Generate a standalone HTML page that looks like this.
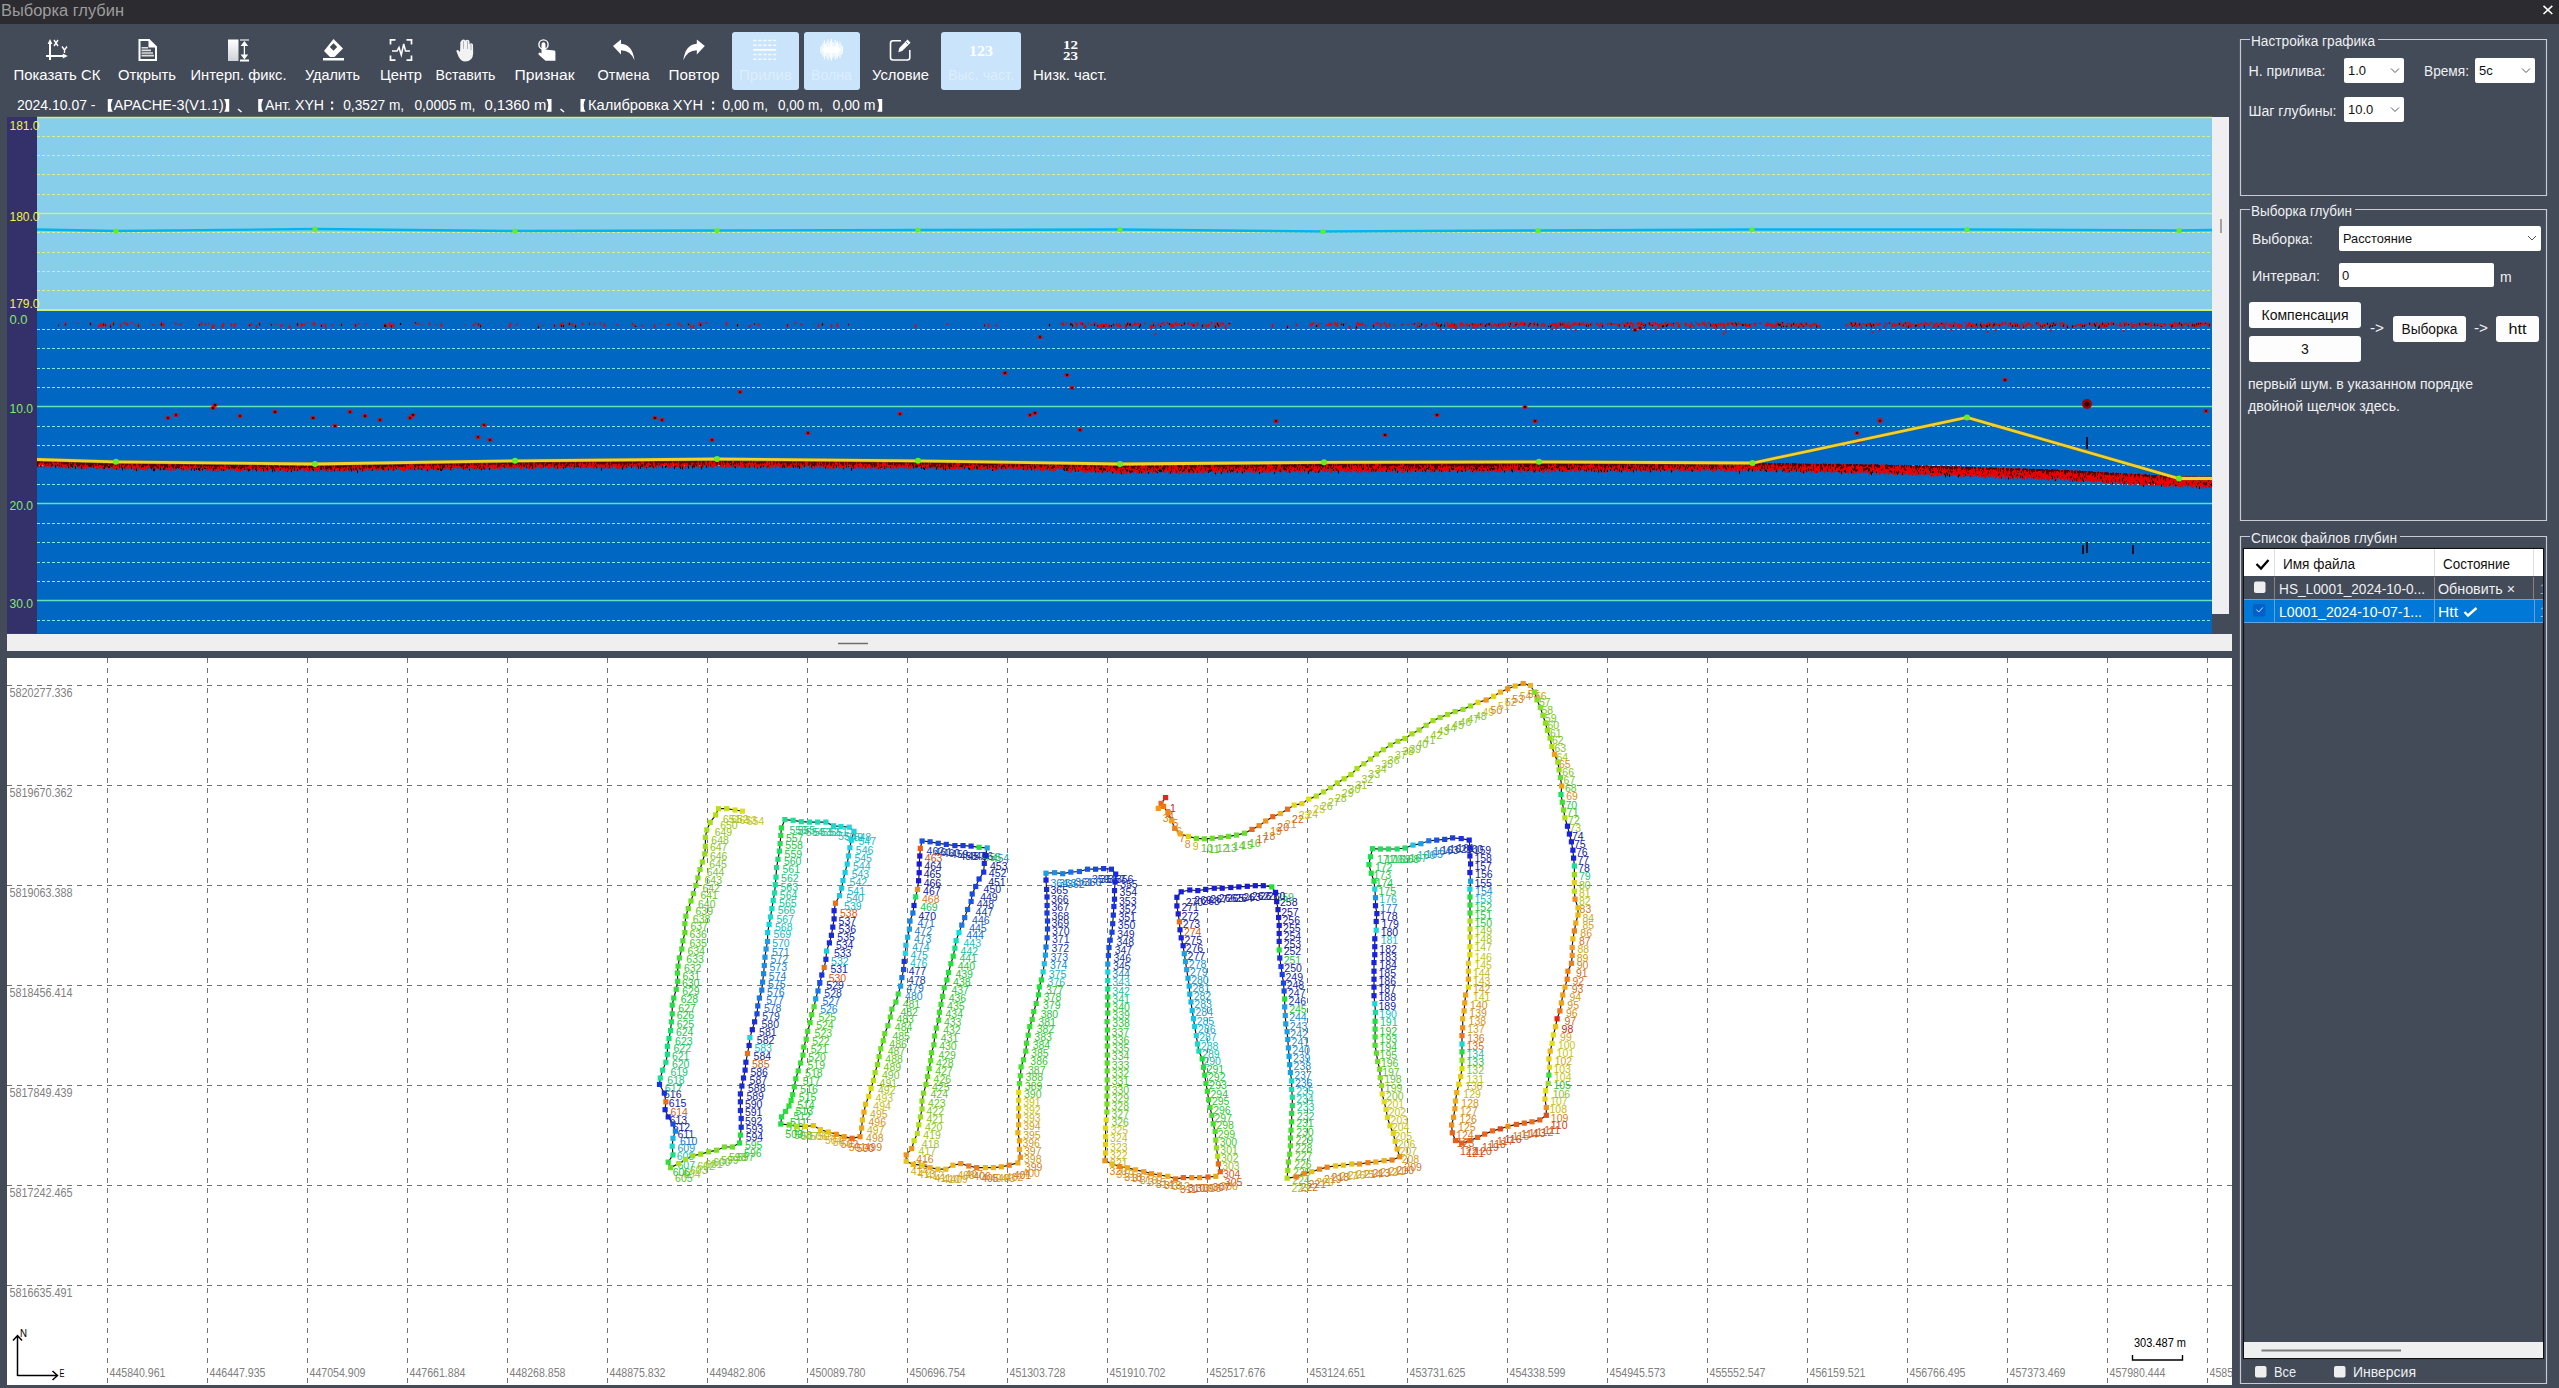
<!DOCTYPE html>
<html><head><meta charset="utf-8"><title>Выборка глубин</title>
<style>
html,body{margin:0;padding:0;background:#434a58;overflow:hidden;width:2559px;height:1388px}
svg{display:block}
text{font-family:'Liberation Sans', sans-serif}
</style></head><body>
<svg width="2559" height="1388" viewBox="0 0 2559 1388">
<rect x="0" y="0" width="2559" height="1388" fill="#434a58"/>
<rect x="0" y="0" width="2559" height="24" fill="#2c2b2f"/>
<text x="1" y="15.5" font-size="16" fill="#9d9d9d" textLength="123" lengthAdjust="spacingAndGlyphs">Выборка глубин</text>
<path d="M2543.5 5.8 L2552.3 14 M2552.3 5.8 L2543.5 14" stroke="#ffffff" stroke-width="1.6"/>
<rect x="732" y="32" width="67" height="58" rx="3" fill="#c9e4fb"/>
<rect x="804" y="32" width="56" height="58" rx="3" fill="#c9e4fb"/>
<rect x="941" y="32" width="80" height="58" rx="3" fill="#c9e4fb"/>
<text x="13.5" y="79.5" font-size="15" fill="#ffffff" textLength="87" lengthAdjust="spacingAndGlyphs">Показать СК</text>
<text x="118" y="79.5" font-size="15" fill="#ffffff" textLength="58" lengthAdjust="spacingAndGlyphs">Открыть</text>
<text x="190.5" y="79.5" font-size="15" fill="#ffffff" textLength="96" lengthAdjust="spacingAndGlyphs">Интерп. фикс.</text>
<text x="305" y="79.5" font-size="15" fill="#ffffff" textLength="55" lengthAdjust="spacingAndGlyphs">Удалить</text>
<text x="380" y="79.5" font-size="15" fill="#ffffff" textLength="42" lengthAdjust="spacingAndGlyphs">Центр</text>
<text x="435.5" y="79.5" font-size="15" fill="#ffffff" textLength="60" lengthAdjust="spacingAndGlyphs">Вставить</text>
<text x="514.5" y="79.5" font-size="15" fill="#ffffff" textLength="60" lengthAdjust="spacingAndGlyphs">Признак</text>
<text x="597.5" y="79.5" font-size="15" fill="#ffffff" textLength="52" lengthAdjust="spacingAndGlyphs">Отмена</text>
<text x="668.5" y="79.5" font-size="15" fill="#ffffff" textLength="51" lengthAdjust="spacingAndGlyphs">Повтор</text>
<text x="739" y="79.5" font-size="15" fill="#ddeefc" textLength="53" lengthAdjust="spacingAndGlyphs">Прилив</text>
<text x="811" y="79.5" font-size="15" fill="#ddeefc" textLength="41" lengthAdjust="spacingAndGlyphs">Волна</text>
<text x="872" y="79.5" font-size="15" fill="#ffffff" textLength="57" lengthAdjust="spacingAndGlyphs">Условие</text>
<text x="948" y="79.5" font-size="15" fill="#ddeefc" textLength="66" lengthAdjust="spacingAndGlyphs">Выс. част.</text>
<text x="1033" y="79.5" font-size="15" fill="#ffffff" textLength="74" lengthAdjust="spacingAndGlyphs">Низк. част.</text>
<g stroke="#fff" stroke-width="2" fill="none"><path d="M50 43 V60 M46 56 H64"/></g><path d="M50 39 L47.6 44 H52.4 Z M67.8 56 L62.8 53.6 V58.4 Z" fill="#fff"/><path d="M54 40 L58 46 M58 40 L54 46 M62 46.5 L64.5 50 L67 46.5 M64.5 50 V53" stroke="#fff" stroke-width="1.4" fill="none"/>
<path d="M139.5 40 H149 L156 47 V60 H139.5 Z" fill="none" stroke="#fff" stroke-width="2"/><path d="M148.5 39 L157 47.5 H148.5 Z" fill="#fff"/><path d="M141.5 47.8 H148 M141.5 50.4 H151 M141.5 53 H153 M141.5 55.6 H154" stroke="#ddd" stroke-width="1.6"/>
<defs><linearGradient id="gi" x1="0" y1="0" x2="0" y2="1"><stop offset="0" stop-color="#ffffff"/><stop offset="1" stop-color="#cfd2d6"/></linearGradient></defs><rect x="228" y="39.5" width="10.5" height="21.5" fill="url(#gi)"/><path d="M240 40 H249" stroke="#a9adb5" stroke-width="2"/><path d="M240 60.5 H249" stroke="#fff" stroke-width="2"/><path d="M244.4 44 V57" stroke="#fff" stroke-width="1.3"/><path d="M244.4 41 L240.6 46 H248.2 Z M244.4 59.5 L240.6 54.5 H248.2 Z" fill="#fff"/>
<path d="M323 58 H344 V60.5 H323 Z" fill="#fff"/><path d="M333.5 39 L343 48.5 L334.5 57 H330 L324 51 Z" fill="#fff"/><path d="M333.5 43.3 L337.2 47 L333.5 50.7 L329.8 47 Z" fill="#434a58"/>
<path d="M390.5 44.5 V39.8 H395.5 M406.5 39.8 H411.5 V44.5 M390.5 55.5 V60.2 H395.5 M406.5 60.2 H411.5 V55.5" stroke="#fff" stroke-width="1.7" fill="none"/><path d="M392 51 H397 L399 47.5 L401.3 55 L403.7 44 L405.5 51 H410" stroke="#fff" stroke-width="1.5" fill="none" stroke-linejoin="miter"/>
<path d="M461.5 40.5 Q463.5 38.5 465.5 40.5 Q467.5 39 469.5 41 V44 Q471.5 42.5 473 44.5 L473.2 53 Q473 61.5 465 61.5 Q461 61.5 458.5 56.5 L456.3 51 Q457 49.5 458.7 50.5 L460 52 Q460.5 44 460.2 43 Q460.7 41 461.5 40.5 Z" fill="#f2f2f2"/><path d="M463.5 41 V49 M467.5 41 V49 M471 44 V50" stroke="#a0a4ab" stroke-width="0.8"/>
<circle cx="543.5" cy="44.5" r="4.6" fill="none" stroke="#fff" stroke-width="1.4"/><path d="M541.5 44.5 Q541.5 42.3 543.5 42.3 Q545.5 42.3 545.5 44.5 V49.5 L554.3 50.5 Q555.4 50.8 555.4 52 V60.7 H545.5 L538.5 54.5 Q538 52.5 540 52.5 L541.5 53.5 Z" fill="#fff"/>
<path d="M613 46 L621 39.5 V43.7 Q632.5 44.5 634.5 60.3 Q630.5 50.5 621 50.3 V54.5 Z" fill="#fff"/>
<path d="M704.8 46 L696.8 39.5 V43.7 Q685.3 44.5 683.3 60.3 Q687.3 50.5 696.8 50.3 V54.5 Z" fill="#fff"/>
<g stroke="#f4faff" stroke-width="1.5" stroke-dasharray="3.4 1.6"><path d="M753.2 40.4 H776.2 M753.2 45.3 H776.2 M753.2 54.5 H776.2 M753.2 59.2 H776.2"/></g><path d="M753.2 49.8 H776.2" stroke="#ffffff" stroke-width="1.8"/>
<path d="M820.8 46.8 V52.8 M822.0 44.8 V54.8 M823.2 42.8 V56.8 M824.4 40.3 V59.3 M825.6 43.8 V55.8 M826.8 41.8 V57.8 M828.0 39.3 V60.3 M829.2 42.8 V56.8 M830.4 40.8 V58.8 M831.6 38.8 V60.8 M832.8 41.8 V57.8 M834.0 43.3 V56.3 M835.2 39.8 V59.8 M836.4 42.3 V57.3 M837.6 40.8 V58.8 M838.8 43.8 V55.8 M840.0 41.8 V57.8 M841.2 44.8 V54.8 M842.4 46.3 V53.3" stroke="#ffffff" stroke-width="1"/><ellipse cx="831.6" cy="49.8" rx="9.5" ry="3.6" fill="#ffffff" opacity="0.85"/>
<path d="M901 40.8 H893 Q890.5 40.8 890.5 43.3 V57.6 Q890.5 60 893 60 H907.3 Q909.8 60 909.8 57.6 V50" fill="none" stroke="#fff" stroke-width="1.6"/><path d="M907.5 39.6 L910.6 42.7 L902.2 51.1 L898.3 52.2 L899.3 48 Z" fill="#fff"/><path d="M906 42 L908.3 44.3" stroke="#434a58" stroke-width="0.7"/>
<text x="981" y="55.6" style="font-family:'Liberation Serif'" font-weight="bold" font-size="14.5" fill="#ffffff" text-anchor="middle" textLength="24" lengthAdjust="spacingAndGlyphs">123</text>
<text x="1070.4" y="49" style="font-family:'Liberation Serif'" font-weight="bold" font-size="12.5" fill="#ffffff" text-anchor="middle" textLength="15" lengthAdjust="spacingAndGlyphs">12</text><text x="1070.4" y="60.3" style="font-family:'Liberation Serif'" font-weight="bold" font-size="12.5" fill="#ffffff" text-anchor="middle" textLength="15" lengthAdjust="spacingAndGlyphs">23</text>
<text x="17" y="110" font-size="15" fill="#ffffff" textLength="78.5" lengthAdjust="spacingAndGlyphs">2024.10.07 -</text>
<path d="M112.8 99 H107.8 V111.8 H112.8 Q109.0 105.4 112.8 99 Z" fill="#ffffff"/>
<text x="113.7" y="110" font-size="15" fill="#fff" textLength="110" lengthAdjust="spacingAndGlyphs">APACHE-3(V1.1)</text>
<path d="M224.2 99 H229.2 V111.8 H224.2 Q228.0 105.4 224.2 99 Z" fill="#ffffff"/>
<path d="M238 109 L241.5 112" stroke="#ffffff" stroke-width="1.6" fill="none"/>
<path d="M263.2 99 H258.2 V111.8 H263.2 Q259.4 105.4 263.2 99 Z" fill="#ffffff"/>
<text x="265" y="110" font-size="15" fill="#fff" textLength="59" lengthAdjust="spacingAndGlyphs">Ант. XYH</text>
<rect x="331" y="101.5" width="2.2" height="2.2" fill="#fff"/><rect x="331" y="107.5" width="2.2" height="2.2" fill="#fff"/>
<text x="343.2" y="110" font-size="15" fill="#fff" textLength="61" lengthAdjust="spacingAndGlyphs">0,3527 m,</text>
<text x="414.4" y="110" font-size="15" fill="#fff" textLength="61" lengthAdjust="spacingAndGlyphs">0,0005 m,</text>
<text x="484.4" y="110" font-size="15" fill="#fff" textLength="62" lengthAdjust="spacingAndGlyphs">0,1360 m</text>
<path d="M546.5 99 H551.5 V111.8 H546.5 Q550.3 105.4 546.5 99 Z" fill="#ffffff"/>
<path d="M560.5 109 L564.0 112" stroke="#ffffff" stroke-width="1.6" fill="none"/>
<path d="M585.5 99 H580.5 V111.8 H585.5 Q581.7 105.4 585.5 99 Z" fill="#ffffff"/>
<text x="588" y="110" font-size="15" fill="#fff" textLength="115" lengthAdjust="spacingAndGlyphs">Калибровка XYH</text>
<rect x="712" y="101.5" width="2.2" height="2.2" fill="#fff"/><rect x="712" y="107.5" width="2.2" height="2.2" fill="#fff"/>
<text x="722.5" y="110" font-size="15" fill="#fff" textLength="45.5" lengthAdjust="spacingAndGlyphs">0,00 m,</text>
<text x="778" y="110" font-size="15" fill="#fff" textLength="45" lengthAdjust="spacingAndGlyphs">0,00 m,</text>
<text x="832.5" y="110" font-size="15" fill="#fff" textLength="43" lengthAdjust="spacingAndGlyphs">0,00 m</text>
<path d="M877.2 99 H882.2 V111.8 H877.2 Q881.0 105.4 877.2 99 Z" fill="#ffffff"/>
<rect x="7" y="117" width="30" height="516.5" fill="#33306a"/>
<rect x="37" y="117" width="2175" height="193" fill="#87ceeb"/>
<rect x="37" y="310" width="2175" height="323.5" fill="#0068c2"/>
<rect x="2212" y="117" width="17" height="497" fill="#efeff1"/>
<path d="M2221 219 V233" stroke="#888" stroke-width="1.5"/>
<path d="M37 117.5 H2212" stroke="#c8f27c" stroke-width="1.5"/>
<path d="M37 136.5 H2212" stroke="#d8f084" stroke-width="1" stroke-dasharray="3 2"/>
<path d="M37 155.5 H2212" stroke="#d8f084" stroke-width="1" stroke-dasharray="3 2"/>
<path d="M37 174.5 H2212" stroke="#d8f084" stroke-width="1" stroke-dasharray="3 2"/>
<path d="M37 194.5 H2212" stroke="#d8f084" stroke-width="1" stroke-dasharray="3 2"/>
<path d="M37 213.5 H2212" stroke="#c8f27c" stroke-width="1.5"/>
<path d="M37 232.5 H2212" stroke="#d8f084" stroke-width="1" stroke-dasharray="3 2"/>
<path d="M37 252.5 H2212" stroke="#d8f084" stroke-width="1" stroke-dasharray="3 2"/>
<path d="M37 271.5 H2212" stroke="#d8f084" stroke-width="1" stroke-dasharray="3 2"/>
<path d="M37 290.5 H2212" stroke="#d8f084" stroke-width="1" stroke-dasharray="3 2"/>
<path d="M37 310 H2212" stroke="#c8f27c" stroke-width="2"/>
<path d="M37 329.5 H2212" stroke="#8ae8ea" stroke-width="1" stroke-dasharray="3 2"/>
<path d="M37 348.5 H2212" stroke="#8ae8ea" stroke-width="1" stroke-dasharray="3 2"/>
<path d="M37 368.5 H2212" stroke="#8ae8ea" stroke-width="1" stroke-dasharray="3 2"/>
<path d="M37 387.5 H2212" stroke="#8ae8ea" stroke-width="1" stroke-dasharray="3 2"/>
<path d="M37 406.5 H2212" stroke="#62e2bc" stroke-width="1.3"/>
<path d="M37 426.5 H2212" stroke="#8ae8ea" stroke-width="1" stroke-dasharray="3 2"/>
<path d="M37 445.5 H2212" stroke="#8ae8ea" stroke-width="1" stroke-dasharray="3 2"/>
<path d="M37 465.5 H2212" stroke="#8ae8ea" stroke-width="1" stroke-dasharray="3 2"/>
<path d="M37 484.5 H2212" stroke="#8ae8ea" stroke-width="1" stroke-dasharray="3 2"/>
<path d="M37 503.5 H2212" stroke="#62e2bc" stroke-width="1.3"/>
<path d="M37 523.5 H2212" stroke="#8ae8ea" stroke-width="1" stroke-dasharray="3 2"/>
<path d="M37 542.5 H2212" stroke="#8ae8ea" stroke-width="1" stroke-dasharray="3 2"/>
<path d="M37 562.5 H2212" stroke="#8ae8ea" stroke-width="1" stroke-dasharray="3 2"/>
<path d="M37 581.5 H2212" stroke="#8ae8ea" stroke-width="1" stroke-dasharray="3 2"/>
<path d="M37 600.5 H2212" stroke="#62e2bc" stroke-width="1.3"/>
<path d="M37 620.5 H2212" stroke="#8ae8ea" stroke-width="1" stroke-dasharray="3 2"/>
<text x="9.5" y="130" font-size="12" fill="#f2f24a" textLength="30" lengthAdjust="spacingAndGlyphs">181.0</text>
<text x="9.5" y="220.5" font-size="12" fill="#f2f24a" textLength="30" lengthAdjust="spacingAndGlyphs">180.0</text>
<text x="9.5" y="308" font-size="12" fill="#f2f24a" textLength="30" lengthAdjust="spacingAndGlyphs">179.0</text>
<text x="9.5" y="323.5" font-size="12" fill="#84e86a" textLength="18" lengthAdjust="spacingAndGlyphs">0.0</text>
<text x="9.5" y="413" font-size="12" fill="#84e86a" textLength="23.5" lengthAdjust="spacingAndGlyphs">10.0</text>
<text x="9.5" y="510" font-size="12" fill="#84e86a" textLength="23.5" lengthAdjust="spacingAndGlyphs">20.0</text>
<text x="9.5" y="607.5" font-size="12" fill="#84e86a" textLength="23.5" lengthAdjust="spacingAndGlyphs">30.0</text>
<path d="M58.5 323.6v1M65.5 322.3v4M77.5 322.6v1M90.5 322.2v3M98.5 324.6v3M100.5 323.2v3M101.5 325.0v2M102.5 323.8v2M103.5 322.6v4M105.5 323.8v3M110.5 323.9v3M113.5 322.1v2M120.5 323.4v4M124.5 322.0v2M126.5 322.8v3M127.5 323.1v3M131.5 322.1v1M134.5 323.8v1M138.5 323.6v4M153.5 323.9v2M160.5 324.3v1M161.5 322.1v4M163.5 322.9v4M175.5 322.6v2M177.5 323.5v1M180.5 323.4v2M199.5 324.3v2M201.5 322.3v3M205.5 323.4v2M208.5 322.7v2M212.5 324.5v4M213.5 324.8v4M215.5 324.7v1M222.5 324.2v4M223.5 322.7v3M231.5 323.3v3M234.5 324.6v3M235.5 323.0v2M249.5 323.5v3M251.5 323.6v2M256.5 324.9v3M259.5 322.3v2M270.5 323.3v1M271.5 324.3v1M276.5 324.2v1M281.5 323.9v3M289.5 324.7v4M297.5 322.7v4M301.5 323.2v4M302.5 323.7v2M304.5 323.5v2M307.5 322.3v1M312.5 322.5v2M314.5 322.2v4M321.5 324.1v2M324.5 323.5v1M325.5 324.5v4M332.5 324.2v2M341.5 323.0v3M355.5 323.8v4M358.5 322.8v2M366.5 323.8v1M384.5 324.3v3M385.5 322.9v3M386.5 324.7v3M389.5 322.3v4M390.5 324.9v2M391.5 323.9v3M393.5 323.3v4M400.5 322.9v2M415.5 322.2v2M416.5 323.6v1M418.5 322.7v2M422.5 324.6v1M429.5 322.5v3M435.5 324.6v1M441.5 322.9v4M464.5 324.5v1M473.5 324.3v2M475.5 322.5v2M478.5 323.6v3M480.5 323.9v2M509.5 324.2v4M510.5 322.6v3M516.5 324.8v1M517.5 323.4v1M538.5 324.6v3M543.5 324.8v1M554.5 324.2v3M560.5 323.1v3M561.5 323.4v3M562.5 322.6v2M563.5 324.5v2M568.5 322.9v3M569.5 322.2v2M572.5 323.3v3M575.5 324.3v4M582.5 322.6v3M589.5 322.4v1M594.5 322.7v2M600.5 322.6v2M604.5 323.2v4M617.5 324.1v2M632.5 322.7v3M634.5 324.6v2M635.5 324.9v2M642.5 324.5v2M654.5 324.3v4M660.5 323.6v1M667.5 324.0v2M669.5 323.0v3M678.5 322.3v3M681.5 324.7v2M688.5 322.4v3M690.5 324.7v3M693.5 324.7v4M699.5 322.2v3M700.5 323.6v3M701.5 322.5v3M706.5 322.1v2M726.5 322.3v4M737.5 324.1v2M749.5 324.9v3M750.5 324.7v1M754.5 322.9v2M758.5 323.4v3M787.5 323.8v4M795.5 322.3v2M801.5 322.9v3M818.5 324.3v3M822.5 322.7v3M831.5 324.6v3M837.5 323.2v4M848.5 323.3v2M915.5 324.3v4M947.5 323.2v2M984.5 323.8v2M988.5 323.6v4M996.5 324.4v2M1049.5 323.8v2M1061.5 323.0v1M1062.5 322.2v3M1063.5 323.2v3M1066.5 322.8v2M1070.5 322.5v1M1071.5 322.7v3M1072.5 324.3v4M1075.5 322.1v2M1076.5 323.7v4M1077.5 322.9v2M1080.5 322.1v2M1081.5 322.1v3M1082.5 322.6v2M1084.5 324.4v4M1085.5 324.9v3M1088.5 322.4v2M1091.5 323.9v2M1094.5 322.6v2M1095.5 322.3v2M1096.5 323.2v1M1097.5 324.9v2M1098.5 325.0v3M1099.5 324.3v2M1100.5 324.8v2M1101.5 324.2v4M1102.5 323.8v3M1103.5 323.7v1M1104.5 324.5v3M1105.5 323.9v3M1106.5 323.0v3M1108.5 324.2v3M1109.5 325.0v3M1111.5 325.0v1M1113.5 323.6v3M1116.5 322.7v3M1117.5 324.7v2M1118.5 324.8v2M1119.5 323.2v4M1120.5 325.0v2M1125.5 324.4v4M1126.5 323.8v4M1127.5 322.4v1M1128.5 322.2v2M1129.5 323.2v2M1130.5 323.4v3M1132.5 324.6v2M1134.5 323.4v2M1135.5 322.2v3M1137.5 324.0v1M1138.5 322.4v2M1139.5 324.6v3M1140.5 323.1v2M1144.5 322.2v2M1150.5 324.5v4M1151.5 325.0v4M1152.5 325.0v2M1153.5 322.3v1M1155.5 324.7v3M1155.5 333.2v2M1158.5 323.1v3M1160.5 325.0v3M1161.5 322.9v2M1162.5 322.2v2M1163.5 322.4v1M1164.5 323.7v2M1167.5 322.0v2M1169.5 322.9v3M1170.5 324.3v1M1171.5 323.6v4M1172.5 324.0v3M1173.5 324.7v3M1175.5 322.3v3M1176.5 322.4v2M1177.5 323.6v3M1179.5 323.1v2M1181.5 323.8v1M1183.5 322.9v3M1184.5 322.4v2M1188.5 322.3v3M1191.5 323.0v2M1192.5 324.3v1M1193.5 323.0v4M1194.5 324.2v3M1197.5 322.3v4M1198.5 323.3v1M1202.5 324.5v4M1204.5 324.6v1M1206.5 324.6v3M1208.5 324.1v3M1209.5 324.3v1M1211.5 322.0v2M1214.5 323.8v3M1215.5 324.9v2M1216.5 322.1v1M1217.5 322.6v3M1218.5 323.5v2M1219.5 325.0v2M1220.5 322.5v2M1222.5 322.6v3M1223.5 322.6v2M1225.5 324.9v4M1228.5 323.1v2M1229.5 322.8v2M1272.5 323.7v4M1287.5 324.8v3M1296.5 323.5v3M1310.5 323.8v3M1311.5 323.1v2M1312.5 323.0v2M1313.5 322.1v2M1316.5 324.6v2M1318.5 322.7v4M1321.5 322.9v1M1326.5 324.3v2M1328.5 324.0v1M1329.5 322.4v4M1331.5 322.9v3M1334.5 322.1v1M1335.5 322.5v3M1336.5 324.8v2M1337.5 322.7v4M1341.5 322.4v2M1343.5 323.0v3M1346.5 322.7v1M1349.5 324.9v4M1356.5 324.8v4M1357.5 322.1v3M1358.5 322.7v3M1359.5 323.0v2M1360.5 323.9v2M1362.5 322.4v3M1365.5 324.7v2M1373.5 323.7v3M1375.5 323.4v1M1377.5 322.0v3M1380.5 323.0v4M1382.5 323.3v1M1384.5 322.1v2M1385.5 323.7v1M1386.5 324.5v3M1389.5 322.9v4M1394.5 324.4v2M1401.5 324.8v1M1402.5 322.9v3M1407.5 324.2v1M1408.5 324.3v1M1411.5 323.1v1M1413.5 323.9v1M1414.5 322.8v2M1417.5 324.9v3M1418.5 322.3v2M1419.5 324.6v3M1421.5 323.3v3M1425.5 324.8v3M1426.5 323.4v3M1430.5 323.6v1M1432.5 322.5v3M1435.5 324.4v1M1436.5 322.3v3M1437.5 323.4v3M1438.5 323.7v4M1440.5 324.1v2M1440.5 328.4v2M1441.5 323.4v1M1444.5 323.0v1M1446.5 322.1v1M1447.5 323.3v3M1448.5 324.6v3M1449.5 324.6v3M1450.5 324.4v3M1451.5 322.7v3M1452.5 323.3v4M1453.5 323.8v4M1454.5 323.2v3M1455.5 324.9v4M1456.5 324.5v4M1460.5 322.8v4M1461.5 322.1v3M1463.5 323.7v3M1466.5 323.5v3M1467.5 323.4v3M1469.5 324.3v1M1471.5 322.8v2M1472.5 323.2v3M1473.5 324.7v4M1474.5 323.5v4M1475.5 323.0v3M1476.5 324.6v2M1477.5 324.8v3M1478.5 323.6v3M1480.5 323.3v3M1481.5 323.0v2M1482.5 322.7v4M1485.5 324.8v1M1486.5 323.6v3M1487.5 323.7v1M1488.5 323.4v2M1489.5 322.9v2M1490.5 322.3v1M1491.5 324.7v3M1493.5 324.5v2M1494.5 323.6v2M1495.5 323.9v1M1496.5 324.6v3M1498.5 323.2v3M1499.5 324.9v3M1500.5 322.9v2M1502.5 322.4v3M1503.5 325.0v3M1504.5 324.1v1M1505.5 322.7v3M1508.5 322.0v4M1509.5 324.3v2M1510.5 322.6v4M1512.5 322.6v1M1513.5 325.0v2M1514.5 322.3v1M1515.5 323.1v4M1516.5 322.1v3M1517.5 322.7v2M1518.5 323.9v4M1520.5 322.2v3M1521.5 322.4v2M1522.5 322.4v3M1523.5 322.0v4M1524.5 322.6v4M1525.5 322.7v3M1528.5 324.5v2M1529.5 322.4v4M1530.5 322.5v3M1533.5 323.1v4M1534.5 322.1v3M1537.5 322.9v4M1538.5 324.0v2M1541.5 324.8v2M1542.5 322.8v3M1544.5 323.8v3M1548.5 324.9v2M1550.5 323.9v2M1551.5 324.6v1M1552.5 323.1v3M1552.5 328.0v2M1553.5 323.0v2M1554.5 323.3v2M1555.5 323.4v4M1556.5 322.9v4M1557.5 324.7v4M1558.5 322.5v1M1559.5 322.6v4M1560.5 322.3v1M1561.5 324.6v2M1562.5 323.4v1M1563.5 322.3v4M1564.5 324.0v4M1565.5 322.7v1M1566.5 324.3v4M1567.5 324.6v3M1568.5 322.2v2M1569.5 324.9v4M1570.5 324.4v3M1572.5 324.6v1M1573.5 322.2v4M1574.5 322.3v2M1575.5 323.1v2M1575.5 329.0v2M1576.5 322.5v1M1577.5 324.0v2M1579.5 322.1v4M1581.5 323.2v2M1582.5 323.5v2M1583.5 322.2v2M1584.5 324.2v1M1586.5 323.6v2M1587.5 322.8v2M1588.5 324.2v3M1590.5 323.9v2M1591.5 322.4v4M1596.5 322.7v2M1597.5 322.8v3M1599.5 324.5v3M1600.5 323.7v2M1601.5 322.4v2M1602.5 323.6v3M1607.5 323.4v2M1608.5 322.6v1M1610.5 322.7v3M1611.5 323.3v2M1613.5 323.7v1M1614.5 322.9v2M1617.5 323.4v2M1618.5 323.2v3M1619.5 324.5v3M1622.5 322.4v2M1624.5 324.5v3M1625.5 323.0v4M1626.5 323.2v3M1627.5 322.2v3M1628.5 323.5v2M1629.5 324.5v3M1630.5 322.4v2M1631.5 322.0v2M1632.5 324.5v3M1633.5 323.4v2M1637.5 322.5v3M1638.5 322.2v3M1639.5 322.2v2M1640.5 323.8v3M1641.5 322.0v2M1642.5 323.4v1M1643.5 323.1v3M1644.5 324.9v1M1645.5 323.4v3M1648.5 322.2v2M1649.5 322.2v3M1650.5 324.3v2M1651.5 323.7v2M1652.5 323.7v3M1653.5 322.3v1M1655.5 322.0v3M1655.5 328.6v2M1657.5 323.5v2M1658.5 324.9v4M1659.5 323.4v3M1660.5 325.0v1M1661.5 323.7v1M1662.5 323.7v3M1663.5 324.5v3M1665.5 322.2v4M1666.5 324.1v1M1667.5 323.1v3M1668.5 322.5v3M1669.5 323.8v1M1671.5 322.7v3M1673.5 322.9v4M1676.5 322.3v1M1677.5 322.3v2M1678.5 324.2v3M1679.5 324.1v4M1681.5 322.7v1M1685.5 322.2v4M1686.5 323.2v3M1689.5 324.0v4M1690.5 325.0v3M1691.5 322.6v3M1693.5 325.0v2M1696.5 322.4v1M1697.5 322.9v2M1698.5 324.0v1M1699.5 323.4v3M1702.5 322.0v3M1704.5 322.2v4M1706.5 324.6v3M1708.5 322.0v2M1709.5 322.9v1M1710.5 323.2v1M1711.5 324.9v2M1712.5 323.6v3M1713.5 323.6v2M1714.5 324.7v4M1715.5 323.1v2M1716.5 323.3v3M1717.5 324.5v4M1718.5 322.9v3M1720.5 322.6v4M1722.5 323.7v1M1723.5 322.7v4M1723.5 332.8v2M1724.5 324.7v4M1725.5 324.1v1M1725.5 330.8v2M1727.5 322.5v3M1728.5 323.2v3M1729.5 322.9v1M1730.5 322.0v1M1731.5 322.2v2M1732.5 323.2v2M1733.5 323.5v3M1735.5 322.6v3M1736.5 323.0v4M1738.5 322.2v2M1739.5 324.0v1M1740.5 323.1v2M1742.5 323.1v2M1743.5 323.7v2M1745.5 322.7v2M1746.5 324.1v3M1747.5 323.9v3M1749.5 324.2v3M1750.5 324.5v3M1751.5 322.9v1M1754.5 322.9v2M1755.5 322.5v4M1759.5 323.0v1M1760.5 322.4v2M1765.5 323.9v1M1766.5 323.9v3M1767.5 322.2v3M1768.5 323.1v3M1770.5 323.2v2M1771.5 323.5v4M1773.5 324.6v3M1775.5 324.8v3M1776.5 323.3v4M1777.5 322.1v3M1778.5 323.4v2M1779.5 323.7v2M1780.5 322.8v2M1781.5 324.9v3M1782.5 322.1v3M1783.5 324.3v2M1786.5 324.8v3M1787.5 322.7v4M1789.5 322.7v1M1790.5 323.6v3M1791.5 324.4v3M1792.5 324.8v1M1793.5 322.5v3M1794.5 324.0v2M1795.5 323.8v3M1796.5 323.5v3M1798.5 324.9v3M1799.5 323.3v4M1800.5 322.4v3M1801.5 323.2v1M1802.5 324.2v3M1803.5 324.5v2M1805.5 322.5v3M1806.5 322.5v4M1807.5 324.6v1M1809.5 324.4v2M1810.5 324.4v3M1811.5 324.4v3M1813.5 323.0v3M1814.5 323.5v2M1815.5 322.7v2M1816.5 323.4v2M1817.5 325.0v3M1819.5 324.6v3M1846.5 323.8v3M1850.5 322.6v3M1851.5 322.2v3M1852.5 324.1v3M1854.5 323.5v2M1855.5 322.1v1M1856.5 324.6v3M1857.5 324.1v3M1859.5 322.4v3M1861.5 324.4v4M1862.5 323.2v1M1863.5 323.2v1M1864.5 324.3v1M1866.5 323.7v3M1867.5 323.6v2M1868.5 322.8v2M1869.5 323.1v3M1870.5 322.4v1M1871.5 324.2v4M1872.5 324.3v2M1872.5 331.4v2M1873.5 323.6v2M1874.5 323.7v4M1876.5 322.6v1M1877.5 323.7v2M1878.5 323.9v2M1879.5 322.7v2M1879.5 328.8v2M1880.5 323.5v1M1884.5 324.9v3M1885.5 322.6v2M1886.5 323.1v1M1887.5 324.4v1M1889.5 322.1v2M1892.5 323.0v4M1893.5 322.8v1M1894.5 323.8v3M1895.5 324.6v2M1896.5 324.6v2M1898.5 322.6v3M1899.5 322.8v3M1900.5 322.4v1M1901.5 324.5v2M1902.5 324.7v2M1903.5 323.3v3M1904.5 322.7v2M1905.5 322.3v2M1906.5 324.5v3M1907.5 322.2v2M1908.5 324.9v3M1909.5 322.2v4M1910.5 323.7v4M1911.5 324.9v2M1912.5 324.0v1M1915.5 324.5v3M1916.5 324.1v2M1918.5 323.6v4M1920.5 323.6v2M1921.5 322.6v1M1923.5 323.4v2M1924.5 323.8v3M1925.5 322.1v2M1926.5 323.0v2M1927.5 323.2v1M1928.5 324.3v2M1929.5 324.0v1M1930.5 322.3v2M1932.5 322.7v1M1933.5 324.9v3M1934.5 324.2v3M1935.5 323.4v2M1936.5 322.2v3M1937.5 324.8v3M1938.5 324.7v2M1939.5 323.2v2M1941.5 322.6v3M1943.5 322.6v4M1944.5 324.8v4M1945.5 324.4v1M1946.5 322.2v2M1948.5 323.9v1M1949.5 323.9v3M1950.5 322.7v1M1951.5 324.4v3M1951.5 329.0v2M1952.5 324.9v1M1953.5 323.3v2M1954.5 322.3v4M1956.5 323.4v1M1957.5 324.4v3M1958.5 323.5v2M1959.5 324.8v4M1961.5 324.0v3M1964.5 322.2v1M1966.5 324.5v4M1967.5 324.5v2M1968.5 322.6v4M1969.5 322.2v3M1970.5 323.7v3M1971.5 324.0v2M1972.5 323.8v4M1973.5 324.3v2M1974.5 323.9v2M1975.5 324.9v3M1976.5 323.0v1M1977.5 324.9v3M1980.5 322.2v2M1981.5 323.9v4M1983.5 324.3v4M1984.5 323.8v3M1986.5 324.3v1M1987.5 323.8v3M1987.5 330.9v2M1988.5 322.3v4M1989.5 322.6v3M1990.5 323.5v3M1992.5 324.7v3M1993.5 322.9v4M1994.5 322.2v3M1995.5 323.9v2M1995.5 329.2v2M1996.5 323.6v2M1998.5 322.9v3M1999.5 324.8v3M2000.5 323.9v2M2002.5 322.0v3M2005.5 322.0v3M2008.5 324.4v2M2009.5 322.4v2M2010.5 322.3v4M2012.5 324.1v4M2014.5 322.6v3M2015.5 323.5v2M2016.5 323.0v4M2017.5 323.3v3M2019.5 324.4v4M2022.5 323.1v3M2023.5 324.7v4M2024.5 322.4v1M2025.5 324.7v2M2026.5 324.2v3M2027.5 322.5v2M2028.5 322.2v3M2029.5 323.5v2M2031.5 324.6v3M2032.5 324.8v1M2035.5 325.0v1M2036.5 322.2v2M2037.5 322.5v2M2038.5 322.2v4M2039.5 324.1v2M2040.5 324.7v4M2042.5 324.5v4M2043.5 323.4v1M2044.5 323.9v2M2045.5 323.6v4M2047.5 322.7v2M2049.5 324.4v3M2050.5 324.2v2M2050.5 330.1v2M2051.5 322.7v2M2052.5 324.8v1M2053.5 322.5v1M2054.5 323.0v3M2055.5 323.8v2M2056.5 322.4v2M2059.5 322.7v1M2060.5 322.5v4M2062.5 322.1v2M2063.5 322.9v4M2064.5 323.5v1M2066.5 324.6v2M2067.5 324.4v4M2072.5 324.9v3M2073.5 325.0v2M2075.5 325.0v2M2076.5 324.6v2M2078.5 324.1v2M2080.5 323.7v4M2081.5 322.9v2M2082.5 324.4v1M2084.5 324.7v2M2085.5 323.7v2M2086.5 324.2v1M2089.5 322.3v1M2090.5 323.3v2M2091.5 324.4v2M2093.5 322.7v2M2094.5 323.5v1M2095.5 324.2v3M2096.5 322.1v3M2098.5 325.0v1M2099.5 324.6v4M2100.5 323.9v2M2101.5 323.8v4M2102.5 322.2v3M2103.5 324.8v2M2104.5 323.8v4M2105.5 322.8v4M2106.5 323.9v3M2107.5 323.5v3M2108.5 322.6v3M2111.5 322.1v4M2112.5 322.4v2M2113.5 322.6v2M2116.5 324.2v2M2119.5 323.3v3M2120.5 322.7v4M2121.5 324.8v2M2123.5 322.3v1M2123.5 329.9v2M2124.5 322.7v4M2125.5 322.9v3M2126.5 322.2v3M2128.5 324.0v2M2131.5 322.5v4M2132.5 324.9v3M2133.5 324.1v3M2134.5 324.4v1M2135.5 324.7v1M2136.5 323.2v4M2138.5 324.4v1M2139.5 322.5v2M2140.5 322.7v4M2142.5 322.2v3M2143.5 323.4v2M2145.5 322.6v2M2146.5 323.4v2M2147.5 323.6v3M2148.5 322.8v3M2149.5 322.4v2M2150.5 324.3v3M2151.5 322.5v4M2154.5 322.8v1M2155.5 324.2v3M2156.5 323.5v1M2157.5 323.2v1M2158.5 323.6v2M2160.5 323.1v4M2161.5 325.0v2M2163.5 323.5v2M2164.5 322.9v2M2165.5 323.8v3M2169.5 323.7v2M2170.5 323.9v2M2171.5 324.1v4M2172.5 323.7v2M2173.5 324.3v3M2174.5 322.0v3M2175.5 324.7v2M2176.5 322.9v1M2177.5 323.5v3M2178.5 323.7v3M2179.5 322.2v3M2181.5 322.6v2M2182.5 324.5v4M2183.5 324.8v1M2184.5 322.7v2M2186.5 322.7v3M2187.5 323.1v3M2188.5 324.6v1M2189.5 322.6v1M2191.5 324.0v3M2192.5 322.4v3M2194.5 323.4v4M2196.5 323.2v4M2197.5 324.1v3M2198.5 322.0v2M2199.5 323.5v3M2200.5 322.6v4M2202.5 322.4v3M2203.5 323.6v1M2204.5 323.4v2M2205.5 322.1v1M2207.5 322.7v3M2208.5 323.7v4M2209.5 322.6v3" stroke="#e80000" stroke-width="1.6"/>
<path d="M58.5 325.3v1M65.5 324.3v1M90.5 323.3v2M103.5 323.8v2M105.5 324.5v1M110.5 325.8v2M113.5 323.5v2M138.5 325.5v1M161.5 323.6v2M199.5 324.6v1M249.5 324.9v1M259.5 323.4v2M271.5 324.6v1M297.5 323.5v2M321.5 325.0v2M341.5 324.8v1M355.5 324.7v1M384.5 324.6v2M385.5 324.9v2M391.5 325.6v2M400.5 323.1v2M415.5 322.2v1M478.5 323.8v1M480.5 325.5v2M538.5 326.5v2M554.5 325.3v1M561.5 324.9v2M563.5 325.3v2M569.5 323.0v2M575.5 325.5v2M589.5 323.7v1M635.5 326.1v1M688.5 324.1v1M700.5 324.1v2M737.5 324.5v2M754.5 323.4v1M787.5 324.7v1M822.5 323.5v2M848.5 324.4v1M984.5 325.2v1M1049.5 324.3v2M1070.5 323.6v2M1071.5 323.8v1M1072.5 324.6v2M1082.5 323.7v1M1094.5 324.1v2M1097.5 325.2v1M1103.5 325.2v2M1104.5 325.7v1M1109.5 325.3v1M1111.5 325.1v2M1113.5 324.2v1M1126.5 325.3v1M1127.5 323.1v2M1129.5 323.8v2M1130.5 323.6v2M1139.5 326.0v2M1140.5 324.3v2M1153.5 324.2v2M1160.5 326.1v1M1169.5 323.1v2M1181.5 325.0v1M1184.5 322.5v2M1193.5 324.9v1M1202.5 324.7v2M1215.5 325.9v2M1217.5 323.0v2M1218.5 324.7v2M1229.5 322.9v1M1287.5 326.6v2M1316.5 325.1v2M1341.5 324.1v1M1343.5 324.0v2M1356.5 326.4v2M1373.5 325.6v2M1414.5 323.4v1M1419.5 326.1v1M1421.5 323.4v2M1436.5 322.8v1M1438.5 325.3v1M1440.5 325.3v2M1441.5 323.9v2M1444.5 324.7v2M1454.5 324.5v1M1469.5 325.4v1M1472.5 323.8v1M1480.5 323.7v1M1485.5 324.9v2M1486.5 323.8v1M1488.5 323.4v1M1489.5 323.6v2M1498.5 324.4v1M1509.5 326.1v1M1510.5 322.9v2M1515.5 324.6v1M1516.5 323.9v1M1524.5 323.7v1M1528.5 325.7v1M1529.5 324.1v1M1530.5 322.9v1M1534.5 323.7v1M1537.5 323.6v2M1548.5 325.9v1M1550.5 325.8v2M1551.5 325.3v1M1560.5 323.6v2M1562.5 323.8v1M1579.5 323.7v1M1586.5 324.7v2M1588.5 325.2v1M1590.5 324.1v1M1602.5 325.4v2M1611.5 323.5v1M1619.5 324.8v1M1624.5 325.6v1M1627.5 322.5v1M1629.5 326.0v2M1641.5 323.7v1M1643.5 325.0v1M1644.5 326.9v1M1645.5 324.6v2M1649.5 322.7v2M1652.5 325.0v1M1662.5 325.5v2M1663.5 324.9v2M1666.5 325.1v2M1667.5 324.0v2M1673.5 323.1v1M1710.5 324.2v2M1715.5 324.6v1M1716.5 325.3v2M1732.5 323.3v1M1735.5 322.6v1M1736.5 323.6v2M1742.5 324.0v2M1743.5 324.8v1M1745.5 324.4v1M1749.5 324.2v1M1778.5 323.5v2M1779.5 324.1v2M1780.5 324.5v1M1781.5 326.5v1M1782.5 322.3v1M1783.5 326.0v1M1786.5 326.0v1M1791.5 324.6v2M1793.5 323.0v2M1798.5 326.4v1M1801.5 323.8v1M1803.5 325.9v1M1806.5 323.6v1M1816.5 325.4v2M1851.5 322.5v2M1852.5 325.8v1M1854.5 325.0v1M1855.5 322.7v2M1859.5 323.6v2M1866.5 324.4v2M1870.5 323.5v2M1871.5 325.3v2M1873.5 323.9v2M1889.5 322.7v1M1899.5 322.9v2M1903.5 324.8v1M1905.5 322.6v1M1908.5 325.8v2M1915.5 324.9v2M1916.5 325.1v1M1924.5 325.7v2M1938.5 326.3v1M1941.5 323.0v1M1953.5 325.0v2M1971.5 324.9v2M1976.5 323.7v2M1980.5 324.0v2M1981.5 325.5v2M1986.5 325.2v2M1987.5 325.3v2M1989.5 324.1v2M1993.5 324.2v2M1994.5 323.4v2M1999.5 325.0v1M2010.5 323.3v1M2012.5 325.0v2M2015.5 324.7v2M2017.5 324.6v2M2023.5 326.4v1M2036.5 322.8v1M2040.5 325.6v1M2042.5 326.3v1M2044.5 324.9v1M2047.5 322.8v2M2049.5 326.2v2M2050.5 324.7v2M2052.5 325.1v2M2053.5 322.6v2M2054.5 324.7v1M2055.5 324.7v1M2063.5 324.8v2M2067.5 326.3v2M2072.5 325.6v2M2082.5 325.3v2M2084.5 324.8v2M2089.5 322.7v2M2094.5 323.6v2M2095.5 324.8v2M2098.5 326.8v2M2099.5 325.4v2M2102.5 323.0v2M2104.5 325.2v1M2106.5 325.6v1M2108.5 323.6v1M2113.5 322.9v2M2124.5 324.4v1M2128.5 324.1v1M2139.5 323.2v2M2145.5 323.0v2M2146.5 324.1v1M2148.5 323.4v1M2154.5 323.7v2M2157.5 325.0v1M2161.5 326.0v1M2171.5 325.2v2M2172.5 324.6v2M2179.5 322.4v2M2181.5 323.9v2M2188.5 325.7v1M2192.5 324.3v2M2194.5 324.5v2M2196.5 323.2v2M2198.5 323.1v2M2200.5 323.0v1M2205.5 322.8v1M2209.5 324.3v2" stroke="#2a0008" stroke-width="1.1"/>
<ellipse cx="168" cy="418" rx="2.6" ry="2" fill="#d80000"/><rect x="167" y="417" width="2" height="2" fill="#3a0000"/><ellipse cx="176" cy="415" rx="2.6" ry="2" fill="#d80000"/><rect x="175" y="414" width="2" height="2" fill="#3a0000"/><ellipse cx="213" cy="408" rx="2.6" ry="2" fill="#d80000"/><rect x="212" y="407" width="2" height="2" fill="#3a0000"/><ellipse cx="215" cy="405" rx="2.6" ry="2" fill="#d80000"/><rect x="214" y="404" width="2" height="2" fill="#3a0000"/><ellipse cx="240" cy="416" rx="2.6" ry="2" fill="#d80000"/><rect x="239" y="415" width="2" height="2" fill="#3a0000"/><ellipse cx="275" cy="412" rx="2.6" ry="2" fill="#d80000"/><rect x="274" y="411" width="2" height="2" fill="#3a0000"/><ellipse cx="313" cy="418" rx="2.6" ry="2" fill="#d80000"/><rect x="312" y="417" width="2" height="2" fill="#3a0000"/><ellipse cx="335" cy="426" rx="2.6" ry="2" fill="#d80000"/><rect x="334" y="425" width="2" height="2" fill="#3a0000"/><ellipse cx="350" cy="412" rx="2.6" ry="2" fill="#d80000"/><rect x="349" y="411" width="2" height="2" fill="#3a0000"/><ellipse cx="365" cy="416" rx="2.6" ry="2" fill="#d80000"/><rect x="364" y="415" width="2" height="2" fill="#3a0000"/><ellipse cx="380" cy="420" rx="2.6" ry="2" fill="#d80000"/><rect x="379" y="419" width="2" height="2" fill="#3a0000"/><ellipse cx="410" cy="418" rx="2.6" ry="2" fill="#d80000"/><rect x="409" y="417" width="2" height="2" fill="#3a0000"/><ellipse cx="413" cy="415" rx="2.6" ry="2" fill="#d80000"/><rect x="412" y="414" width="2" height="2" fill="#3a0000"/><ellipse cx="478" cy="437" rx="2.6" ry="2" fill="#d80000"/><rect x="477" y="436" width="2" height="2" fill="#3a0000"/><ellipse cx="484" cy="425" rx="2.6" ry="2" fill="#d80000"/><rect x="483" y="424" width="2" height="2" fill="#3a0000"/><ellipse cx="490" cy="440" rx="2.6" ry="2" fill="#d80000"/><rect x="489" y="439" width="2" height="2" fill="#3a0000"/><ellipse cx="655" cy="418" rx="2.6" ry="2" fill="#d80000"/><rect x="654" y="417" width="2" height="2" fill="#3a0000"/><ellipse cx="662" cy="420" rx="2.6" ry="2" fill="#d80000"/><rect x="661" y="419" width="2" height="2" fill="#3a0000"/><ellipse cx="712" cy="440" rx="2.6" ry="2" fill="#d80000"/><rect x="711" y="439" width="2" height="2" fill="#3a0000"/><ellipse cx="740" cy="392" rx="2.6" ry="2" fill="#d80000"/><rect x="739" y="391" width="2" height="2" fill="#3a0000"/><ellipse cx="808" cy="433" rx="2.6" ry="2" fill="#d80000"/><rect x="807" y="432" width="2" height="2" fill="#3a0000"/><ellipse cx="900" cy="414" rx="2.6" ry="2" fill="#d80000"/><rect x="899" y="413" width="2" height="2" fill="#3a0000"/><ellipse cx="1005" cy="373" rx="2.6" ry="2" fill="#d80000"/><rect x="1004" y="372" width="2" height="2" fill="#3a0000"/><ellipse cx="1030" cy="415" rx="2.6" ry="2" fill="#d80000"/><rect x="1029" y="414" width="2" height="2" fill="#3a0000"/><ellipse cx="1035" cy="413" rx="2.6" ry="2" fill="#d80000"/><rect x="1034" y="412" width="2" height="2" fill="#3a0000"/><ellipse cx="1040" cy="337" rx="2.6" ry="2" fill="#d80000"/><rect x="1039" y="336" width="2" height="2" fill="#3a0000"/><ellipse cx="1067" cy="375" rx="2.6" ry="2" fill="#d80000"/><rect x="1066" y="374" width="2" height="2" fill="#3a0000"/><ellipse cx="1072" cy="388" rx="2.6" ry="2" fill="#d80000"/><rect x="1071" y="387" width="2" height="2" fill="#3a0000"/><ellipse cx="1080" cy="430" rx="2.6" ry="2" fill="#d80000"/><rect x="1079" y="429" width="2" height="2" fill="#3a0000"/><ellipse cx="1276" cy="421" rx="2.6" ry="2" fill="#d80000"/><rect x="1275" y="420" width="2" height="2" fill="#3a0000"/><ellipse cx="1385" cy="435" rx="2.6" ry="2" fill="#d80000"/><rect x="1384" y="434" width="2" height="2" fill="#3a0000"/><ellipse cx="1437" cy="415" rx="2.6" ry="2" fill="#d80000"/><rect x="1436" y="414" width="2" height="2" fill="#3a0000"/><ellipse cx="1535" cy="421" rx="2.6" ry="2" fill="#d80000"/><rect x="1534" y="420" width="2" height="2" fill="#3a0000"/><ellipse cx="1880" cy="420" rx="2.6" ry="2" fill="#d80000"/><rect x="1879" y="419" width="2" height="2" fill="#3a0000"/><ellipse cx="1857" cy="433" rx="2.6" ry="2" fill="#d80000"/><rect x="1856" y="432" width="2" height="2" fill="#3a0000"/><ellipse cx="2005" cy="380" rx="2.6" ry="2" fill="#d80000"/><rect x="2004" y="379" width="2" height="2" fill="#3a0000"/><ellipse cx="1525" cy="407" rx="2.6" ry="2" fill="#d80000"/><rect x="1524" y="406" width="2" height="2" fill="#3a0000"/><ellipse cx="1635" cy="330" rx="2.6" ry="2" fill="#d80000"/><rect x="1634" y="329" width="2" height="2" fill="#3a0000"/><ellipse cx="1640" cy="328" rx="2.6" ry="2" fill="#d80000"/><rect x="1639" y="327" width="2" height="2" fill="#3a0000"/><ellipse cx="1859" cy="441" rx="2.6" ry="2" fill="#d80000"/><rect x="1858" y="440" width="2" height="2" fill="#3a0000"/><ellipse cx="1880" cy="421" rx="2.6" ry="2" fill="#d80000"/><rect x="1879" y="420" width="2" height="2" fill="#3a0000"/><ellipse cx="2206" cy="411" rx="2.6" ry="2" fill="#d80000"/><rect x="2205" y="410" width="2" height="2" fill="#3a0000"/><circle cx="2087" cy="404" r="5" fill="#a00000"/><circle cx="2087" cy="404" r="2.5" fill="#300000"/><rect x="2086" y="437" width="2" height="12" fill="#301020"/><rect x="2082" y="545" width="2" height="9" fill="#301020"/><rect x="2086" y="542" width="2" height="11" fill="#301020"/><rect x="2132" y="545" width="2" height="9" fill="#301020"/>
<path d="M37.5 461.0v6.2M38.5 461.1v6.7M39.5 460.9v4.3M40.5 460.7v6.6M41.5 460.7v6.9M42.5 460.8v4.5M43.5 461.2v4.6M44.5 461.5v6.7M45.5 461.5v4.8M46.5 461.3v6.1M47.5 461.2v5.0M48.5 461.6v5.1M49.5 461.2v5.7M50.5 461.4v6.9M51.5 461.7v5.0M52.5 461.7v4.1M53.5 461.7v5.0M54.5 461.3v5.0M55.5 461.6v4.9M56.5 461.1v6.2M57.5 461.5v4.2M58.5 461.3v6.2M59.5 461.8v4.3M60.5 461.6v7.0M61.5 461.6v5.5M62.5 461.4v6.5M63.5 461.7v5.0M64.5 461.8v5.5M65.5 461.9v6.3M66.5 461.6v7.0M67.5 461.9v4.0M68.5 462.1v6.0M69.5 461.8v6.5M70.5 462.3v6.9M71.5 461.7v5.1M72.5 461.7v6.4M73.5 462.2v4.1M74.5 461.8v6.3M75.5 462.5v4.5M76.5 461.9v4.1M77.5 461.8v4.6M78.5 462.5v6.6M79.5 461.9v5.9M80.5 462.6v4.9M81.5 462.5v5.9M82.5 462.7v6.9M83.5 462.5v5.2M84.5 462.2v6.7M85.5 462.2v4.9M86.5 462.8v6.8M87.5 462.3v4.8M88.5 462.3v5.5M89.5 462.3v4.1M90.5 462.4v5.4M91.5 462.4v5.9M92.5 463.0v4.1M93.5 462.5v4.9M94.5 462.3v4.8M95.5 462.8v4.1M96.5 462.9v6.9M97.5 462.9v6.2M98.5 463.0v4.9M99.5 463.0v5.4M100.5 462.9v5.5M101.5 463.0v4.2M102.5 463.2v6.0M103.5 463.4v6.1M104.5 463.2v4.4M105.5 463.3v4.2M106.5 462.9v5.7M107.5 462.8v5.3M108.5 463.0v6.0M109.5 463.5v5.7M110.5 463.2v4.4M111.5 463.2v4.4M112.5 463.6v5.6M113.5 463.3v5.0M114.5 463.2v6.6M115.5 463.6v6.3M116.5 463.1v5.9M117.5 463.6v5.2M118.5 463.7v5.3M119.5 463.5v5.8M120.5 463.2v4.2M121.5 463.7v4.0M122.5 463.3v5.4M123.5 463.2v4.8M124.5 463.6v4.1M125.5 463.8v6.1M126.5 463.2v6.4M127.5 463.7v4.5M128.5 463.6v5.9M129.5 463.7v4.6M130.5 463.7v4.5M131.5 463.7v5.3M132.5 463.3v4.1M133.5 463.6v6.9M134.5 463.6v6.9M135.5 463.6v6.4M136.5 463.7v6.7M137.5 463.4v4.8M138.5 463.3v7.0M139.5 463.4v4.1M140.5 463.9v5.6M141.5 463.5v5.4M142.5 463.6v6.4M143.5 463.6v6.1M144.5 463.5v5.5M145.5 464.0v6.7M146.5 463.9v4.1M147.5 463.7v6.5M148.5 463.9v4.9M149.5 463.4v4.3M150.5 463.6v4.2M151.5 464.0v5.4M152.5 463.7v5.0M153.5 463.5v7.0M154.5 464.0v5.4M155.5 463.9v4.6M156.5 464.2v5.8M157.5 463.6v4.1M158.5 463.7v4.7M159.5 463.7v6.5M160.5 464.2v4.2M161.5 463.8v4.3M162.5 463.6v6.5M163.5 464.0v6.5M164.5 464.1v4.1M165.5 463.9v6.1M166.5 464.1v6.1M167.5 464.0v6.1M168.5 464.0v6.7M169.5 464.3v4.1M170.5 464.1v6.9M171.5 464.2v6.3M172.5 463.6v4.4M173.5 464.3v6.1M174.5 464.3v5.9M175.5 464.3v6.1M176.5 463.8v4.9M177.5 463.8v4.3M178.5 464.0v5.3M179.5 463.8v4.2M180.5 464.1v5.4M181.5 464.2v6.3M182.5 463.9v6.6M183.5 464.2v6.5M184.5 463.8v4.5M185.5 464.0v5.0M186.5 464.4v6.9M187.5 464.4v4.7M188.5 464.3v6.3M189.5 464.1v4.1M190.5 463.8v4.1M191.5 463.8v6.4M192.5 464.4v4.7M193.5 464.2v5.0M194.5 463.8v5.3M195.5 464.1v4.6M196.5 464.0v5.4M197.5 464.5v4.1M198.5 463.9v7.0M199.5 464.3v6.6M200.5 464.5v6.9M201.5 463.9v4.2M202.5 464.5v5.4M203.5 464.6v4.5M204.5 463.9v5.2M205.5 463.9v6.0M206.5 464.6v6.7M207.5 464.3v5.0M208.5 463.9v6.5M209.5 464.2v6.4M210.5 464.7v5.8M211.5 464.3v5.2M212.5 464.7v7.0M213.5 464.6v4.5M214.5 464.2v6.2M215.5 464.5v6.7M216.5 464.7v5.2M217.5 464.8v7.1M218.5 464.6v6.0M219.5 464.3v6.9M220.5 464.4v5.5M221.5 464.2v5.5M222.5 464.8v4.9M223.5 464.3v6.6M224.5 464.6v6.7M225.5 464.6v5.8M226.5 464.2v5.5M227.5 464.8v4.2M228.5 464.6v5.4M229.5 464.2v4.3M230.5 464.7v6.8M231.5 464.7v4.9M232.5 464.9v5.1M233.5 464.3v4.7M234.5 465.0v6.0M235.5 464.3v4.5M236.5 464.7v6.8M237.5 464.6v7.0M238.5 464.6v6.5M239.5 464.6v6.6M240.5 464.8v7.0M241.5 464.9v5.8M242.5 464.8v6.3M243.5 465.0v5.0M244.5 465.0v4.3M245.5 464.4v5.4M246.5 464.7v6.1M247.5 465.1v5.5M248.5 464.9v6.1M249.5 464.4v6.7M250.5 465.1v5.1M251.5 464.5v4.3M252.5 464.7v6.9M253.5 464.7v5.3M254.5 464.7v4.8M255.5 464.6v5.5M256.5 464.9v6.2M257.5 464.9v5.6M258.5 464.8v5.9M259.5 464.5v5.4M260.5 464.4v6.9M261.5 464.8v6.6M262.5 464.9v5.1M263.5 464.9v5.6M264.5 465.3v6.3M265.5 464.7v6.6M266.5 465.2v6.0M267.5 465.1v5.6M268.5 465.2v6.3M269.5 464.5v5.4M270.5 464.6v5.5M271.5 465.0v4.2M272.5 465.2v6.0M273.5 465.4v4.7M274.5 464.7v5.3M275.5 464.9v6.4M276.5 464.8v5.3M277.5 464.8v5.7M278.5 465.3v6.9M279.5 465.4v5.8M280.5 465.2v4.7M281.5 465.0v4.4M282.5 465.2v4.7M283.5 465.3v6.2M284.5 465.4v5.6M285.5 465.0v6.8M286.5 465.4v5.9M287.5 465.2v7.1M288.5 465.3v5.6M289.5 465.1v5.1M290.5 465.0v6.2M291.5 465.4v6.7M292.5 464.9v5.0M293.5 464.8v6.1M294.5 465.3v4.3M295.5 464.9v5.2M296.5 464.9v6.7M297.5 465.6v5.9M298.5 465.2v4.4M299.5 465.0v6.3M300.5 465.6v5.0M301.5 464.9v4.2M302.5 464.9v4.4M303.5 465.1v5.4M304.5 465.7v5.8M305.5 465.6v4.7M306.5 465.0v5.4M307.5 465.7v5.3M308.5 465.0v6.4M309.5 465.1v7.1M310.5 465.3v6.0M311.5 465.1v4.7M312.5 465.5v4.2M313.5 465.1v6.9M314.5 465.0v4.8M315.5 465.2v5.5M316.5 465.1v6.2M317.5 465.6v6.8M318.5 465.2v4.6M319.5 465.1v7.0M320.5 465.3v4.8M321.5 465.1v4.2M322.5 465.2v4.9M323.5 465.5v5.9M324.5 465.1v4.8M325.5 465.2v6.2M326.5 464.9v4.9M327.5 465.0v6.9M328.5 465.5v5.9M329.5 465.3v4.4M330.5 465.3v6.2M331.5 465.2v6.7M332.5 465.0v6.7M333.5 465.0v4.7M334.5 465.2v6.7M335.5 464.9v4.6M336.5 465.2v4.2M337.5 465.0v6.6M338.5 464.8v6.1M339.5 464.7v7.1M340.5 464.9v6.2M341.5 465.2v4.6M342.5 465.2v6.1M343.5 465.0v6.7M344.5 465.0v6.0M345.5 464.6v6.5M346.5 464.5v6.2M347.5 464.6v4.5M348.5 464.9v4.7M349.5 465.1v7.1M350.5 465.2v5.1M351.5 464.6v5.8M352.5 465.0v5.9M353.5 464.7v4.9M354.5 464.7v6.5M355.5 464.6v5.0M356.5 464.4v6.2M357.5 464.8v6.8M358.5 464.7v4.5M359.5 464.7v4.4M360.5 464.6v7.0M361.5 464.7v5.1M362.5 464.5v6.5M363.5 464.7v6.2M364.5 464.4v6.3M365.5 464.3v6.2M366.5 465.0v4.9M367.5 464.3v4.4M368.5 464.4v6.3M369.5 464.7v4.3M370.5 464.8v5.5M371.5 464.9v5.5M372.5 464.9v5.1M373.5 464.2v5.0M374.5 464.1v5.2M375.5 464.4v5.4M376.5 464.8v6.0M377.5 464.8v5.4M378.5 464.1v7.2M379.5 464.8v5.2M380.5 464.3v5.1M381.5 464.3v4.4M382.5 464.4v5.6M383.5 464.7v6.0M384.5 464.4v6.3M385.5 464.6v6.8M386.5 464.6v4.5M387.5 464.7v5.1M388.5 464.5v4.6M389.5 464.1v5.0M390.5 464.3v5.9M391.5 464.5v4.4M392.5 464.3v6.7M393.5 464.2v5.6M394.5 464.3v5.9M395.5 463.9v5.0M396.5 464.4v5.3M397.5 464.0v4.2M398.5 464.5v4.9M399.5 464.1v4.5M400.5 464.5v6.0M401.5 464.0v5.0M402.5 464.0v7.1M403.5 464.1v6.6M404.5 464.4v7.1M405.5 464.2v6.3M406.5 463.7v5.2M407.5 463.7v5.0M408.5 463.7v6.7M409.5 464.3v5.5M410.5 464.1v4.8M411.5 463.8v6.4M412.5 463.7v6.0M413.5 463.6v4.8M414.5 464.1v6.5M415.5 463.6v6.6M416.5 464.1v4.5M417.5 463.7v5.6M418.5 463.5v6.5M419.5 463.9v4.9M420.5 463.5v6.0M421.5 463.6v6.0M422.5 463.5v6.9M423.5 463.9v5.0M424.5 463.9v4.7M425.5 464.0v4.4M426.5 463.8v7.2M427.5 464.0v7.1M428.5 463.3v5.5M429.5 463.8v6.8M430.5 463.7v5.0M431.5 463.4v6.2M432.5 463.5v5.9M433.5 463.7v5.2M434.5 463.8v5.4M435.5 463.4v6.2M436.5 464.0v7.0M437.5 463.5v5.3M438.5 463.4v7.1M439.5 463.9v5.9M440.5 463.7v5.0M441.5 463.5v6.6M442.5 463.7v4.9M443.5 463.6v5.0M444.5 463.6v6.1M445.5 463.1v6.8M446.5 463.4v4.8M447.5 463.3v4.9M448.5 463.3v6.1M449.5 463.4v5.9M450.5 463.1v6.9M451.5 463.5v7.1M452.5 463.4v4.2M453.5 463.7v6.1M454.5 463.5v4.2M455.5 463.0v4.5M456.5 463.4v4.4M457.5 463.4v5.5M458.5 462.9v4.6M459.5 463.6v4.7M460.5 463.2v4.9M461.5 463.2v5.4M462.5 462.8v6.7M463.5 462.8v6.1M464.5 463.0v6.6M465.5 463.0v6.8M466.5 463.5v5.2M467.5 462.8v5.0M468.5 462.9v4.4M469.5 463.4v6.8M470.5 463.0v4.9M471.5 462.9v5.1M472.5 463.2v6.2M473.5 463.0v5.5M474.5 462.8v6.5M475.5 463.2v6.5M476.5 462.9v6.8M477.5 462.6v4.3M478.5 462.9v6.2M479.5 463.3v6.6M480.5 463.1v6.5M481.5 463.2v7.0M482.5 462.6v7.0M483.5 462.7v4.8M484.5 463.1v5.7M485.5 463.2v6.5M486.5 462.6v5.2M487.5 462.4v6.1M488.5 462.8v5.6M489.5 463.0v6.4M490.5 462.5v6.5M491.5 462.7v4.3M492.5 462.6v6.0M493.5 463.0v5.9M494.5 462.5v6.4M495.5 462.8v5.9M496.5 462.6v5.4M497.5 462.4v6.7M498.5 462.7v6.0M499.5 462.5v6.4M500.5 463.0v7.0M501.5 462.4v4.8M502.5 462.5v5.0M503.5 462.6v4.4M504.5 462.9v5.3M505.5 462.3v5.5M506.5 462.3v5.6M507.5 462.7v5.8M508.5 462.3v6.2M509.5 462.2v6.1M510.5 462.4v5.6M511.5 462.7v6.3M512.5 462.6v5.3M513.5 462.6v5.3M514.5 462.6v6.7M515.5 462.8v4.8M516.5 462.5v5.2M517.5 462.2v4.9M518.5 462.0v6.3M519.5 462.2v4.4M520.5 462.6v6.7M521.5 462.6v6.8M522.5 462.4v4.8M523.5 462.5v6.8M524.5 462.3v5.3M525.5 462.3v4.5M526.5 462.5v4.8M527.5 462.7v5.6M528.5 462.4v6.8M529.5 462.3v6.7M530.5 462.2v5.8M531.5 462.3v6.9M532.5 462.3v4.6M533.5 462.5v6.9M534.5 461.9v5.9M535.5 462.6v6.4M536.5 462.1v5.9M537.5 462.3v4.5M538.5 462.1v5.4M539.5 462.0v4.5M540.5 462.1v6.6M541.5 461.8v6.9M542.5 462.2v5.5M543.5 462.0v4.5M544.5 461.8v5.3M545.5 461.9v4.5M546.5 462.4v4.4M547.5 461.8v5.7M548.5 462.5v5.9M549.5 461.9v7.0M550.5 461.9v5.7M551.5 462.0v5.7M552.5 461.9v4.4M553.5 462.2v5.8M554.5 461.9v4.6M555.5 462.5v6.9M556.5 462.0v5.8M557.5 462.4v6.7M558.5 462.2v6.5M559.5 462.2v4.9M560.5 462.2v6.9M561.5 462.1v5.5M562.5 462.3v5.0M563.5 462.1v6.7M564.5 462.1v6.0M565.5 462.3v4.6M566.5 462.0v6.0M567.5 462.3v4.9M568.5 462.3v4.4M569.5 461.6v6.3M570.5 462.0v6.4M571.5 461.8v4.3M572.5 461.8v4.4M573.5 462.3v7.1M574.5 461.7v5.9M575.5 461.9v5.3M576.5 461.7v5.7M577.5 462.0v4.4M578.5 462.3v5.7M579.5 461.5v5.6M580.5 462.1v6.5M581.5 462.1v5.8M582.5 462.1v5.8M583.5 461.9v4.7M584.5 461.5v6.6M585.5 461.9v6.0M586.5 461.9v6.7M587.5 461.8v6.4M588.5 462.1v5.6M589.5 462.2v4.8M590.5 461.5v5.9M591.5 462.0v5.4M592.5 461.5v6.3M593.5 461.8v6.7M594.5 461.7v6.5M595.5 461.6v5.9M596.5 462.0v5.7M597.5 461.5v7.0M598.5 461.6v4.7M599.5 461.9v5.8M600.5 461.7v6.0M601.5 462.1v6.9M602.5 461.9v6.2M603.5 461.6v5.6M604.5 461.8v7.2M605.5 461.7v5.8M606.5 461.5v5.3M607.5 461.7v6.6M608.5 462.0v7.3M609.5 461.9v4.7M610.5 461.7v6.7M611.5 461.4v5.8M612.5 461.3v6.8M613.5 461.5v4.5M614.5 461.4v6.1M615.5 462.0v4.4M616.5 461.5v6.8M617.5 462.0v6.9M618.5 462.0v7.1M619.5 461.6v6.8M620.5 461.6v6.6M621.5 461.5v6.1M622.5 461.8v6.3M623.5 461.6v4.9M624.5 461.4v6.4M625.5 461.6v7.2M626.5 461.4v5.6M627.5 461.2v6.7M628.5 461.4v4.6M629.5 461.6v5.2M630.5 461.2v5.7M631.5 461.6v4.5M632.5 461.8v4.6M633.5 461.6v6.0M634.5 461.9v4.7M635.5 461.8v4.3M636.5 461.8v7.3M637.5 461.4v5.0M638.5 461.3v5.3M639.5 461.1v5.4M640.5 461.8v6.9M641.5 461.8v5.1M642.5 461.2v4.7M643.5 461.1v5.6M644.5 461.8v6.8M645.5 461.2v5.4M646.5 461.6v7.1M647.5 461.5v4.8M648.5 461.3v6.6M649.5 461.5v4.5M650.5 461.2v5.5M651.5 461.6v4.7M652.5 461.5v6.2M653.5 461.7v7.1M654.5 461.0v6.2M655.5 461.1v5.3M656.5 461.3v7.2M657.5 461.1v5.1M658.5 461.3v6.0M659.5 461.3v4.4M660.5 461.3v5.9M661.5 461.2v5.0M662.5 461.5v5.0M663.5 461.1v4.6M664.5 461.3v4.4M665.5 461.1v6.1M666.5 461.1v6.7M667.5 461.4v5.1M668.5 461.5v7.1M669.5 461.3v7.0M670.5 461.0v6.8M671.5 461.3v5.3M672.5 461.0v6.9M673.5 460.9v4.8M674.5 461.4v6.0M675.5 461.3v4.8M676.5 461.4v5.9M677.5 460.8v6.3M678.5 461.5v6.0M679.5 460.8v5.2M680.5 461.3v6.5M681.5 461.3v7.0M682.5 461.3v6.4M683.5 461.4v5.4M684.5 460.9v4.6M685.5 461.4v7.3M686.5 461.2v5.0M687.5 461.3v6.7M688.5 461.2v6.7M689.5 461.3v4.5M690.5 460.9v5.6M691.5 461.0v5.0M692.5 460.8v6.6M693.5 461.5v6.4M694.5 461.0v5.3M695.5 460.7v6.1M696.5 460.7v6.0M697.5 461.2v5.2M698.5 461.3v7.0M699.5 461.1v4.4M700.5 461.4v6.1M701.5 460.9v7.0M702.5 461.1v6.9M703.5 461.1v5.5M704.5 461.2v4.5M705.5 461.1v4.4M706.5 461.1v5.1M707.5 461.3v5.6M708.5 460.7v6.9M709.5 461.2v4.6M710.5 461.3v4.7M711.5 460.7v6.5M712.5 460.9v7.0M713.5 460.7v6.5M714.5 460.6v6.1M715.5 460.8v4.6M716.5 461.1v5.1M717.5 461.2v5.9M718.5 460.6v4.6M719.5 460.7v4.9M720.5 461.2v5.3M721.5 461.2v6.0M722.5 460.5v6.6M723.5 460.8v6.2M724.5 460.8v4.9M725.5 461.0v7.2M726.5 461.0v6.4M727.5 461.1v5.1M728.5 461.0v6.2M729.5 461.4v6.0M730.5 460.7v5.2M731.5 460.7v7.3M732.5 461.0v7.1M733.5 461.0v5.0M734.5 460.8v6.8M735.5 460.8v7.1M736.5 460.9v5.0M737.5 461.2v5.8M738.5 460.9v6.1M739.5 460.9v4.8M740.5 461.0v6.8M741.5 460.7v6.7M742.5 461.0v5.7M743.5 461.5v6.6M744.5 461.3v6.5M745.5 461.4v5.9M746.5 461.3v5.4M747.5 461.4v5.9M748.5 461.3v7.1M749.5 460.8v4.9M750.5 460.9v7.0M751.5 460.9v4.9M752.5 461.0v6.9M753.5 461.1v5.1M754.5 461.5v6.5M755.5 461.4v5.5M756.5 461.6v5.4M757.5 461.4v7.3M758.5 461.4v5.6M759.5 461.6v4.5M760.5 461.3v7.1M761.5 461.3v6.0M762.5 461.2v6.2M763.5 461.4v5.8M764.5 461.0v4.9M765.5 461.3v4.6M766.5 461.4v7.3M767.5 461.6v5.9M768.5 461.6v6.4M769.5 461.6v6.8M770.5 461.1v6.2M771.5 461.1v5.7M772.5 460.9v6.3M773.5 461.1v5.2M774.5 461.3v4.7M775.5 461.3v7.1M776.5 461.6v4.9M777.5 461.3v5.1M778.5 461.4v4.8M779.5 461.3v6.6M780.5 461.8v6.3M781.5 461.1v7.2M782.5 461.5v5.8M783.5 461.6v6.2M784.5 461.6v5.6M785.5 461.1v6.9M786.5 461.7v6.5M787.5 461.3v4.5M788.5 461.5v5.5M789.5 461.7v6.8M790.5 461.8v5.3M791.5 461.1v6.5M792.5 461.5v5.0M793.5 461.7v5.9M794.5 461.5v5.8M795.5 461.7v5.1M796.5 461.6v5.5M797.5 461.2v6.6M798.5 461.5v4.5M799.5 461.3v5.5M800.5 461.5v5.3M801.5 461.5v7.0M802.5 461.2v4.9M803.5 461.2v6.6M804.5 461.8v5.0M805.5 461.6v4.6M806.5 461.5v5.1M807.5 461.8v4.7M808.5 461.2v4.4M809.5 461.6v6.4M810.5 461.8v4.6M811.5 462.0v4.5M812.5 461.7v7.2M813.5 461.4v5.0M814.5 461.5v7.1M815.5 461.5v5.1M816.5 461.4v5.1M817.5 461.5v5.7M818.5 461.6v4.5M819.5 461.4v6.5M820.5 461.3v6.9M821.5 461.9v4.4M822.5 461.6v4.8M823.5 461.9v5.8M824.5 461.6v4.8M825.5 461.4v6.3M826.5 461.7v5.6M827.5 461.9v6.6M828.5 461.9v7.3M829.5 461.6v5.3M830.5 461.4v7.1M831.5 461.5v6.1M832.5 461.5v7.0M833.5 461.6v7.3M834.5 462.2v6.5M835.5 461.7v6.1M836.5 462.1v5.0M837.5 461.6v4.4M838.5 461.9v5.7M839.5 461.6v7.1M840.5 462.0v5.1M841.5 462.0v5.9M842.5 461.9v5.2M843.5 461.9v7.3M844.5 461.7v7.0M845.5 461.7v5.4M846.5 462.1v4.8M847.5 461.6v4.6M848.5 462.1v6.2M849.5 461.6v5.2M850.5 462.0v5.2M851.5 462.0v7.1M852.5 461.6v6.7M853.5 462.0v5.2M854.5 462.3v6.3M855.5 461.7v7.4M856.5 461.8v4.7M857.5 462.3v5.1M858.5 461.6v7.3M859.5 461.7v6.3M860.5 461.9v6.2M861.5 461.7v6.5M862.5 462.3v6.2M863.5 462.2v4.7M864.5 462.2v6.6M865.5 462.3v6.4M866.5 462.1v6.5M867.5 462.0v5.5M868.5 461.8v6.2M869.5 462.0v5.4M870.5 462.3v7.1M871.5 462.3v7.1M872.5 461.8v5.8M873.5 462.1v5.6M874.5 461.9v4.7M875.5 462.2v6.8M876.5 462.3v6.6M877.5 462.2v5.9M878.5 461.7v7.1M879.5 462.1v7.0M880.5 462.4v7.4M881.5 462.2v5.9M882.5 461.8v6.8M883.5 462.3v5.4M884.5 462.3v4.9M885.5 462.2v7.3M886.5 462.4v5.7M887.5 461.9v5.0M888.5 462.1v6.2M889.5 462.5v4.5M890.5 462.6v6.0M891.5 462.6v6.3M892.5 462.1v5.2M893.5 461.9v7.4M894.5 462.0v4.9M895.5 462.6v4.9M896.5 462.3v6.8M897.5 462.6v5.9M898.5 462.0v6.3M899.5 462.3v4.8M900.5 462.2v5.3M901.5 462.0v5.7M902.5 462.2v5.7M903.5 462.2v5.0M904.5 462.5v6.2M905.5 462.0v4.8M906.5 462.2v6.4M907.5 461.9v4.6M908.5 462.2v7.3M909.5 462.5v5.1M910.5 462.5v7.3M911.5 462.6v5.5M912.5 462.0v4.5M913.5 462.3v6.2M914.5 462.0v6.3M915.5 462.1v4.6M916.5 462.3v6.3M917.5 462.3v5.3M918.5 462.3v4.6M919.5 462.0v5.0M920.5 462.1v5.4M921.5 462.2v5.8M922.5 462.5v5.7M923.5 462.2v6.0M924.5 462.8v6.2M925.5 462.3v4.8M926.5 462.5v6.3M927.5 462.8v6.5M928.5 462.2v6.0M929.5 462.3v5.9M930.5 462.3v4.6M931.5 462.5v5.9M932.5 462.2v6.4M933.5 462.3v6.1M934.5 462.9v5.1M935.5 462.7v5.7M936.5 462.6v5.7M937.5 462.4v5.0M938.5 462.6v7.1M939.5 462.4v6.3M940.5 462.3v5.1M941.5 462.6v6.4M942.5 462.8v6.0M943.5 462.7v5.1M944.5 462.9v7.2M945.5 462.9v6.6M946.5 462.5v6.3M947.5 463.0v6.5M948.5 462.3v6.2M949.5 462.5v6.3M950.5 463.0v5.8M951.5 462.7v7.0M952.5 463.0v5.9M953.5 462.8v6.9M954.5 462.5v6.4M955.5 462.6v7.0M956.5 463.1v4.8M957.5 462.5v6.1M958.5 463.1v6.5M959.5 462.8v6.3M960.5 462.6v4.8M961.5 462.9v6.3M962.5 463.2v5.9M963.5 463.0v4.7M964.5 462.7v7.1M965.5 462.5v5.2M966.5 462.5v4.5M967.5 462.8v5.0M968.5 463.0v5.2M969.5 463.1v6.3M970.5 463.0v6.9M971.5 463.3v7.0M972.5 463.2v7.2M973.5 462.6v7.1M974.5 463.2v4.8M975.5 462.7v5.4M976.5 462.9v7.1M977.5 462.8v6.1M978.5 463.0v5.8M979.5 462.9v7.0M980.5 463.3v6.7M981.5 463.3v7.3M982.5 462.7v5.0M983.5 462.9v6.3M984.5 463.1v6.4M985.5 463.2v7.1M986.5 463.3v5.4M987.5 463.3v5.5M988.5 463.2v6.6M989.5 463.4v6.3M990.5 462.7v5.8M991.5 462.8v4.9M992.5 463.4v7.1M993.5 463.4v7.1M994.5 463.4v7.4M995.5 462.9v7.4M996.5 463.5v6.9M997.5 463.5v6.8M998.5 463.4v6.0M999.5 463.1v4.8M1000.5 463.0v5.6M1001.5 462.9v4.8M1002.5 463.2v7.3M1003.5 463.2v5.8M1004.5 462.9v4.6M1005.5 463.2v5.5M1006.5 463.1v6.5M1007.5 463.5v5.5M1008.5 463.1v4.6M1009.5 463.6v5.1M1010.5 463.0v5.8M1011.5 462.9v5.7M1012.5 463.6v4.9M1013.5 463.5v6.7M1014.5 463.5v5.3M1015.5 463.6v5.2M1016.5 463.0v5.4M1017.5 463.1v6.6M1018.5 463.2v6.4M1019.5 463.7v5.4M1020.5 463.4v5.6M1021.5 463.5v4.7M1022.5 463.5v5.5M1023.5 463.6v5.6M1024.5 463.4v6.1M1025.5 463.5v7.1M1026.5 463.4v7.3M1027.5 463.4v5.5M1028.5 463.1v6.2M1029.5 463.4v5.3M1030.5 463.5v6.1M1031.5 463.6v5.4M1032.5 463.5v6.0M1033.5 463.5v5.4M1034.5 463.8v7.4M1035.5 463.3v6.1M1036.5 463.8v4.6M1037.5 463.3v7.1M1038.5 463.5v4.9M1039.5 463.9v5.6M1040.5 463.7v7.5M1041.5 463.6v6.4M1042.5 463.6v7.4M1043.5 463.9v7.2M1044.5 463.6v5.1M1045.5 463.7v6.5M1046.5 463.3v6.8M1047.5 464.0v4.9M1048.5 463.7v5.3M1049.5 463.6v7.3M1050.5 463.9v7.3M1051.5 463.6v6.2M1052.5 463.6v7.4M1053.5 464.1v6.6M1054.5 464.1v6.4M1055.5 463.7v7.2M1056.5 463.7v5.0M1057.5 463.9v5.1M1058.5 463.7v4.8M1059.5 463.5v4.9M1060.5 463.4v6.7M1061.5 463.6v4.8M1062.5 463.7v6.0M1063.5 463.7v5.3M1064.5 463.8v5.7M1065.5 463.8v6.4M1066.5 463.9v5.8M1067.5 463.5v7.7M1068.5 463.9v8.6M1069.5 464.2v6.0M1070.5 463.8v8.5M1071.5 463.8v9.0M1072.5 463.7v6.7M1073.5 463.7v6.0M1074.5 463.8v7.9M1075.5 463.8v7.7M1076.5 464.1v7.5M1077.5 464.1v7.5M1078.5 464.0v7.9M1079.5 464.2v6.6M1080.5 464.3v6.5M1081.5 464.1v6.4M1082.5 464.0v7.4M1083.5 464.6v7.9M1084.5 464.6v8.4M1085.5 464.2v7.5M1086.5 464.6v8.6M1087.5 464.3v6.5M1088.5 464.8v7.0M1089.5 464.5v7.4M1090.5 464.4v7.3M1091.5 464.4v8.4M1092.5 464.6v7.9M1093.5 464.5v6.9M1094.5 464.3v6.6M1095.5 464.3v7.5M1096.5 464.5v8.1M1097.5 464.6v7.6M1098.5 465.0v8.0M1099.5 464.6v7.0M1100.5 464.6v7.4M1101.5 464.5v8.2M1102.5 464.8v8.7M1103.5 464.9v7.3M1104.5 465.1v7.0M1105.5 465.0v6.1M1106.5 465.1v7.7M1107.5 464.7v7.6M1108.5 464.9v6.2M1109.5 465.2v6.6M1110.5 465.2v7.3M1111.5 465.1v6.7M1112.5 465.5v7.6M1113.5 464.8v8.6M1114.5 465.3v7.3M1115.5 465.2v6.5M1116.5 465.4v8.7M1117.5 465.0v8.2M1118.5 465.1v7.5M1119.5 465.1v8.3M1120.5 465.2v8.1M1121.5 465.7v8.2M1122.5 465.6v7.7M1123.5 465.4v8.9M1124.5 465.2v8.6M1125.5 465.2v6.5M1126.5 465.3v8.4M1127.5 465.7v7.5M1128.5 465.1v6.7M1129.5 465.4v8.9M1130.5 465.2v6.8M1131.5 465.5v6.8M1132.5 465.7v6.9M1133.5 465.6v7.9M1134.5 465.2v6.7M1135.5 465.0v6.4M1136.5 465.1v8.1M1137.5 465.5v7.9M1138.5 465.1v8.2M1139.5 465.2v8.2M1140.5 464.9v6.9M1141.5 465.0v8.8M1142.5 465.5v6.9M1143.5 465.2v8.3M1144.5 465.4v6.4M1145.5 465.0v8.9M1146.5 464.9v6.3M1147.5 464.9v8.1M1148.5 464.9v8.7M1149.5 464.9v7.4M1150.5 465.4v6.8M1151.5 464.9v6.9M1152.5 465.1v8.7M1153.5 465.2v7.5M1154.5 465.4v6.7M1155.5 465.5v6.9M1156.5 465.4v7.4M1157.5 464.8v8.9M1158.5 465.2v6.1M1159.5 465.3v6.9M1160.5 465.4v6.3M1161.5 465.2v6.7M1162.5 465.4v7.1M1163.5 464.8v7.7M1164.5 464.8v6.9M1165.5 465.1v8.0M1166.5 464.7v6.5M1167.5 464.7v6.2M1168.5 465.4v8.9M1169.5 464.7v7.0M1170.5 465.1v7.5M1171.5 465.1v7.3M1172.5 465.2v8.0M1173.5 464.6v7.1M1174.5 464.9v7.3M1175.5 464.6v8.9M1176.5 464.8v7.4M1177.5 465.0v8.4M1178.5 465.2v7.3M1179.5 464.9v9.0M1180.5 464.9v6.1M1181.5 465.2v8.6M1182.5 464.6v8.9M1183.5 465.2v6.3M1184.5 465.3v7.1M1185.5 464.7v8.6M1186.5 464.5v8.5M1187.5 464.7v6.9M1188.5 465.1v8.5M1189.5 465.0v7.6M1190.5 464.5v7.6M1191.5 465.1v8.1M1192.5 464.6v9.0M1193.5 464.5v7.7M1194.5 464.8v8.1M1195.5 464.6v6.6M1196.5 464.5v8.8M1197.5 465.2v6.4M1198.5 464.8v7.7M1199.5 464.8v8.7M1200.5 464.7v7.5M1201.5 464.5v7.8M1202.5 464.9v8.8M1203.5 464.7v8.2M1204.5 464.5v7.8M1205.5 464.5v6.8M1206.5 465.1v7.8M1207.5 464.7v7.4M1208.5 464.9v6.9M1209.5 464.8v7.0M1210.5 464.4v7.2M1211.5 464.4v7.7M1212.5 464.7v7.4M1213.5 465.0v6.4M1214.5 464.9v8.0M1215.5 464.8v8.8M1216.5 464.5v6.7M1217.5 464.9v8.6M1218.5 464.7v7.1M1219.5 464.7v6.6M1220.5 465.0v8.3M1221.5 464.4v8.6M1222.5 464.3v6.9M1223.5 464.8v7.4M1224.5 464.3v8.9M1225.5 464.7v6.5M1226.5 464.9v6.5M1227.5 464.6v7.9M1228.5 464.2v8.6M1229.5 464.4v6.6M1230.5 464.8v7.6M1231.5 464.6v7.5M1232.5 464.3v7.6M1233.5 464.7v8.8M1234.5 464.6v6.0M1235.5 464.6v6.8M1236.5 464.8v8.1M1237.5 464.7v7.3M1238.5 464.5v6.6M1239.5 464.4v7.4M1240.5 464.5v6.1M1241.5 464.4v8.5M1242.5 464.6v8.9M1243.5 464.9v6.2M1244.5 464.4v9.0M1245.5 464.6v6.1M1246.5 464.5v6.8M1247.5 464.4v7.1M1248.5 464.8v6.2M1249.5 464.7v7.8M1250.5 464.3v8.2M1251.5 464.1v6.5M1252.5 464.5v7.9M1253.5 464.5v8.7M1254.5 464.5v6.3M1255.5 464.7v8.6M1256.5 464.1v7.6M1257.5 464.2v8.4M1258.5 464.7v7.4M1259.5 464.6v8.4M1260.5 464.3v8.0M1261.5 464.2v8.7M1262.5 464.5v7.4M1263.5 464.3v8.0M1264.5 464.0v8.6M1265.5 464.5v6.2M1266.5 464.4v8.5M1267.5 464.6v6.4M1268.5 464.1v8.7M1269.5 464.3v8.3M1270.5 464.3v8.0M1271.5 463.9v7.4M1272.5 464.2v7.1M1273.5 463.9v7.5M1274.5 464.7v8.5M1275.5 463.9v8.2M1276.5 463.9v8.4M1277.5 464.4v6.7M1278.5 464.6v7.1M1279.5 464.1v7.2M1280.5 464.3v8.6M1281.5 464.4v7.7M1282.5 464.4v7.1M1283.5 463.8v6.2M1284.5 463.8v6.9M1285.5 464.2v7.9M1286.5 464.3v8.5M1287.5 464.1v6.8M1288.5 464.4v7.8M1289.5 464.1v6.9M1290.5 464.1v8.8M1291.5 464.1v7.5M1292.5 464.2v6.6M1293.5 464.4v6.7M1294.5 463.8v8.5M1295.5 464.0v8.0M1296.5 464.5v6.5M1297.5 464.2v6.9M1298.5 464.2v8.2M1299.5 464.0v7.2M1300.5 464.4v8.8M1301.5 464.1v6.9M1302.5 464.0v7.1M1303.5 464.1v6.4M1304.5 464.2v8.9M1305.5 463.7v6.5M1306.5 464.1v7.2M1307.5 463.8v6.9M1308.5 464.4v8.6M1309.5 463.8v7.3M1310.5 464.1v7.7M1311.5 463.8v8.5M1312.5 463.9v7.4M1313.5 464.3v6.6M1314.5 464.3v7.9M1315.5 464.1v8.5M1316.5 464.0v8.2M1317.5 463.9v8.6M1318.5 463.6v8.9M1319.5 464.1v7.3M1320.5 464.2v6.5M1321.5 463.9v6.6M1322.5 463.9v6.9M1323.5 463.6v6.8M1324.5 464.2v8.1M1325.5 464.2v7.2M1326.5 464.0v6.2M1327.5 464.0v7.9M1328.5 463.9v7.1M1329.5 464.1v6.2M1330.5 463.7v9.0M1331.5 463.8v9.0M1332.5 464.2v6.4M1333.5 463.9v7.2M1334.5 463.8v8.3M1335.5 464.2v6.5M1336.5 464.2v6.7M1337.5 463.7v7.6M1338.5 464.2v7.5M1339.5 463.7v7.3M1340.5 464.0v6.9M1341.5 463.5v8.1M1342.5 464.1v6.1M1343.5 464.2v6.6M1344.5 464.1v7.9M1345.5 464.0v7.7M1346.5 463.9v8.7M1347.5 463.7v8.1M1348.5 464.1v7.4M1349.5 463.7v8.2M1350.5 464.1v7.7M1351.5 463.8v8.9M1352.5 464.2v6.5M1353.5 463.5v6.8M1354.5 463.6v7.6M1355.5 463.5v8.3M1356.5 463.8v7.7M1357.5 464.3v8.7M1358.5 463.7v8.8M1359.5 464.0v7.3M1360.5 463.6v8.8M1361.5 463.8v8.4M1362.5 463.7v8.1M1363.5 463.8v7.0M1364.5 463.8v7.6M1365.5 463.6v7.5M1366.5 464.3v8.1M1367.5 464.2v6.8M1368.5 464.2v8.5M1369.5 464.0v7.7M1370.5 464.1v7.5M1371.5 463.9v7.5M1372.5 464.1v8.3M1373.5 464.2v7.5M1374.5 463.9v8.4M1375.5 464.1v6.5M1376.5 463.9v8.2M1377.5 464.0v6.4M1378.5 463.6v7.8M1379.5 463.8v7.9M1380.5 464.1v7.2M1381.5 463.7v8.2M1382.5 463.7v7.7M1383.5 464.1v7.5M1384.5 463.8v6.8M1385.5 464.1v7.6M1386.5 463.7v7.7M1387.5 463.5v7.1M1388.5 464.0v7.7M1389.5 463.7v8.7M1390.5 463.6v8.3M1391.5 464.0v7.6M1392.5 463.5v8.9M1393.5 463.6v6.4M1394.5 463.6v6.7M1395.5 464.0v8.8M1396.5 463.7v6.3M1397.5 464.1v8.6M1398.5 463.6v8.2M1399.5 463.9v6.8M1400.5 463.7v6.5M1401.5 463.5v7.4M1402.5 464.2v9.0M1403.5 464.0v8.7M1404.5 463.8v7.8M1405.5 464.0v6.5M1406.5 463.8v6.7M1407.5 464.1v6.8M1408.5 464.1v6.7M1409.5 464.2v6.7M1410.5 464.2v8.9M1411.5 463.7v8.3M1412.5 464.3v6.1M1413.5 463.8v7.1M1414.5 464.3v7.2M1415.5 464.3v7.8M1416.5 463.9v7.9M1417.5 464.2v6.1M1418.5 464.2v7.5M1419.5 463.6v7.6M1420.5 464.0v7.8M1421.5 463.6v7.0M1422.5 464.0v6.9M1423.5 464.2v7.0M1424.5 463.6v7.1M1425.5 464.1v7.7M1426.5 464.3v6.7M1427.5 463.6v6.6M1428.5 463.9v6.0M1429.5 464.2v6.5M1430.5 464.0v8.4M1431.5 464.0v7.9M1432.5 464.3v8.2M1433.5 464.0v7.9M1434.5 464.3v7.5M1435.5 463.9v7.0M1436.5 463.6v6.0M1437.5 463.8v6.8M1438.5 463.8v7.7M1439.5 464.3v6.5M1440.5 464.1v6.7M1441.5 464.0v8.7M1442.5 463.7v7.7M1443.5 464.2v7.7M1444.5 463.8v6.8M1445.5 464.2v7.2M1446.5 464.0v6.8M1447.5 464.1v6.8M1448.5 464.3v8.0M1449.5 463.9v6.2M1450.5 464.3v7.5M1451.5 463.8v6.8M1452.5 464.1v6.9M1453.5 464.0v6.4M1454.5 463.5v6.8M1455.5 463.8v6.4M1456.5 463.6v7.8M1457.5 464.2v8.3M1458.5 464.1v7.3M1459.5 464.2v7.3M1460.5 463.9v7.6M1461.5 463.8v7.3M1462.5 463.8v8.2M1463.5 464.2v6.4M1464.5 463.7v7.6M1465.5 463.9v6.8M1466.5 463.6v6.4M1467.5 464.3v6.6M1468.5 463.7v6.1M1469.5 463.8v6.0M1470.5 463.7v8.0M1471.5 463.8v7.2M1472.5 464.2v8.6M1473.5 463.6v6.4M1474.5 463.8v7.0M1475.5 463.6v8.8M1476.5 463.9v6.6M1477.5 463.9v8.2M1478.5 464.3v6.6M1479.5 464.1v7.4M1480.5 464.0v6.4M1481.5 463.7v8.7M1482.5 464.0v7.0M1483.5 463.9v8.9M1484.5 463.6v7.9M1485.5 463.6v7.0M1486.5 463.5v6.7M1487.5 463.9v7.0M1488.5 464.0v8.8M1489.5 463.8v7.1M1490.5 463.7v6.6M1491.5 464.0v6.9M1492.5 463.8v7.9M1493.5 463.6v6.7M1494.5 463.8v7.9M1495.5 463.9v6.9M1496.5 463.5v8.6M1497.5 464.2v7.4M1498.5 464.1v8.1M1499.5 464.1v8.2M1500.5 463.8v8.7M1501.5 464.1v7.0M1502.5 463.5v7.3M1503.5 463.6v6.3M1504.5 463.8v8.0M1505.5 464.3v6.1M1506.5 463.9v7.7M1507.5 463.7v6.2M1508.5 463.6v7.2M1509.5 464.0v8.1M1510.5 464.1v6.2M1511.5 463.9v6.9M1512.5 463.7v7.4M1513.5 463.6v6.5M1514.5 463.7v8.0M1515.5 464.2v6.0M1516.5 463.6v7.7M1517.5 464.1v6.4M1518.5 463.9v6.5M1519.5 463.5v8.0M1520.5 464.0v8.9M1521.5 464.1v6.4M1522.5 463.7v6.4M1523.5 463.8v6.8M1524.5 463.7v7.9M1525.5 463.7v7.3M1526.5 464.1v8.5M1527.5 463.6v8.2M1528.5 463.9v6.6M1529.5 463.5v6.3M1530.5 463.8v7.6M1531.5 463.9v7.2M1532.5 463.9v7.0M1533.5 464.2v8.2M1534.5 463.7v8.1M1535.5 463.5v7.1M1536.5 463.7v7.1M1537.5 464.2v7.0M1538.5 463.5v8.4M1539.5 463.6v7.4M1540.5 463.8v6.6M1541.5 464.0v7.0M1542.5 464.2v8.9M1543.5 464.1v8.5M1544.5 463.8v8.1M1545.5 463.7v6.6M1546.5 463.8v7.0M1547.5 464.0v6.5M1548.5 463.8v9.0M1549.5 463.6v6.3M1550.5 464.0v6.4M1551.5 464.0v8.4M1552.5 464.2v7.6M1553.5 463.6v6.7M1554.5 464.0v7.9M1555.5 463.6v8.2M1556.5 463.8v6.1M1557.5 463.5v7.0M1558.5 463.6v6.4M1559.5 463.9v7.2M1560.5 463.9v7.5M1561.5 464.2v7.5M1562.5 463.6v7.4M1563.5 464.0v7.2M1564.5 464.1v8.5M1565.5 463.8v7.8M1566.5 464.0v7.8M1567.5 464.1v7.9M1568.5 463.7v6.3M1569.5 463.6v7.4M1570.5 463.7v7.8M1571.5 463.6v8.0M1572.5 463.6v6.9M1573.5 463.4v6.5M1574.5 463.5v8.4M1575.5 463.5v8.0M1576.5 463.7v7.7M1577.5 463.5v6.0M1578.5 464.0v7.3M1579.5 463.8v8.6M1580.5 463.8v6.1M1581.5 463.4v6.2M1582.5 463.6v6.5M1583.5 463.8v6.7M1584.5 464.0v8.3M1585.5 463.8v7.2M1586.5 464.0v8.1M1587.5 463.5v6.2M1588.5 463.3v7.8M1589.5 463.5v7.9M1590.5 463.5v6.5M1591.5 463.9v6.4M1592.5 463.8v7.5M1593.5 464.0v7.2M1594.5 463.4v8.8M1595.5 464.0v7.9M1596.5 463.7v8.4M1597.5 463.2v7.0M1598.5 463.8v7.6M1599.5 463.6v7.9M1600.5 463.7v6.6M1601.5 464.0v8.9M1602.5 463.7v6.9M1603.5 463.3v8.8M1604.5 464.0v8.9M1605.5 463.8v7.3M1606.5 464.0v8.5M1607.5 463.7v8.8M1608.5 463.5v6.1M1609.5 463.6v6.2M1610.5 463.9v6.3M1611.5 463.4v6.7M1612.5 463.5v8.5M1613.5 463.9v6.5M1614.5 463.9v7.1M1615.5 463.2v7.1M1616.5 463.8v7.8M1617.5 463.9v8.7M1618.5 463.5v7.7M1619.5 463.8v7.9M1620.5 463.2v6.5M1621.5 463.4v8.8M1622.5 463.4v8.2M1623.5 463.2v7.6M1624.5 463.2v7.7M1625.5 463.1v7.0M1626.5 463.7v7.8M1627.5 463.5v8.7M1628.5 463.5v8.3M1629.5 463.7v7.9M1630.5 463.2v6.3M1631.5 463.5v8.4M1632.5 463.7v7.3M1633.5 463.5v8.7M1634.5 463.4v6.3M1635.5 463.1v6.9M1636.5 463.7v8.4M1637.5 463.1v6.2M1638.5 463.5v6.4M1639.5 463.0v7.7M1640.5 463.0v8.9M1641.5 463.8v8.0M1642.5 463.7v6.6M1643.5 463.3v7.7M1644.5 463.7v7.2M1645.5 463.5v6.6M1646.5 463.6v6.6M1647.5 463.5v8.3M1648.5 463.3v8.2M1649.5 463.0v8.2M1650.5 463.7v7.8M1651.5 463.1v6.5M1652.5 463.6v7.7M1653.5 463.0v6.6M1654.5 463.7v6.0M1655.5 463.2v7.7M1656.5 463.0v7.4M1657.5 463.4v6.9M1658.5 463.3v7.9M1659.5 463.7v6.7M1660.5 463.2v8.8M1661.5 463.4v6.5M1662.5 463.2v6.0M1663.5 463.6v7.3M1664.5 463.0v7.5M1665.5 463.0v7.4M1666.5 463.5v6.9M1667.5 463.4v8.3M1668.5 463.4v6.5M1669.5 463.5v6.3M1670.5 463.1v8.4M1671.5 463.1v8.1M1672.5 463.5v8.3M1673.5 462.9v7.2M1674.5 463.6v7.7M1675.5 463.1v6.6M1676.5 462.9v6.6M1677.5 462.9v6.1M1678.5 462.9v8.5M1679.5 463.2v7.1M1680.5 463.5v8.3M1681.5 463.3v6.7M1682.5 463.2v7.9M1683.5 462.9v7.8M1684.5 463.1v8.4M1685.5 463.6v6.1M1686.5 463.3v7.6M1687.5 463.3v6.1M1688.5 462.8v8.4M1689.5 463.0v8.3M1690.5 462.9v7.0M1691.5 463.2v8.7M1692.5 463.5v7.5M1693.5 463.3v7.9M1694.5 463.5v7.5M1695.5 462.9v6.6M1696.5 463.0v7.4M1697.5 463.2v8.1M1698.5 463.1v7.7M1699.5 463.2v8.5M1700.5 463.5v8.0M1701.5 463.3v6.2M1702.5 463.1v6.1M1703.5 462.9v7.5M1704.5 463.3v7.9M1705.5 463.0v6.9M1706.5 463.3v6.2M1707.5 463.3v6.5M1708.5 462.8v8.1M1709.5 463.0v6.2M1710.5 463.2v7.3M1711.5 463.0v6.7M1712.5 463.4v9.0M1713.5 463.2v8.1M1714.5 462.9v7.7M1715.5 463.4v7.8M1716.5 463.4v7.0M1717.5 462.8v7.3M1718.5 462.9v6.1M1719.5 463.2v6.1M1720.5 463.4v7.7M1721.5 463.0v8.3M1722.5 462.7v6.3M1723.5 462.8v6.9M1724.5 463.1v8.8M1725.5 463.4v8.2M1726.5 463.3v8.3M1727.5 462.9v8.4M1728.5 463.0v6.9M1729.5 462.7v8.4M1730.5 463.3v8.3M1731.5 463.1v8.0M1732.5 463.1v8.3M1733.5 462.7v6.3M1734.5 462.6v8.3M1735.5 463.0v8.3M1736.5 462.7v9.0M1737.5 462.7v6.2M1738.5 463.3v8.2M1739.5 463.3v8.8M1740.5 462.7v8.3M1741.5 462.7v6.9M1742.5 463.2v8.6M1743.5 462.6v6.4M1744.5 463.2v6.5M1745.5 462.9v8.4M1746.5 463.3v6.8M1747.5 462.8v8.5M1748.5 463.2v7.1M1749.5 463.2v6.3M1750.5 462.7v7.1M1751.5 463.1v8.3M1752.5 463.0v7.8M1753.5 462.6v7.2M1754.5 463.2v7.5M1755.5 463.2v8.7M1756.5 462.7v6.6M1757.5 462.8v7.6M1758.5 463.3v6.7M1759.5 462.8v8.1M1760.5 463.2v7.6M1761.5 462.7v8.4M1762.5 462.8v7.6M1763.5 462.8v7.0M1764.5 463.2v8.3M1765.5 462.8v8.0M1766.5 463.3v7.9M1767.5 463.1v6.9M1768.5 462.9v8.7M1769.5 463.0v8.7M1770.5 463.5v7.1M1771.5 463.0v8.2M1772.5 463.2v8.4M1773.5 463.1v7.5M1774.5 463.1v7.3M1775.5 463.6v8.9M1776.5 463.5v7.3M1777.5 463.3v8.3M1778.5 463.5v6.9M1779.5 463.0v6.6M1780.5 463.1v6.5M1781.5 463.2v6.9M1782.5 463.5v8.4M1783.5 463.2v6.5M1784.5 463.4v8.4M1785.5 463.7v8.7M1786.5 463.1v7.9M1787.5 463.5v9.3M1788.5 463.2v9.3M1789.5 463.7v8.4M1790.5 463.5v7.3M1791.5 463.6v6.7M1792.5 463.1v8.0M1793.5 463.2v8.2M1794.5 463.2v7.2M1795.5 463.3v8.8M1796.5 463.5v6.8M1797.5 463.7v6.8M1798.5 463.7v8.1M1799.5 463.4v7.1M1800.5 463.9v6.7M1801.5 463.6v9.1M1802.5 463.9v8.5M1803.5 463.7v8.7M1804.5 463.9v9.0M1805.5 463.5v8.4M1806.5 464.0v7.3M1807.5 463.7v8.0M1808.5 463.7v6.6M1809.5 463.9v7.3M1810.5 463.7v7.9M1811.5 464.0v9.4M1812.5 463.6v7.6M1813.5 463.9v7.9M1814.5 463.7v9.1M1815.5 463.6v9.5M1816.5 463.8v9.3M1817.5 463.9v9.2M1818.5 464.1v7.4M1819.5 464.0v7.2M1820.5 463.8v7.4M1821.5 464.1v7.2M1822.5 464.0v8.0M1823.5 463.6v7.8M1824.5 464.0v9.5M1825.5 463.6v8.1M1826.5 464.1v7.7M1827.5 464.2v6.9M1828.5 464.1v7.8M1829.5 464.3v7.8M1830.5 463.8v8.0M1831.5 464.3v9.0M1832.5 464.2v7.9M1833.5 464.2v8.7M1834.5 463.7v8.0M1835.5 464.0v8.0M1836.5 463.9v8.2M1837.5 463.8v8.4M1838.5 464.0v8.2M1839.5 463.8v9.5M1840.5 464.2v8.7M1841.5 464.4v8.9M1842.5 464.3v7.4M1843.5 464.1v8.6M1844.5 464.2v8.5M1845.5 464.0v7.5M1846.5 464.3v9.2M1847.5 463.9v9.0M1848.5 464.6v9.6M1849.5 463.9v7.4M1850.5 463.9v8.0M1851.5 464.1v9.2M1852.5 464.4v9.0M1853.5 464.6v9.7M1854.5 464.0v9.8M1855.5 464.5v8.0M1856.5 464.1v9.8M1857.5 464.0v7.4M1858.5 464.4v8.3M1859.5 464.6v8.3M1860.5 464.1v7.8M1861.5 464.4v8.5M1862.5 464.2v7.1M1863.5 464.7v9.0M1864.5 464.8v7.5M1865.5 464.2v9.1M1866.5 464.5v7.7M1867.5 464.5v8.0M1868.5 464.6v9.0M1869.5 464.8v9.9M1870.5 464.5v9.5M1871.5 464.2v9.1M1872.5 464.2v7.9M1873.5 464.3v7.4M1874.5 464.4v9.4M1875.5 464.3v7.4M1876.5 464.4v10.0M1877.5 464.3v8.4M1878.5 464.7v7.7M1879.5 465.0v10.1M1880.5 464.9v9.0M1881.5 464.3v8.5M1882.5 464.7v7.8M1883.5 464.5v8.8M1884.5 464.5v9.7M1885.5 464.8v9.5M1886.5 464.4v7.6M1887.5 464.8v8.4M1888.5 465.1v9.9M1889.5 465.1v7.8M1890.5 465.2v8.6M1891.5 464.7v7.8M1892.5 464.9v9.1M1893.5 464.8v10.0M1894.5 465.1v9.8M1895.5 465.0v9.7M1896.5 464.9v10.1M1897.5 465.1v8.8M1898.5 464.8v8.9M1899.5 465.2v8.4M1900.5 464.6v8.7M1901.5 465.2v9.8M1902.5 465.3v8.8M1903.5 465.4v9.0M1904.5 464.7v9.4M1905.5 465.2v9.6M1906.5 465.0v8.2M1907.5 465.1v8.2M1908.5 465.2v10.5M1909.5 464.9v9.3M1910.5 464.9v9.7M1911.5 465.4v9.6M1912.5 465.5v10.2M1913.5 465.7v8.9M1914.5 465.3v9.0M1915.5 465.3v10.0M1916.5 465.3v9.3M1917.5 465.2v10.6M1918.5 465.8v8.0M1919.5 465.3v10.3M1920.5 465.8v9.4M1921.5 465.4v8.2M1922.5 465.9v8.6M1923.5 465.6v9.2M1924.5 465.4v9.5M1925.5 465.6v8.6M1926.5 465.6v9.3M1927.5 465.5v8.1M1928.5 465.8v8.1M1929.5 465.4v9.0M1930.5 465.9v10.0M1931.5 466.2v10.7M1932.5 465.9v9.2M1933.5 466.3v10.8M1934.5 466.1v9.0M1935.5 466.0v8.9M1936.5 466.1v9.4M1937.5 466.3v10.5M1938.5 466.2v9.1M1939.5 466.1v9.6M1940.5 466.0v8.7M1941.5 466.3v9.2M1942.5 465.8v9.0M1943.5 466.1v8.2M1944.5 465.9v9.6M1945.5 466.5v10.1M1946.5 466.4v9.3M1947.5 466.3v8.6M1948.5 466.1v8.2M1949.5 466.4v10.4M1950.5 466.8v9.0M1951.5 466.8v8.7M1952.5 466.3v9.1M1953.5 466.5v8.0M1954.5 466.5v8.5M1955.5 466.4v8.7M1956.5 466.3v9.1M1957.5 466.8v10.2M1958.5 466.3v10.3M1959.5 466.6v9.5M1960.5 466.9v10.3M1961.5 466.5v9.7M1962.5 466.9v8.2M1963.5 467.2v10.3M1964.5 466.9v9.8M1965.5 466.7v8.8M1966.5 466.8v8.9M1967.5 466.7v9.7M1968.5 467.0v9.3M1969.5 466.8v9.3M1970.5 466.9v10.3M1971.5 467.3v8.7M1972.5 466.8v9.9M1973.5 467.0v9.6M1974.5 466.9v8.1M1975.5 467.2v8.7M1976.5 467.3v9.4M1977.5 467.3v8.2M1978.5 467.2v9.5M1979.5 467.4v9.5M1980.5 467.1v8.3M1981.5 467.6v9.9M1982.5 467.5v10.1M1983.5 467.8v8.9M1984.5 467.5v9.9M1985.5 467.7v10.8M1986.5 467.2v9.2M1987.5 467.9v9.4M1988.5 468.0v8.2M1989.5 467.6v10.2M1990.5 467.4v9.4M1991.5 467.5v8.8M1992.5 467.8v8.5M1993.5 467.7v9.7M1994.5 468.1v8.5M1995.5 467.8v11.0M1996.5 467.6v10.0M1997.5 468.0v8.7M1998.5 468.0v9.3M1999.5 468.4v10.7M2000.5 468.0v9.8M2001.5 467.9v11.0M2002.5 468.1v8.5M2003.5 467.7v8.3M2004.5 468.1v8.8M2005.5 468.6v11.1M2006.5 468.3v8.5M2007.5 468.2v8.6M2008.5 468.2v10.9M2009.5 468.5v9.9M2010.5 468.4v10.9M2011.5 468.2v8.6M2012.5 468.4v8.7M2013.5 468.8v10.9M2014.5 468.3v8.8M2015.5 468.4v9.5M2016.5 468.4v10.2M2017.5 468.4v11.2M2018.5 468.2v8.6M2019.5 468.3v9.2M2020.5 468.3v8.5M2021.5 468.9v9.8M2022.5 468.9v10.7M2023.5 468.4v10.7M2024.5 468.5v11.3M2025.5 468.5v8.3M2026.5 468.7v8.9M2027.5 468.8v11.2M2028.5 469.0v8.9M2029.5 468.7v9.4M2030.5 469.0v8.3M2031.5 469.3v10.0M2032.5 468.9v8.8M2033.5 468.8v10.2M2034.5 469.1v10.5M2035.5 469.0v8.9M2036.5 469.2v9.8M2037.5 469.4v9.6M2038.5 469.0v11.0M2039.5 469.0v10.0M2040.5 469.3v9.0M2041.5 469.3v10.9M2042.5 469.2v9.9M2043.5 469.5v9.3M2044.5 469.7v10.0M2045.5 469.1v8.8M2046.5 469.5v10.8M2047.5 469.2v10.2M2048.5 469.9v11.0M2049.5 469.4v10.1M2050.5 469.9v8.7M2051.5 469.3v10.8M2052.5 469.3v10.8M2053.5 469.6v8.6M2054.5 469.5v11.0M2055.5 469.6v11.3M2056.5 469.8v10.1M2057.5 469.5v8.5M2058.5 470.1v8.5M2059.5 470.2v8.4M2060.5 470.2v10.2M2061.5 469.9v8.8M2062.5 470.0v9.0M2063.5 469.9v9.0M2064.5 469.9v11.2M2065.5 469.8v10.1M2066.5 470.0v8.5M2067.5 470.1v9.6M2068.5 470.0v9.1M2069.5 470.7v10.0M2070.5 470.3v11.4M2071.5 470.2v9.7M2072.5 470.5v10.9M2073.5 471.0v9.2M2074.5 470.8v9.8M2075.5 470.5v10.2M2076.5 470.4v11.2M2077.5 470.6v11.5M2078.5 471.0v10.7M2079.5 470.6v10.4M2080.5 471.1v10.5M2081.5 471.2v11.1M2082.5 470.8v9.7M2083.5 471.5v10.5M2084.5 471.3v9.1M2085.5 471.1v9.8M2086.5 471.0v9.6M2087.5 471.1v9.9M2088.5 471.1v9.7M2089.5 471.1v10.7M2090.5 471.4v10.5M2091.5 471.3v9.4M2092.5 471.6v10.9M2093.5 471.9v10.9M2094.5 472.1v9.7M2095.5 472.0v8.7M2096.5 472.0v10.8M2097.5 471.9v9.0M2098.5 471.6v9.9M2099.5 471.9v9.2M2100.5 472.1v9.2M2101.5 472.5v8.7M2102.5 472.2v10.6M2103.5 472.2v11.5M2104.5 472.6v10.8M2105.5 472.3v9.3M2106.5 472.1v10.5M2107.5 472.5v11.6M2108.5 472.6v11.3M2109.5 472.9v9.1M2110.5 472.9v10.2M2111.5 473.1v9.7M2112.5 472.7v11.3M2113.5 472.5v8.9M2114.5 472.7v9.3M2115.5 473.1v11.5M2116.5 472.8v8.7M2117.5 473.1v10.6M2118.5 472.9v10.4M2119.5 472.7v11.5M2120.5 473.2v10.8M2121.5 473.3v8.8M2122.5 473.4v10.1M2123.5 473.6v11.4M2124.5 473.2v11.0M2125.5 473.5v10.4M2126.5 473.4v8.7M2127.5 473.9v10.2M2128.5 473.8v10.9M2129.5 473.8v10.9M2130.5 473.9v11.3M2131.5 473.6v9.8M2132.5 473.6v11.0M2133.5 474.2v10.6M2134.5 474.0v11.2M2135.5 474.0v8.8M2136.5 473.9v9.5M2137.5 473.9v10.1M2138.5 473.8v9.4M2139.5 473.8v11.5M2140.5 474.0v10.2M2141.5 474.4v11.0M2142.5 474.7v10.8M2143.5 474.8v11.2M2144.5 474.3v11.3M2145.5 474.2v10.2M2146.5 474.6v9.9M2147.5 474.9v10.6M2148.5 474.9v9.3M2149.5 474.4v9.8M2150.5 474.9v11.2M2151.5 474.9v11.5M2152.5 475.2v9.8M2153.5 475.1v10.2M2154.5 475.1v8.9M2155.5 475.1v11.6M2156.5 474.9v10.2M2157.5 475.2v10.8M2158.5 475.6v10.3M2159.5 475.0v10.1M2160.5 475.3v9.5M2161.5 475.5v10.9M2162.5 475.1v10.4M2163.5 475.9v9.8M2164.5 475.9v11.0M2165.5 475.9v10.9M2166.5 475.7v11.5M2167.5 475.7v9.7M2168.5 476.1v10.3M2169.5 475.7v11.4M2170.5 476.0v9.4M2171.5 476.2v9.4M2172.5 475.9v9.7M2173.5 476.3v10.9M2174.5 476.3v9.0M2175.5 476.0v10.3M2176.5 476.2v10.2M2177.5 476.4v10.1M2178.5 476.7v10.1M2179.5 476.5v10.0M2180.5 476.6v10.5M2181.5 476.6v9.8M2182.5 476.7v10.6M2183.5 476.6v9.0M2184.5 476.3v9.8M2185.5 476.5v9.5M2186.5 476.6v9.5M2187.5 476.5v11.1M2188.5 476.4v9.1M2189.5 476.4v9.5M2190.5 476.3v10.2M2191.5 476.9v10.4M2192.5 476.2v11.9M2193.5 476.5v10.0M2194.5 476.3v9.7M2195.5 476.4v10.6M2196.5 476.8v11.6M2197.5 476.4v10.0M2198.5 476.8v10.3M2199.5 477.0v11.8M2200.5 476.5v9.0M2201.5 476.4v11.7M2202.5 476.6v10.0M2203.5 476.9v11.8M2204.5 476.6v10.4M2205.5 477.1v10.9M2206.5 476.8v10.7M2207.5 476.6v10.2M2208.5 477.2v10.5M2209.5 476.5v11.4M2210.5 477.1v10.8M2211.5 476.5v10.5" stroke="#ea0000" stroke-width="1.1"/>
<path d="M37.5 461.0v4M38.5 461.1v3M39.5 460.9v2M40.5 460.7v1.5M41.5 460.7v2M42.5 460.8v2M44.5 461.5v2.5M45.5 461.5v4M46.5 461.3v2.5M47.5 461.2v2M48.5 461.6v4M49.5 461.2v1.5M50.5 461.4v2M51.5 461.7v4M54.5 461.3v1.5M55.5 461.6v1.5M56.5 461.1v2.5M59.5 461.8v2M61.5 461.6v3M62.5 461.4v2M63.5 461.7v2.5M64.5 461.8v2.5M65.5 461.9v2.5M66.5 461.6v2.5M67.5 461.9v2.5M68.5 462.1v2.5M70.5 462.3v4M72.5 461.7v3M73.5 462.2v3M74.5 461.8v1.5M76.5 461.9v3M77.5 461.8v2.5M78.5 462.5v4M79.5 461.9v4M80.5 462.6v2M81.5 462.5v2M82.5 462.7v2.5M83.5 462.5v4M84.5 462.2v3M86.5 462.8v2.5M87.5 462.3v2.5M88.5 462.3v4M89.5 462.3v3M90.5 462.4v3M91.5 462.4v4M92.5 463.0v2.5M93.5 462.5v3M94.5 462.3v1.5M95.5 462.8v3M96.5 462.9v3M98.5 463.0v3M99.5 463.0v2M100.5 462.9v2M101.5 463.0v2.5M102.5 463.2v3M103.5 463.4v1.5M104.5 463.2v3M105.5 463.3v4M106.5 462.9v3M107.5 462.8v4M109.5 463.5v2.5M110.5 463.2v2.5M111.5 463.2v2.5M112.5 463.6v3M113.5 463.3v1.5M115.5 463.6v3M116.5 463.1v2M117.5 463.6v2.5M119.5 463.5v3M121.5 463.7v4M122.5 463.3v2M123.5 463.2v2M125.5 463.8v3M126.5 463.2v3M127.5 463.7v1.5M129.5 463.7v1.5M130.5 463.7v2M133.5 463.6v2M134.5 463.6v2M135.5 463.6v3M138.5 463.3v1.5M139.5 463.4v3M140.5 463.9v1.5M142.5 463.6v3M143.5 463.6v4M144.5 463.5v2M145.5 464.0v2.5M146.5 463.9v2M147.5 463.7v1.5M149.5 463.4v2.5M150.5 463.6v4M151.5 464.0v4M152.5 463.7v4M153.5 463.5v4M154.5 464.0v2.5M155.5 463.9v2M156.5 464.2v3M158.5 463.7v2M160.5 464.2v2.5M161.5 463.8v2.5M162.5 463.6v3M163.5 464.0v1.5M164.5 464.1v4M165.5 463.9v4M166.5 464.1v3M167.5 464.0v2.5M171.5 464.2v2M172.5 463.6v4M173.5 464.3v4M174.5 464.3v1.5M176.5 463.8v2M177.5 463.8v4M178.5 464.0v2M179.5 463.8v4M180.5 464.1v1.5M181.5 464.2v3M182.5 463.9v2M184.5 463.8v1.5M185.5 464.0v2M186.5 464.4v1.5M187.5 464.4v2M188.5 464.3v3M190.5 463.8v2.5M191.5 463.8v2.5M192.5 464.4v2M193.5 464.2v1.5M194.5 463.8v1.5M196.5 464.0v1.5M197.5 464.5v3M198.5 463.9v3M199.5 464.3v1.5M200.5 464.5v4M201.5 463.9v3M203.5 464.6v3M204.5 463.9v2M205.5 463.9v3M206.5 464.6v1.5M207.5 464.3v3M208.5 463.9v2M209.5 464.2v4M210.5 464.7v1.5M211.5 464.3v4M212.5 464.7v1.5M213.5 464.6v1.5M214.5 464.2v2.5M215.5 464.5v4M216.5 464.7v4M217.5 464.8v2M218.5 464.6v2M219.5 464.3v4M220.5 464.4v1.5M221.5 464.2v1.5M222.5 464.8v2M223.5 464.3v3M226.5 464.2v4M227.5 464.8v1.5M228.5 464.6v4M229.5 464.2v1.5M230.5 464.7v1.5M231.5 464.7v2.5M232.5 464.9v3M233.5 464.3v4M234.5 465.0v4M235.5 464.3v4M236.5 464.7v2.5M237.5 464.6v2M239.5 464.6v3M240.5 464.8v1.5M241.5 464.9v4M242.5 464.8v3M243.5 465.0v2.5M244.5 465.0v2M245.5 464.4v1.5M246.5 464.7v2.5M247.5 465.1v2M248.5 464.9v1.5M252.5 464.7v4M253.5 464.7v1.5M254.5 464.7v1.5M255.5 464.6v3M256.5 464.9v4M258.5 464.8v1.5M259.5 464.5v2M260.5 464.4v3M261.5 464.8v2.5M262.5 464.9v1.5M263.5 464.9v2.5M264.5 465.3v2M265.5 464.7v3M267.5 465.1v2.5M269.5 464.5v2M270.5 464.6v3M271.5 465.0v4M272.5 465.2v4M273.5 465.4v2.5M274.5 464.7v1.5M275.5 464.9v3M276.5 464.8v3M277.5 464.8v2.5M278.5 465.3v3M280.5 465.2v1.5M281.5 465.0v2.5M282.5 465.2v3M283.5 465.3v2.5M284.5 465.4v1.5M285.5 465.0v4M286.5 465.4v2M287.5 465.2v3M288.5 465.3v4M290.5 465.0v4M291.5 465.4v1.5M292.5 464.9v4M293.5 464.8v2.5M294.5 465.3v3M295.5 464.9v1.5M296.5 464.9v3M298.5 465.2v3M300.5 465.6v4M301.5 464.9v2.5M302.5 464.9v2.5M303.5 465.1v2.5M304.5 465.7v3M305.5 465.6v2.5M306.5 465.0v2.5M308.5 465.0v3M309.5 465.1v3M310.5 465.3v2.5M311.5 465.1v3M312.5 465.5v4M313.5 465.1v3M315.5 465.2v1.5M316.5 465.1v1.5M317.5 465.6v2.5M318.5 465.2v1.5M320.5 465.3v4M321.5 465.1v3M322.5 465.2v1.5M323.5 465.5v3M325.5 465.2v2M326.5 464.9v4M327.5 465.0v4M328.5 465.5v3M329.5 465.3v3M330.5 465.3v4M331.5 465.2v4M333.5 465.0v2M335.5 464.9v2.5M336.5 465.2v2.5M337.5 465.0v3M338.5 464.8v3M339.5 464.7v4M340.5 464.9v4M341.5 465.2v2M342.5 465.2v2M343.5 465.0v3M344.5 465.0v2M345.5 464.6v4M346.5 464.5v4M347.5 464.6v1.5M348.5 464.9v1.5M349.5 465.1v3M350.5 465.2v4M351.5 464.6v2.5M353.5 464.7v1.5M355.5 464.6v3M357.5 464.8v2M359.5 464.7v2.5M362.5 464.5v3M363.5 464.7v4M364.5 464.4v4M365.5 464.3v2M366.5 465.0v3M368.5 464.4v3M369.5 464.7v4M370.5 464.8v3M371.5 464.9v2.5M373.5 464.2v2.5M374.5 464.1v2M375.5 464.4v3M376.5 464.8v1.5M377.5 464.8v3M378.5 464.1v3M379.5 464.8v2.5M380.5 464.3v1.5M381.5 464.3v2.5M382.5 464.4v3M383.5 464.7v4M384.5 464.4v2.5M385.5 464.6v3M386.5 464.6v2M387.5 464.7v2M389.5 464.1v2.5M390.5 464.3v2.5M391.5 464.5v3M393.5 464.2v4M394.5 464.3v2M395.5 463.9v4M396.5 464.4v1.5M397.5 464.0v2M398.5 464.5v3M399.5 464.1v3M400.5 464.5v2M401.5 464.0v3M402.5 464.0v3M403.5 464.1v2.5M404.5 464.4v1.5M405.5 464.2v4M407.5 463.7v1.5M408.5 463.7v2M413.5 463.6v1.5M414.5 464.1v3M415.5 463.6v4M416.5 464.1v1.5M417.5 463.7v2M418.5 463.5v3M419.5 463.9v2M420.5 463.5v1.5M421.5 463.6v2M422.5 463.5v2.5M423.5 463.9v4M424.5 463.9v2M427.5 464.0v2M429.5 463.8v2M430.5 463.7v2.5M432.5 463.5v3M433.5 463.7v4M434.5 463.8v1.5M435.5 463.4v2M436.5 464.0v1.5M438.5 463.4v1.5M439.5 463.9v2.5M440.5 463.7v3M441.5 463.5v1.5M442.5 463.7v3M443.5 463.6v4M444.5 463.6v4M445.5 463.1v1.5M446.5 463.4v1.5M447.5 463.3v4M449.5 463.4v2M450.5 463.1v2M451.5 463.5v4M452.5 463.4v2M454.5 463.5v2.5M456.5 463.4v2M457.5 463.4v2.5M459.5 463.6v2.5M460.5 463.2v3M461.5 463.2v2.5M462.5 462.8v4M463.5 462.8v3M464.5 463.0v2M466.5 463.5v4M467.5 462.8v2.5M468.5 462.9v3M469.5 463.4v2.5M471.5 462.9v2M473.5 463.0v1.5M474.5 462.8v3M475.5 463.2v2M476.5 462.9v2.5M477.5 462.6v1.5M478.5 462.9v2.5M479.5 463.3v1.5M480.5 463.1v1.5M483.5 462.7v2M484.5 463.1v2M485.5 463.2v2.5M488.5 462.8v4M489.5 463.0v2M490.5 462.5v2.5M491.5 462.7v2M492.5 462.6v2M493.5 463.0v1.5M494.5 462.5v2M495.5 462.8v2M497.5 462.4v2.5M498.5 462.7v4M499.5 462.5v4M500.5 463.0v1.5M501.5 462.4v1.5M502.5 462.5v1.5M503.5 462.6v1.5M504.5 462.9v2.5M505.5 462.3v2M506.5 462.3v3M508.5 462.3v2M509.5 462.2v4M510.5 462.4v4M511.5 462.7v4M512.5 462.6v2M513.5 462.6v2.5M515.5 462.8v2M516.5 462.5v3M517.5 462.2v1.5M518.5 462.0v3M519.5 462.2v1.5M520.5 462.6v2.5M521.5 462.6v4M523.5 462.5v4M525.5 462.3v2.5M526.5 462.5v2M527.5 462.7v2M529.5 462.3v3M530.5 462.2v4M531.5 462.3v4M532.5 462.3v4M535.5 462.6v3M536.5 462.1v1.5M537.5 462.3v2.5M538.5 462.1v3M539.5 462.0v1.5M540.5 462.1v1.5M541.5 461.8v2.5M542.5 462.2v2.5M543.5 462.0v3M544.5 461.8v1.5M546.5 462.4v2.5M547.5 461.8v4M548.5 462.5v1.5M549.5 461.9v2M550.5 461.9v2M551.5 462.0v4M553.5 462.2v2M555.5 462.5v3M556.5 462.0v3M557.5 462.4v4M558.5 462.2v2M560.5 462.2v2.5M561.5 462.1v2M562.5 462.3v1.5M563.5 462.1v2.5M564.5 462.1v4M565.5 462.3v1.5M567.5 462.3v4M568.5 462.3v3M569.5 461.6v2.5M570.5 462.0v1.5M571.5 461.8v1.5M572.5 461.8v2.5M573.5 462.3v1.5M574.5 461.7v4M576.5 461.7v3M577.5 462.0v4M578.5 462.3v1.5M579.5 461.5v1.5M581.5 462.1v4M583.5 461.9v2M584.5 461.5v2.5M585.5 461.9v2.5M587.5 461.8v4M588.5 462.1v2.5M590.5 461.5v1.5M591.5 462.0v4M594.5 461.7v2M596.5 462.0v1.5M597.5 461.5v3M598.5 461.6v2.5M599.5 461.9v3M600.5 461.7v2M601.5 462.1v2.5M602.5 461.9v2.5M603.5 461.6v3M604.5 461.8v3M605.5 461.7v2.5M606.5 461.5v1.5M608.5 462.0v2.5M609.5 461.9v4M611.5 461.4v2.5M612.5 461.3v3M613.5 461.5v2.5M614.5 461.4v2M615.5 462.0v2M616.5 461.5v2.5M617.5 462.0v4M618.5 462.0v1.5M619.5 461.6v2M620.5 461.6v3M621.5 461.5v4M622.5 461.8v1.5M623.5 461.6v3M624.5 461.4v4M625.5 461.6v3M626.5 461.4v3M627.5 461.2v2M628.5 461.4v4M629.5 461.6v2M630.5 461.2v2.5M631.5 461.6v2.5M633.5 461.6v4M634.5 461.9v2M635.5 461.8v2M636.5 461.8v2.5M637.5 461.4v1.5M638.5 461.3v2M639.5 461.1v1.5M640.5 461.8v2.5M644.5 461.8v4M645.5 461.2v4M646.5 461.6v2.5M647.5 461.5v1.5M649.5 461.5v1.5M650.5 461.2v2.5M651.5 461.6v4M652.5 461.5v4M654.5 461.0v1.5M655.5 461.1v3M656.5 461.3v4M657.5 461.1v2M658.5 461.3v1.5M659.5 461.3v1.5M660.5 461.3v2.5M661.5 461.2v2M662.5 461.5v2M663.5 461.1v3M664.5 461.3v1.5M665.5 461.1v2M666.5 461.1v1.5M667.5 461.4v2.5M668.5 461.5v1.5M669.5 461.3v4M670.5 461.0v2M671.5 461.3v2M673.5 460.9v1.5M674.5 461.4v2M675.5 461.3v2M676.5 461.4v1.5M677.5 460.8v2.5M679.5 460.8v3M680.5 461.3v4M681.5 461.3v3M682.5 461.3v2M683.5 461.4v2M684.5 460.9v2M685.5 461.4v2M686.5 461.2v1.5M687.5 461.3v2M688.5 461.2v4M689.5 461.3v4M690.5 460.9v4M691.5 461.0v1.5M692.5 460.8v1.5M693.5 461.5v1.5M694.5 461.0v2.5M695.5 460.7v4M696.5 460.7v2M697.5 461.2v2M699.5 461.1v3M700.5 461.4v2M702.5 461.1v4M703.5 461.1v2.5M704.5 461.2v2M707.5 461.3v3M708.5 460.7v2M712.5 460.9v3M714.5 460.6v1.5M715.5 460.8v2.5M716.5 461.1v1.5M717.5 461.2v3M719.5 460.7v1.5M720.5 461.2v4M722.5 460.5v3M724.5 460.8v2.5M725.5 461.0v4M726.5 461.0v2M728.5 461.0v2M729.5 461.4v2.5M730.5 460.7v2M731.5 460.7v3M734.5 460.8v3M735.5 460.8v4M736.5 460.9v1.5M737.5 461.2v3M738.5 460.9v2M739.5 460.9v4M741.5 460.7v1.5M743.5 461.5v2.5M744.5 461.3v2M745.5 461.4v2.5M746.5 461.3v2M747.5 461.4v1.5M748.5 461.3v1.5M750.5 460.9v2M751.5 460.9v1.5M753.5 461.1v3M754.5 461.5v1.5M756.5 461.6v2M757.5 461.4v3M758.5 461.4v2.5M759.5 461.6v3M760.5 461.3v2M761.5 461.3v3M762.5 461.2v2M763.5 461.4v2.5M764.5 461.0v2M765.5 461.3v2.5M768.5 461.6v1.5M770.5 461.1v4M773.5 461.1v4M774.5 461.3v2.5M776.5 461.6v3M777.5 461.3v2M779.5 461.3v2M780.5 461.8v3M781.5 461.1v3M782.5 461.5v1.5M783.5 461.6v4M784.5 461.6v1.5M785.5 461.1v1.5M786.5 461.7v2.5M787.5 461.3v4M788.5 461.5v4M789.5 461.7v4M790.5 461.8v2M791.5 461.1v2.5M793.5 461.7v1.5M794.5 461.5v2M795.5 461.7v1.5M797.5 461.2v4M798.5 461.5v1.5M799.5 461.3v4M800.5 461.5v1.5M801.5 461.5v2M802.5 461.2v4M803.5 461.2v2.5M804.5 461.8v2.5M808.5 461.2v4M809.5 461.6v2.5M810.5 461.8v1.5M811.5 462.0v2.5M812.5 461.7v4M813.5 461.4v1.5M814.5 461.5v2.5M815.5 461.5v4M816.5 461.4v2M818.5 461.6v3M820.5 461.3v4M822.5 461.6v2.5M823.5 461.9v1.5M824.5 461.6v3M826.5 461.7v4M827.5 461.9v3M828.5 461.9v2M830.5 461.4v2.5M831.5 461.5v4M832.5 461.5v2M833.5 461.6v2M834.5 462.2v2.5M837.5 461.6v1.5M838.5 461.9v4M840.5 462.0v2M841.5 462.0v2.5M842.5 461.9v4M843.5 461.9v4M845.5 461.7v3M846.5 462.1v3M848.5 462.1v3M849.5 461.6v2M850.5 462.0v3M851.5 462.0v1.5M852.5 461.6v2M853.5 462.0v4M854.5 462.3v2.5M855.5 461.7v2.5M857.5 462.3v2M858.5 461.6v2.5M859.5 461.7v1.5M861.5 461.7v2M862.5 462.3v2M863.5 462.2v4M864.5 462.2v1.5M865.5 462.3v2M866.5 462.1v1.5M867.5 462.0v4M868.5 461.8v2.5M869.5 462.0v2M870.5 462.3v2.5M871.5 462.3v4M872.5 461.8v1.5M873.5 462.1v3M874.5 461.9v4M875.5 462.2v2.5M876.5 462.3v4M879.5 462.1v2.5M880.5 462.4v1.5M881.5 462.2v2.5M886.5 462.4v2M888.5 462.1v3M889.5 462.5v2.5M890.5 462.6v2.5M891.5 462.6v2M892.5 462.1v3M894.5 462.0v4M895.5 462.6v2.5M896.5 462.3v2M897.5 462.6v3M898.5 462.0v2.5M899.5 462.3v1.5M900.5 462.2v2.5M901.5 462.0v4M902.5 462.2v2M903.5 462.2v3M904.5 462.5v3M907.5 461.9v2M909.5 462.5v3M910.5 462.5v3M911.5 462.6v1.5M912.5 462.0v4M913.5 462.3v3M915.5 462.1v2.5M916.5 462.3v4M917.5 462.3v1.5M918.5 462.3v1.5M919.5 462.0v1.5M920.5 462.1v4M922.5 462.5v2M923.5 462.2v2.5M925.5 462.3v3M926.5 462.5v2M927.5 462.8v1.5M929.5 462.3v4M931.5 462.5v4M932.5 462.2v2M933.5 462.3v4M934.5 462.9v4M935.5 462.7v4M936.5 462.6v2.5M937.5 462.4v1.5M938.5 462.6v3M939.5 462.4v1.5M940.5 462.3v2M941.5 462.6v4M942.5 462.8v2M943.5 462.7v3M944.5 462.9v1.5M945.5 462.9v4M946.5 462.5v3M948.5 462.3v3M949.5 462.5v4M950.5 463.0v4M951.5 462.7v2M953.5 462.8v3M954.5 462.5v2.5M955.5 462.6v2M960.5 462.6v4M961.5 462.9v1.5M962.5 463.2v4M963.5 463.0v2.5M964.5 462.7v1.5M965.5 462.5v4M966.5 462.5v2.5M967.5 462.8v2.5M968.5 463.0v3M970.5 463.0v3M971.5 463.3v1.5M973.5 462.6v1.5M974.5 463.2v1.5M975.5 462.7v2.5M977.5 462.8v2M978.5 463.0v2.5M979.5 462.9v4M980.5 463.3v2.5M981.5 463.3v1.5M982.5 462.7v2.5M983.5 462.9v4M984.5 463.1v4M985.5 463.2v2.5M986.5 463.3v3M987.5 463.3v3M988.5 463.2v1.5M989.5 463.4v2.5M990.5 462.7v3M991.5 462.8v2.5M992.5 463.4v4M993.5 463.4v4M994.5 463.4v1.5M995.5 462.9v2M996.5 463.5v3M997.5 463.5v2M999.5 463.1v4M1003.5 463.2v4M1004.5 462.9v4M1006.5 463.1v2M1008.5 463.1v3M1009.5 463.6v2.5M1011.5 462.9v2.5M1012.5 463.6v4M1013.5 463.5v4M1014.5 463.5v2.5M1016.5 463.0v4M1017.5 463.1v3M1020.5 463.4v3M1021.5 463.5v2M1022.5 463.5v3M1023.5 463.6v4M1024.5 463.4v2M1025.5 463.5v2M1026.5 463.4v1.5M1027.5 463.4v4M1028.5 463.1v2M1029.5 463.4v3M1030.5 463.5v4M1032.5 463.5v3M1034.5 463.8v3M1036.5 463.8v1.5M1037.5 463.3v2M1039.5 463.9v2.5M1040.5 463.7v3M1041.5 463.6v4M1042.5 463.6v2M1044.5 463.6v3M1045.5 463.7v2M1046.5 463.3v2M1047.5 464.0v4M1048.5 463.7v1.5M1050.5 463.9v2M1051.5 463.6v1.5M1052.5 463.6v1.5M1053.5 464.1v4M1054.5 464.1v4M1057.5 463.9v2.5M1058.5 463.7v1.5M1059.5 463.5v2.5M1060.5 463.4v2M1061.5 463.6v3M1063.5 463.7v2.5M1064.5 463.8v4M1065.5 463.8v4M1066.5 463.9v3M1067.5 463.5v3M1068.5 463.9v1.5M1069.5 464.2v2.5M1070.5 463.8v1.5M1072.5 463.7v4M1073.5 463.7v3M1074.5 463.8v3M1075.5 463.8v1.5M1076.5 464.1v3M1078.5 464.0v2.5M1079.5 464.2v3M1080.5 464.3v2M1083.5 464.6v2.5M1084.5 464.6v2.5M1085.5 464.2v4M1086.5 464.6v3M1090.5 464.4v2M1091.5 464.4v4M1092.5 464.6v2M1093.5 464.5v1.5M1094.5 464.3v4M1095.5 464.3v4M1097.5 464.6v2M1098.5 465.0v2.5M1099.5 464.6v2.5M1100.5 464.6v2M1101.5 464.5v4M1102.5 464.8v2M1105.5 465.0v1.5M1106.5 465.1v2M1107.5 464.7v2M1110.5 465.2v4M1113.5 464.8v2.5M1114.5 465.3v3M1115.5 465.2v1.5M1116.5 465.4v2.5M1117.5 465.0v4M1118.5 465.1v1.5M1119.5 465.1v1.5M1120.5 465.2v2M1121.5 465.7v2.5M1123.5 465.4v1.5M1124.5 465.2v2.5M1125.5 465.2v3M1126.5 465.3v1.5M1127.5 465.7v2M1128.5 465.1v2.5M1131.5 465.5v3M1132.5 465.7v3M1133.5 465.6v3M1134.5 465.2v4M1135.5 465.0v2M1137.5 465.5v4M1138.5 465.1v4M1139.5 465.2v2M1140.5 464.9v2M1145.5 465.0v1.5M1147.5 464.9v2M1148.5 464.9v3M1149.5 464.9v3M1150.5 465.4v4M1151.5 464.9v2.5M1152.5 465.1v2M1153.5 465.2v4M1155.5 465.5v2M1156.5 465.4v3M1157.5 464.8v4M1158.5 465.2v3M1160.5 465.4v1.5M1163.5 464.8v4M1164.5 464.8v2.5M1165.5 465.1v3M1166.5 464.7v1.5M1167.5 464.7v3M1168.5 465.4v2M1171.5 465.1v4M1173.5 464.6v2M1177.5 465.0v1.5M1178.5 465.2v2M1179.5 464.9v3M1180.5 464.9v2.5M1181.5 465.2v4M1184.5 465.3v2.5M1185.5 464.7v2.5M1186.5 464.5v4M1187.5 464.7v1.5M1189.5 465.0v1.5M1190.5 464.5v3M1191.5 465.1v4M1192.5 464.6v3M1193.5 464.5v3M1194.5 464.8v4M1195.5 464.6v3M1196.5 464.5v3M1198.5 464.8v2M1199.5 464.8v1.5M1201.5 464.5v2.5M1203.5 464.7v2M1204.5 464.5v3M1205.5 464.5v2.5M1206.5 465.1v2M1207.5 464.7v3M1208.5 464.9v2.5M1209.5 464.8v4M1210.5 464.4v4M1214.5 464.9v3M1215.5 464.8v1.5M1216.5 464.5v2M1217.5 464.9v2.5M1218.5 464.7v2M1219.5 464.7v3M1220.5 465.0v2.5M1221.5 464.4v2M1222.5 464.3v3M1223.5 464.8v2M1224.5 464.3v2.5M1225.5 464.7v2M1226.5 464.9v1.5M1227.5 464.6v1.5M1228.5 464.2v1.5M1229.5 464.4v4M1230.5 464.8v2M1231.5 464.6v2M1232.5 464.3v3M1233.5 464.7v1.5M1234.5 464.6v1.5M1235.5 464.6v3M1236.5 464.8v4M1237.5 464.7v2.5M1238.5 464.5v4M1239.5 464.4v2M1240.5 464.5v2.5M1242.5 464.6v3M1244.5 464.4v4M1245.5 464.6v4M1247.5 464.4v4M1248.5 464.8v3M1250.5 464.3v3M1251.5 464.1v1.5M1252.5 464.5v3M1253.5 464.5v1.5M1254.5 464.5v2M1255.5 464.7v2M1256.5 464.1v4M1257.5 464.2v3M1258.5 464.7v2M1259.5 464.6v2M1260.5 464.3v2M1261.5 464.2v1.5M1262.5 464.5v4M1263.5 464.3v3M1264.5 464.0v2M1265.5 464.5v2.5M1266.5 464.4v2M1270.5 464.3v2M1272.5 464.2v1.5M1273.5 463.9v2M1274.5 464.7v3M1275.5 463.9v2M1276.5 463.9v2M1277.5 464.4v2M1281.5 464.4v3M1282.5 464.4v1.5M1283.5 463.8v4M1284.5 463.8v4M1285.5 464.2v2.5M1286.5 464.3v4M1287.5 464.1v3M1288.5 464.4v1.5M1289.5 464.1v2.5M1290.5 464.1v1.5M1291.5 464.1v2.5M1292.5 464.2v2.5M1293.5 464.4v2.5M1294.5 463.8v4M1295.5 464.0v3M1296.5 464.5v2.5M1298.5 464.2v2M1299.5 464.0v1.5M1301.5 464.1v2M1302.5 464.0v4M1303.5 464.1v2M1304.5 464.2v2M1305.5 463.7v3M1306.5 464.1v2.5M1308.5 464.4v3M1309.5 463.8v2M1310.5 464.1v4M1311.5 463.8v2M1313.5 464.3v3M1315.5 464.1v2.5M1316.5 464.0v2M1317.5 463.9v2M1318.5 463.6v2M1319.5 464.1v3M1320.5 464.2v4M1321.5 463.9v2M1322.5 463.9v4M1323.5 463.6v2M1325.5 464.2v3M1328.5 463.9v3M1329.5 464.1v2M1330.5 463.7v4M1331.5 463.8v2.5M1333.5 463.9v4M1335.5 464.2v2M1337.5 463.7v2.5M1338.5 464.2v1.5M1339.5 463.7v1.5M1340.5 464.0v1.5M1341.5 463.5v1.5M1342.5 464.1v4M1343.5 464.2v4M1344.5 464.1v3M1345.5 464.0v3M1346.5 463.9v3M1348.5 464.1v2.5M1349.5 463.7v3M1351.5 463.8v3M1353.5 463.5v2.5M1354.5 463.6v2M1355.5 463.5v1.5M1356.5 463.8v2.5M1357.5 464.3v4M1359.5 464.0v2.5M1360.5 463.6v2M1361.5 463.8v4M1363.5 463.8v4M1366.5 464.3v2M1367.5 464.2v3M1369.5 464.0v3M1370.5 464.1v4M1371.5 463.9v4M1372.5 464.1v1.5M1373.5 464.2v1.5M1374.5 463.9v2M1379.5 463.8v2.5M1381.5 463.7v2.5M1382.5 463.7v4M1383.5 464.1v2.5M1384.5 463.8v2.5M1385.5 464.1v1.5M1386.5 463.7v4M1387.5 463.5v4M1388.5 464.0v4M1389.5 463.7v2.5M1390.5 463.6v3M1391.5 464.0v2M1392.5 463.5v2M1393.5 463.6v2M1394.5 463.6v2.5M1395.5 464.0v2.5M1396.5 463.7v3M1397.5 464.1v2.5M1398.5 463.6v2M1399.5 463.9v2M1401.5 463.5v2M1404.5 463.8v3M1405.5 464.0v2M1406.5 463.8v3M1407.5 464.1v1.5M1408.5 464.1v4M1409.5 464.2v2M1410.5 464.2v4M1411.5 463.7v2.5M1412.5 464.3v3M1413.5 463.8v2.5M1415.5 464.3v4M1416.5 463.9v2M1417.5 464.2v3M1418.5 464.2v4M1419.5 463.6v1.5M1420.5 464.0v1.5M1421.5 463.6v2M1422.5 464.0v4M1423.5 464.2v3M1424.5 463.6v1.5M1425.5 464.1v1.5M1426.5 464.3v3M1428.5 463.9v1.5M1429.5 464.2v2.5M1431.5 464.0v2M1432.5 464.3v2M1433.5 464.0v2M1434.5 464.3v4M1435.5 463.9v4M1436.5 463.6v4M1437.5 463.8v4M1438.5 463.8v2M1439.5 464.3v1.5M1440.5 464.1v4M1443.5 464.2v2M1444.5 463.8v2M1445.5 464.2v2.5M1447.5 464.1v2.5M1448.5 464.3v2.5M1449.5 463.9v1.5M1450.5 464.3v2M1451.5 463.8v3M1452.5 464.1v2.5M1453.5 464.0v3M1454.5 463.5v1.5M1455.5 463.8v4M1456.5 463.6v2M1457.5 464.2v2.5M1458.5 464.1v2M1459.5 464.2v2M1460.5 463.9v1.5M1461.5 463.8v4M1462.5 463.8v2M1463.5 464.2v1.5M1464.5 463.7v2M1465.5 463.9v4M1466.5 463.6v3M1467.5 464.3v2.5M1468.5 463.7v1.5M1469.5 463.8v4M1470.5 463.7v2.5M1471.5 463.8v2M1472.5 464.2v1.5M1473.5 463.6v3M1474.5 463.8v3M1475.5 463.6v1.5M1476.5 463.9v4M1477.5 463.9v2.5M1478.5 464.3v3M1479.5 464.1v3M1480.5 464.0v2.5M1481.5 463.7v1.5M1482.5 464.0v1.5M1483.5 463.9v4M1484.5 463.6v4M1485.5 463.6v3M1486.5 463.5v2.5M1487.5 463.9v2M1488.5 464.0v1.5M1489.5 463.8v3M1490.5 463.7v3M1491.5 464.0v2.5M1492.5 463.8v3M1493.5 463.6v4M1494.5 463.8v2M1495.5 463.9v2M1496.5 463.5v2.5M1497.5 464.2v3M1498.5 464.1v2M1500.5 463.8v3M1502.5 463.5v3M1503.5 463.6v2.5M1504.5 463.8v1.5M1505.5 464.3v3M1506.5 463.9v2M1508.5 463.6v2.5M1509.5 464.0v2.5M1511.5 463.9v2.5M1513.5 463.6v2.5M1515.5 464.2v1.5M1516.5 463.6v2.5M1518.5 463.9v4M1519.5 463.5v1.5M1520.5 464.0v2.5M1521.5 464.1v3M1523.5 463.8v1.5M1524.5 463.7v3M1525.5 463.7v2M1526.5 464.1v3M1527.5 463.6v4M1528.5 463.9v4M1529.5 463.5v3M1530.5 463.8v1.5M1532.5 463.9v4M1533.5 464.2v2M1534.5 463.7v4M1535.5 463.5v2M1537.5 464.2v3M1538.5 463.5v3M1539.5 463.6v2M1540.5 463.8v4M1541.5 464.0v2M1542.5 464.2v2M1543.5 464.1v2.5M1544.5 463.8v3M1545.5 463.7v4M1546.5 463.8v4M1547.5 464.0v2M1549.5 463.6v2M1550.5 464.0v3M1551.5 464.0v2M1553.5 463.6v2M1556.5 463.8v1.5M1557.5 463.5v2.5M1558.5 463.6v4M1559.5 463.9v2.5M1560.5 463.9v1.5M1561.5 464.2v2.5M1562.5 463.6v2M1563.5 464.0v2.5M1564.5 464.1v4M1565.5 463.8v2M1566.5 464.0v4M1567.5 464.1v4M1569.5 463.6v4M1570.5 463.7v2M1571.5 463.6v3M1574.5 463.5v4M1575.5 463.5v1.5M1576.5 463.7v3M1577.5 463.5v1.5M1578.5 464.0v1.5M1579.5 463.8v2M1580.5 463.8v2M1581.5 463.4v4M1582.5 463.6v2.5M1583.5 463.8v1.5M1584.5 464.0v2.5M1586.5 464.0v2M1587.5 463.5v1.5M1588.5 463.3v1.5M1589.5 463.5v1.5M1592.5 463.8v1.5M1594.5 463.4v2.5M1595.5 464.0v4M1596.5 463.7v2.5M1597.5 463.2v3M1599.5 463.6v2M1600.5 463.7v3M1601.5 464.0v2M1602.5 463.7v4M1603.5 463.3v1.5M1604.5 464.0v4M1605.5 463.8v4M1606.5 464.0v2M1607.5 463.7v2M1609.5 463.6v2M1610.5 463.9v3M1611.5 463.4v2M1612.5 463.5v2M1613.5 463.9v3M1614.5 463.9v2M1615.5 463.2v3M1616.5 463.8v3M1617.5 463.9v1.5M1618.5 463.5v1.5M1620.5 463.2v2M1621.5 463.4v2M1622.5 463.4v4M1623.5 463.2v4M1624.5 463.2v2M1625.5 463.1v4M1626.5 463.7v2.5M1628.5 463.5v3M1630.5 463.2v2M1631.5 463.5v4M1632.5 463.7v4M1633.5 463.5v1.5M1634.5 463.4v1.5M1636.5 463.7v1.5M1637.5 463.1v4M1638.5 463.5v1.5M1639.5 463.0v1.5M1640.5 463.0v4M1641.5 463.8v1.5M1642.5 463.7v3M1643.5 463.3v2M1644.5 463.7v2M1645.5 463.5v4M1646.5 463.6v3M1647.5 463.5v4M1648.5 463.3v1.5M1649.5 463.0v1.5M1650.5 463.7v4M1651.5 463.1v1.5M1652.5 463.6v2.5M1653.5 463.0v2.5M1654.5 463.7v3M1658.5 463.3v4M1659.5 463.7v3M1660.5 463.2v4M1661.5 463.4v2.5M1662.5 463.2v3M1663.5 463.6v4M1664.5 463.0v2M1665.5 463.0v1.5M1666.5 463.5v2M1667.5 463.4v1.5M1668.5 463.4v3M1669.5 463.5v2.5M1670.5 463.1v1.5M1671.5 463.1v3M1672.5 463.5v2M1674.5 463.6v4M1675.5 463.1v4M1677.5 462.9v3M1678.5 462.9v3M1680.5 463.5v4M1681.5 463.3v2M1682.5 463.2v2.5M1683.5 462.9v4M1686.5 463.3v3M1687.5 463.3v2M1688.5 462.8v4M1689.5 463.0v2.5M1690.5 462.9v4M1691.5 463.2v3M1692.5 463.5v2.5M1693.5 463.3v4M1694.5 463.5v4M1695.5 462.9v3M1696.5 463.0v1.5M1698.5 463.1v3M1700.5 463.5v1.5M1701.5 463.3v4M1703.5 462.9v1.5M1704.5 463.3v4M1705.5 463.0v2M1706.5 463.3v4M1707.5 463.3v1.5M1709.5 463.0v4M1710.5 463.2v2.5M1711.5 463.0v4M1712.5 463.4v2.5M1713.5 463.2v2M1714.5 462.9v2.5M1715.5 463.4v4M1716.5 463.4v4M1717.5 462.8v3M1718.5 462.9v1.5M1723.5 462.8v4M1724.5 463.1v2.5M1725.5 463.4v2M1727.5 462.9v4M1728.5 463.0v3M1729.5 462.7v2.5M1730.5 463.3v1.5M1731.5 463.1v2.5M1732.5 463.1v2.5M1734.5 462.6v1.5M1735.5 463.0v4M1736.5 462.7v2M1737.5 462.7v1.5M1739.5 463.3v3M1740.5 462.7v2.5M1741.5 462.7v1.5M1742.5 463.2v2M1743.5 462.6v2.5M1745.5 462.9v4M1746.5 463.3v2.5M1747.5 462.8v2.5M1748.5 463.2v2M1749.5 463.2v3M1752.5 463.0v2.5M1754.5 463.2v1.5M1755.5 463.2v2M1756.5 462.7v3M1757.5 462.8v2M1758.5 463.3v1.5M1759.5 462.8v3M1760.5 463.2v2M1762.5 462.8v3M1763.5 462.8v3M1764.5 463.2v4M1765.5 462.8v1.5M1766.5 463.3v2.5M1768.5 462.9v2.5M1769.5 463.0v2.5M1770.5 463.5v2M1771.5 463.0v1.5M1774.5 463.1v2.5M1775.5 463.6v3M1777.5 463.3v2M1778.5 463.5v4M1779.5 463.0v3M1780.5 463.1v3M1782.5 463.5v2.5M1783.5 463.2v2M1785.5 463.7v2.5M1786.5 463.1v1.5M1787.5 463.5v2M1788.5 463.2v4M1790.5 463.5v2.5M1792.5 463.1v4M1793.5 463.2v3M1794.5 463.2v3M1795.5 463.3v4M1796.5 463.5v1.5M1798.5 463.7v4M1799.5 463.4v3M1800.5 463.9v2M1801.5 463.6v4M1803.5 463.7v3M1805.5 463.5v1.5M1806.5 464.0v4M1807.5 463.7v2.5M1808.5 463.7v2.5M1809.5 463.9v2M1810.5 463.7v3M1813.5 463.9v4M1816.5 463.8v4M1817.5 463.9v2M1818.5 464.1v2M1820.5 463.8v4M1821.5 464.1v3M1823.5 463.6v2M1824.5 464.0v2.5M1825.5 463.6v4M1826.5 464.1v2M1828.5 464.1v2.5M1829.5 464.3v1.5M1830.5 463.8v3M1832.5 464.2v2.5M1833.5 464.2v2.5M1836.5 463.9v4M1837.5 463.8v4M1838.5 464.0v3M1839.5 463.8v2.5M1840.5 464.2v1.5M1841.5 464.4v4M1843.5 464.1v4M1846.5 464.3v4M1847.5 463.9v2.5M1848.5 464.6v2M1849.5 463.9v2M1850.5 463.9v3M1851.5 464.1v1.5M1853.5 464.6v1.5M1854.5 464.0v4M1855.5 464.5v4M1856.5 464.1v2M1857.5 464.0v1.5M1859.5 464.6v2.5M1860.5 464.1v2M1861.5 464.4v1.5M1862.5 464.2v2.5M1863.5 464.7v2.5M1864.5 464.8v2.5M1865.5 464.2v2.5M1866.5 464.5v1.5M1868.5 464.6v3M1869.5 464.8v2M1870.5 464.5v2.5M1871.5 464.2v4M1874.5 464.4v4M1875.5 464.3v2.5M1876.5 464.4v2.5M1877.5 464.3v4M1878.5 464.7v3M1879.5 465.0v3M1885.5 464.8v4M1886.5 464.4v2M1887.5 464.8v4M1888.5 465.1v1.5M1889.5 465.1v1.5M1890.5 465.2v2.5M1891.5 464.7v3M1892.5 464.9v2.5M1894.5 465.1v4M1896.5 464.9v1.5M1898.5 464.8v2M1901.5 465.2v4M1902.5 465.3v2M1903.5 465.4v2M1904.5 464.7v4M1906.5 465.0v2.5M1908.5 465.2v1.5M1910.5 464.9v3M1911.5 465.4v3M1913.5 465.7v3M1915.5 465.3v4M1916.5 465.3v3M1917.5 465.2v2.5M1918.5 465.8v4M1919.5 465.3v2.5M1920.5 465.8v1.5M1922.5 465.9v1.5M1923.5 465.6v3M1924.5 465.4v4M1926.5 465.6v2.5M1927.5 465.5v1.5M1928.5 465.8v2.5M1930.5 465.9v4M1931.5 466.2v2M1932.5 465.9v4M1933.5 466.3v1.5M1934.5 466.1v1.5M1935.5 466.0v2M1936.5 466.1v1.5M1937.5 466.3v3M1938.5 466.2v1.5M1939.5 466.1v4M1941.5 466.3v4M1942.5 465.8v2M1943.5 466.1v2.5M1944.5 465.9v1.5M1945.5 466.5v3M1946.5 466.4v3M1947.5 466.3v3M1948.5 466.1v1.5M1949.5 466.4v3M1950.5 466.8v4M1951.5 466.8v2.5M1952.5 466.3v4M1954.5 466.5v3M1955.5 466.4v2.5M1956.5 466.3v2M1957.5 466.8v2M1959.5 466.6v1.5M1961.5 466.5v4M1962.5 466.9v3M1963.5 467.2v1.5M1965.5 466.7v2M1966.5 466.8v4M1967.5 466.7v2.5M1968.5 467.0v4M1969.5 466.8v3M1970.5 466.9v3M1971.5 467.3v1.5M1972.5 466.8v2.5M1974.5 466.9v2M1975.5 467.2v4M1978.5 467.2v2M1979.5 467.4v2M1980.5 467.1v2M1982.5 467.5v2.5M1983.5 467.8v4M1986.5 467.2v2.5M1987.5 467.9v2M1988.5 468.0v2.5M1989.5 467.6v2.5M1990.5 467.4v2M1991.5 467.5v1.5M1992.5 467.8v2.5M1993.5 467.7v1.5M1994.5 468.1v1.5M1995.5 467.8v2M1996.5 467.6v3M1998.5 468.0v4M2000.5 468.0v4M2002.5 468.1v2M2003.5 467.7v2.5M2006.5 468.3v2.5M2007.5 468.2v4M2008.5 468.2v2.5M2010.5 468.4v4M2011.5 468.2v4M2012.5 468.4v2.5M2013.5 468.8v1.5M2015.5 468.4v1.5M2016.5 468.4v4M2017.5 468.4v1.5M2018.5 468.2v2.5M2019.5 468.3v2.5M2022.5 468.9v1.5M2023.5 468.4v4M2024.5 468.5v1.5M2025.5 468.5v1.5M2026.5 468.7v3M2027.5 468.8v3M2029.5 468.7v4M2030.5 469.0v1.5M2031.5 469.3v2.5M2032.5 468.9v4M2033.5 468.8v3M2034.5 469.1v3M2036.5 469.2v2.5M2037.5 469.4v2M2038.5 469.0v2M2039.5 469.0v2M2040.5 469.3v2M2041.5 469.3v1.5M2042.5 469.2v4M2043.5 469.5v2.5M2044.5 469.7v2M2045.5 469.1v1.5M2046.5 469.5v4M2047.5 469.2v3M2048.5 469.9v4M2049.5 469.4v2.5M2050.5 469.9v1.5M2051.5 469.3v4M2052.5 469.3v2.5M2053.5 469.6v3M2054.5 469.5v1.5M2055.5 469.6v4M2056.5 469.8v1.5M2057.5 469.5v1.5M2058.5 470.1v1.5M2059.5 470.2v2.5M2061.5 469.9v2M2062.5 470.0v2M2064.5 469.9v4M2065.5 469.8v3M2066.5 470.0v2.5M2067.5 470.1v3M2068.5 470.0v1.5M2069.5 470.7v1.5M2071.5 470.2v2.5M2072.5 470.5v4M2074.5 470.8v3M2075.5 470.5v3M2077.5 470.6v3M2078.5 471.0v2.5M2079.5 470.6v4M2080.5 471.1v2M2081.5 471.2v2M2082.5 470.8v2.5M2083.5 471.5v4M2084.5 471.3v1.5M2085.5 471.1v4M2086.5 471.0v1.5M2088.5 471.1v4M2089.5 471.1v4M2090.5 471.4v2.5M2091.5 471.3v1.5M2092.5 471.6v1.5M2093.5 471.9v2.5M2094.5 472.1v2.5M2095.5 472.0v4M2097.5 471.9v4M2098.5 471.6v2M2100.5 472.1v1.5M2101.5 472.5v2M2102.5 472.2v3M2104.5 472.6v3M2105.5 472.3v2.5M2106.5 472.1v3M2107.5 472.5v2.5M2108.5 472.6v3M2110.5 472.9v2M2111.5 473.1v3M2112.5 472.7v2M2113.5 472.5v3M2115.5 473.1v3M2116.5 472.8v4M2117.5 473.1v1.5M2118.5 472.9v4M2120.5 473.2v1.5M2123.5 473.6v3M2124.5 473.2v1.5M2125.5 473.5v3M2126.5 473.4v2M2127.5 473.9v3M2130.5 473.9v3M2131.5 473.6v2M2134.5 474.0v4M2135.5 474.0v2.5M2137.5 473.9v1.5M2138.5 473.8v2.5M2139.5 473.8v4M2142.5 474.7v1.5M2143.5 474.8v3M2144.5 474.3v2M2145.5 474.2v2.5M2146.5 474.6v2.5M2147.5 474.9v2M2148.5 474.9v1.5M2149.5 474.4v4M2151.5 474.9v2M2152.5 475.2v3M2153.5 475.1v3M2154.5 475.1v4M2155.5 475.1v3M2156.5 474.9v2M2160.5 475.3v4M2161.5 475.5v1.5M2163.5 475.9v4M2164.5 475.9v2.5M2165.5 475.9v2.5M2166.5 475.7v2M2167.5 475.7v1.5M2169.5 475.7v4M2170.5 476.0v2.5M2171.5 476.2v2M2173.5 476.3v2.5M2174.5 476.3v3M2175.5 476.0v1.5M2176.5 476.2v2.5M2177.5 476.4v1.5M2178.5 476.7v2M2179.5 476.5v4M2180.5 476.6v2.5M2181.5 476.6v2M2182.5 476.7v3M2185.5 476.5v1.5M2186.5 476.6v1.5M2187.5 476.5v3M2188.5 476.4v1.5M2189.5 476.4v2.5M2190.5 476.3v1.5M2191.5 476.9v2M2192.5 476.2v2M2194.5 476.3v4M2195.5 476.4v1.5M2196.5 476.8v1.5M2197.5 476.4v1.5M2199.5 477.0v4M2200.5 476.5v3M2202.5 476.6v1.5M2204.5 476.6v2.5M2205.5 477.1v3M2206.5 476.8v2.5M2207.5 476.6v3M2208.5 477.2v4M2209.5 476.5v4M2210.5 477.1v2.5M2211.5 476.5v2" stroke="#3c0004" stroke-width="1.1" opacity="0.85"/>
<path d="M37.5 464.5v2M40.5 465.0v2M47.5 465.1v1M51.5 464.6v2M52.5 464.0v2M55.5 464.8v3M57.5 464.1v2M59.5 464.4v2M61.5 464.8v2M67.5 464.2v2M68.5 465.2v3M71.5 463.9v3M72.5 465.6v2M75.5 466.0v3M77.5 464.5v2M81.5 465.7v3M89.5 465.0v2M90.5 464.8v2M93.5 465.8v2M103.5 467.4v1M104.5 466.1v3M105.5 465.8v1M108.5 465.9v2M109.5 466.1v2M111.5 466.1v1M116.5 467.8v2M119.5 465.6v2M122.5 467.4v3M124.5 466.5v2M131.5 465.8v3M136.5 468.3v3M141.5 465.8v2M142.5 466.1v1M150.5 465.7v2M151.5 467.3v2M153.5 468.3v3M154.5 468.2v3M157.5 466.3v2M158.5 466.6v2M160.5 467.2v3M163.5 468.1v2M164.5 466.6v3M167.5 466.1v2M169.5 466.3v1M175.5 466.6v2M176.5 466.6v2M178.5 466.6v2M181.5 467.9v1M183.5 468.5v1M191.5 468.5v2M192.5 467.2v1M194.5 468.1v3M196.5 467.9v2M198.5 468.0v2M199.5 467.7v3M202.5 468.5v2M204.5 467.0v2M205.5 467.9v1M207.5 468.2v1M213.5 467.7v3M214.5 467.8v1M215.5 468.2v1M221.5 468.4v2M223.5 469.1v2M229.5 467.1v2M231.5 467.3v1M233.5 466.5v2M238.5 466.9v2M240.5 467.2v2M244.5 467.1v3M247.5 468.4v1M248.5 468.6v3M249.5 468.8v2M252.5 467.4v2M253.5 467.2v1M255.5 468.1v2M256.5 469.4v2M259.5 467.0v1M262.5 467.9v1M263.5 468.3v3M266.5 467.9v1M267.5 467.4v3M272.5 469.2v3M273.5 468.3v1M274.5 468.4v3M280.5 468.2v2M287.5 470.5v1M288.5 467.6v2M291.5 469.3v3M294.5 467.7v3M297.5 468.9v2M299.5 467.2v2M301.5 467.1v1M309.5 467.9v2M312.5 467.9v2M313.5 469.0v2M320.5 468.5v1M321.5 468.1v2M325.5 467.2v2M326.5 468.5v2M331.5 467.8v2M334.5 469.2v2M335.5 467.5v1M339.5 468.8v2M344.5 469.1v2M348.5 468.2v2M350.5 468.3v1M351.5 468.5v3M353.5 468.2v2M355.5 467.7v2M356.5 467.4v2M357.5 470.2v3M359.5 467.3v2M360.5 468.4v1M362.5 468.6v3M369.5 467.2v1M372.5 468.8v2M376.5 467.0v2M378.5 466.3v2M381.5 466.5v2M382.5 467.4v2M383.5 468.0v2M388.5 467.5v3M393.5 468.4v2M396.5 468.0v1M410.5 467.2v2M414.5 468.0v2M415.5 465.7v2M418.5 466.3v3M421.5 467.9v2M427.5 469.2v2M431.5 466.5v2M433.5 466.4v3M437.5 467.7v2M438.5 467.9v2M440.5 467.7v3M441.5 469.0v2M442.5 466.4v3M443.5 466.9v1M447.5 465.6v1M450.5 467.0v3M451.5 466.1v2M461.5 465.2v2M463.5 466.5v3M465.5 467.0v1M467.5 466.2v2M469.5 468.8v2M474.5 467.7v1M477.5 465.1v3M479.5 466.7v2M480.5 465.6v2M481.5 468.6v2M483.5 465.8v3M484.5 467.4v2M488.5 465.6v1M489.5 468.0v2M497.5 465.4v2M501.5 464.5v1M503.5 465.1v2M504.5 465.5v2M519.5 465.5v1M524.5 464.8v2M526.5 465.2v3M529.5 466.2v2M532.5 465.5v3M535.5 465.1v2M543.5 465.2v2M545.5 464.3v2M554.5 464.2v3M557.5 466.5v2M561.5 464.4v2M563.5 466.7v2M565.5 464.9v3M566.5 464.5v2M569.5 464.8v1M571.5 464.5v2M574.5 464.6v3M576.5 465.7v1M577.5 464.8v2M578.5 465.2v2M580.5 466.6v1M586.5 466.1v1M594.5 465.4v1M595.5 464.2v2M596.5 466.3v2M601.5 467.7v3M605.5 465.3v2M609.5 464.7v3M611.5 463.6v2M620.5 464.5v1M622.5 466.8v3M623.5 465.2v2M626.5 465.4v2M628.5 464.1v2M631.5 465.0v3M637.5 464.6v2M638.5 465.5v3M640.5 465.8v3M641.5 464.5v2M642.5 464.1v3M646.5 467.3v1M649.5 464.9v2M650.5 464.9v2M652.5 465.6v1M653.5 466.7v1M655.5 464.6v2M657.5 463.5v1M659.5 463.6v2M662.5 465.2v3M665.5 466.1v2M666.5 465.1v2M674.5 466.3v3M675.5 465.0v2M679.5 464.6v3M680.5 465.9v3M682.5 466.6v3M688.5 465.8v3M692.5 465.5v3M693.5 463.8v3M694.5 464.4v3M696.5 464.3v2M699.5 464.0v1M701.5 466.5v3M702.5 464.8v2M704.5 463.3v2M706.5 465.1v3M708.5 464.4v1M710.5 463.5v3M716.5 463.3v2M719.5 462.8v2M723.5 464.3v1M730.5 464.3v1M731.5 463.2v2M733.5 463.6v2M734.5 466.2v1M735.5 466.3v2M739.5 463.6v2M744.5 464.1v2M745.5 465.7v2M749.5 464.5v3M754.5 464.6v3M757.5 467.4v1M760.5 465.9v2M761.5 465.5v1M763.5 465.0v2M767.5 466.3v1M768.5 464.7v2M782.5 465.1v3M783.5 464.8v2M784.5 464.9v3M787.5 464.6v2M792.5 463.5v3M793.5 465.1v3M795.5 465.3v2M797.5 465.4v2M798.5 465.0v2M799.5 465.7v3M802.5 463.2v1M804.5 463.9v3M808.5 463.7v2M809.5 464.2v1M811.5 465.4v2M813.5 463.7v2M814.5 464.3v2M816.5 464.5v1M821.5 464.6v1M823.5 464.3v2M825.5 466.5v2M830.5 463.8v2M833.5 464.9v3M834.5 464.6v1M836.5 464.6v3M843.5 468.2v1M846.5 465.4v2M848.5 465.9v1M851.5 467.8v3M852.5 464.3v2M853.5 465.5v3M858.5 464.7v2M865.5 465.5v2M872.5 464.5v3M874.5 464.3v3M875.5 465.2v1M878.5 467.7v1M879.5 465.6v1M880.5 467.1v1M881.5 465.5v2M884.5 465.8v3M886.5 466.2v1M890.5 466.1v2M896.5 465.8v1M908.5 465.0v2M913.5 465.2v3M915.5 465.4v2M916.5 465.5v2M917.5 465.3v2M919.5 465.0v1M920.5 464.1v2M921.5 465.7v3M923.5 467.1v2M924.5 468.0v2M925.5 465.9v2M929.5 465.6v2M930.5 465.0v3M932.5 465.5v1M936.5 466.8v3M937.5 465.4v2M938.5 464.6v2M940.5 465.8v2M942.5 465.5v1M943.5 466.5v3M945.5 467.4v3M948.5 464.4v2M949.5 466.1v3M951.5 464.9v2M953.5 466.2v1M956.5 465.7v1M959.5 465.7v1M960.5 464.7v2M961.5 464.9v2M964.5 466.8v2M967.5 465.1v1M968.5 467.2v2M969.5 467.9v2M974.5 466.4v2M976.5 465.4v3M977.5 466.6v3M983.5 465.2v1M987.5 466.0v3M989.5 466.1v2M992.5 468.9v2M995.5 466.2v2M996.5 465.9v3M1001.5 465.9v3M1002.5 465.3v2M1004.5 465.1v1M1005.5 466.4v2M1008.5 465.2v2M1017.5 465.5v1M1023.5 467.7v2M1027.5 466.5v3M1030.5 465.9v2M1031.5 467.2v3M1034.5 466.1v3M1035.5 466.1v2M1041.5 465.8v2M1047.5 467.3v2M1048.5 466.1v2M1051.5 467.1v2M1052.5 465.9v3M1058.5 466.7v1M1063.5 467.7v2M1064.5 468.1v3M1066.5 467.9v3M1067.5 467.5v3M1068.5 466.2v2M1070.5 468.1v1M1072.5 468.6v1M1074.5 466.7v2M1075.5 468.8v3M1078.5 469.6v2M1082.5 468.4v1M1083.5 466.8v1M1085.5 467.9v2M1086.5 468.7v1M1087.5 469.6v1M1089.5 467.5v2M1090.5 469.5v1M1094.5 467.5v3M1095.5 470.5v2M1098.5 471.1v1M1099.5 468.1v2M1100.5 467.7v2M1101.5 467.2v3M1102.5 470.4v2M1103.5 467.4v3M1104.5 468.2v2M1105.5 468.8v2M1107.5 470.8v1M1109.5 469.8v1M1112.5 471.6v2M1113.5 467.1v1M1115.5 467.3v2M1116.5 468.7v2M1117.5 467.2v1M1120.5 469.3v3M1121.5 472.2v2M1122.5 469.0v2M1125.5 467.8v2M1126.5 469.3v2M1127.5 469.5v2M1129.5 469.7v2M1130.5 470.9v2M1131.5 470.2v2M1132.5 470.3v2M1136.5 469.0v1M1139.5 470.3v3M1140.5 468.2v2M1141.5 470.9v2M1143.5 468.8v1M1144.5 468.6v2M1147.5 468.0v3M1148.5 471.9v2M1149.5 468.9v1M1150.5 467.8v1M1153.5 470.2v1M1155.5 469.7v2M1156.5 471.3v1M1157.5 472.1v1M1158.5 469.9v1M1159.5 468.8v3M1160.5 469.2v3M1161.5 469.9v2M1162.5 467.6v2M1163.5 468.4v3M1164.5 467.6v2M1167.5 468.5v2M1170.5 471.5v2M1171.5 469.4v2M1173.5 467.4v1M1175.5 469.4v1M1176.5 470.4v2M1178.5 468.0v2M1179.5 470.3v1M1180.5 469.0v2M1182.5 470.4v1M1183.5 469.5v2M1184.5 468.7v2M1185.5 467.1v2M1188.5 468.7v3M1189.5 469.5v3M1190.5 468.7v1M1191.5 467.3v3M1192.5 468.9v2M1193.5 470.4v2M1195.5 468.6v1M1197.5 470.5v2M1200.5 469.7v1M1201.5 467.5v2M1205.5 467.8v3M1208.5 470.1v3M1209.5 469.6v2M1210.5 469.7v2M1211.5 469.0v2M1215.5 472.4v2M1216.5 469.7v1M1218.5 468.0v2M1221.5 471.9v2M1222.5 468.7v3M1223.5 467.1v2M1224.5 467.1v1M1225.5 468.4v1M1226.5 467.1v2M1227.5 470.6v2M1229.5 467.7v3M1230.5 470.6v2M1231.5 469.4v2M1232.5 469.9v2M1233.5 467.7v3M1235.5 466.8v2M1237.5 470.8v2M1239.5 469.0v1M1242.5 471.6v2M1243.5 468.1v1M1244.5 469.8v2M1246.5 467.9v2M1247.5 467.2v1M1251.5 466.7v1M1253.5 467.6v3M1255.5 469.4v2M1256.5 467.2v3M1258.5 468.4v2M1259.5 471.9v2M1262.5 470.4v2M1265.5 467.2v3M1266.5 466.6v2M1270.5 469.1v2M1273.5 466.7v2M1274.5 472.1v2M1275.5 467.2v3M1276.5 466.3v3M1279.5 470.3v1M1280.5 468.9v3M1283.5 467.2v2M1284.5 467.3v3M1285.5 468.2v2M1286.5 469.5v1M1288.5 466.8v2M1289.5 469.8v3M1290.5 469.1v1M1291.5 467.2v1M1294.5 468.7v2M1295.5 466.7v1M1297.5 467.0v3M1299.5 467.4v3M1300.5 466.8v1M1302.5 467.9v1M1304.5 469.3v2M1305.5 467.1v1M1306.5 466.1v2M1307.5 466.1v2M1308.5 470.9v3M1309.5 469.5v2M1310.5 469.1v2M1311.5 468.2v3M1312.5 468.8v1M1315.5 471.4v1M1317.5 466.2v2M1318.5 471.0v2M1319.5 469.4v2M1321.5 468.1v2M1322.5 466.3v1M1323.5 465.9v1M1325.5 467.4v1M1327.5 467.4v1M1328.5 466.9v2M1331.5 467.8v1M1332.5 467.8v1M1333.5 468.9v2M1335.5 468.3v1M1336.5 468.8v2M1337.5 469.7v1M1338.5 470.6v3M1345.5 466.8v2M1348.5 469.5v1M1349.5 466.3v2M1351.5 467.2v2M1356.5 470.1v1M1362.5 468.1v2M1363.5 467.4v2M1367.5 469.3v1M1368.5 467.6v2M1371.5 469.5v2M1372.5 467.4v2M1373.5 469.3v2M1375.5 469.6v2M1376.5 468.6v2M1377.5 467.0v1M1378.5 465.8v3M1381.5 466.6v1M1386.5 470.0v2M1387.5 467.8v2M1389.5 468.1v2M1392.5 468.8v2M1394.5 467.2v2M1395.5 468.1v3M1397.5 470.9v2M1400.5 467.0v1M1401.5 467.7v1M1403.5 466.3v3M1405.5 468.7v2M1406.5 466.3v2M1407.5 469.2v3M1409.5 468.0v2M1412.5 466.5v2M1415.5 470.0v2M1416.5 466.6v2M1418.5 467.7v2M1419.5 466.6v2M1420.5 467.0v2M1422.5 469.7v2M1424.5 468.5v2M1425.5 470.2v2M1426.5 467.7v2M1427.5 468.1v1M1428.5 466.4v3M1429.5 467.0v1M1430.5 468.4v1M1432.5 469.1v2M1434.5 469.7v2M1435.5 466.6v3M1436.5 467.6v2M1437.5 467.6v1M1439.5 469.3v2M1441.5 469.7v2M1442.5 465.8v2M1449.5 468.8v3M1451.5 466.6v3M1452.5 467.9v2M1453.5 467.8v2M1456.5 465.7v1M1457.5 471.1v2M1458.5 469.2v2M1461.5 469.7v2M1462.5 470.6v1M1464.5 466.4v2M1465.5 468.4v3M1469.5 466.6v2M1471.5 467.4v2M1472.5 470.9v1M1473.5 468.5v2M1474.5 469.0v1M1475.5 466.0v3M1476.5 467.3v3M1477.5 467.3v2M1479.5 469.1v2M1481.5 467.3v1M1482.5 468.8v2M1483.5 470.1v1M1484.5 466.8v1M1486.5 466.4v2M1487.5 469.0v2M1488.5 466.4v1M1489.5 468.4v1M1490.5 468.1v3M1491.5 466.2v3M1492.5 467.9v2M1493.5 467.8v2M1494.5 467.5v2M1497.5 467.8v2M1498.5 466.1v2M1501.5 466.9v2M1502.5 468.6v2M1503.5 466.6v1M1504.5 470.7v2M1506.5 466.7v1M1511.5 468.2v3M1512.5 469.5v3M1513.5 466.5v2M1518.5 468.0v2M1519.5 466.9v3M1520.5 466.2v1M1522.5 467.5v2M1523.5 466.8v2M1524.5 468.7v2M1525.5 465.9v1M1527.5 470.1v1M1528.5 468.7v2M1529.5 468.2v1M1533.5 469.2v2M1534.5 470.4v2M1535.5 468.3v3M1538.5 466.0v1M1539.5 469.4v2M1540.5 467.0v2M1541.5 468.6v2M1542.5 467.5v1M1543.5 467.9v2M1544.5 466.9v2M1546.5 468.8v1M1547.5 466.5v2M1549.5 467.0v2M1551.5 468.0v2M1552.5 467.0v3M1554.5 466.4v1M1556.5 466.0v2M1557.5 466.2v2M1558.5 466.3v2M1559.5 468.3v3M1562.5 469.8v2M1567.5 468.1v2M1568.5 468.0v2M1569.5 467.4v2M1571.5 467.0v2M1572.5 466.4v2M1573.5 467.5v1M1578.5 467.0v3M1579.5 466.5v2M1580.5 468.3v2M1584.5 469.7v1M1586.5 469.6v2M1587.5 466.4v2M1588.5 468.2v2M1591.5 468.3v3M1593.5 467.0v2M1594.5 469.7v2M1597.5 466.7v2M1598.5 469.4v3M1600.5 468.7v2M1601.5 470.3v2M1604.5 469.1v3M1605.5 466.3v3M1607.5 469.9v2M1608.5 465.8v2M1610.5 469.0v2M1611.5 465.5v3M1614.5 469.0v2M1615.5 467.2v2M1616.5 467.1v2M1617.5 468.7v1M1619.5 468.4v3M1620.5 465.6v2M1621.5 470.6v2M1622.5 466.1v2M1623.5 466.8v3M1625.5 467.1v1M1628.5 467.0v2M1629.5 466.1v3M1630.5 467.2v3M1631.5 466.7v1M1633.5 469.5v3M1634.5 466.8v2M1636.5 468.4v2M1639.5 465.4v3M1640.5 468.4v2M1643.5 467.0v3M1645.5 467.6v3M1649.5 466.2v3M1650.5 469.6v3M1651.5 465.5v2M1652.5 467.7v2M1653.5 468.5v1M1654.5 466.7v3M1656.5 468.4v2M1658.5 466.4v2M1659.5 467.6v2M1660.5 470.6v1M1662.5 466.4v3M1663.5 468.5v1M1664.5 469.0v2M1668.5 466.5v1M1669.5 466.7v1M1671.5 469.8v3M1672.5 465.8v2M1677.5 467.1v2M1679.5 466.5v3M1680.5 466.7v1M1684.5 465.7v1M1685.5 467.3v3M1686.5 466.2v1M1687.5 467.1v2M1688.5 465.5v2M1691.5 468.7v2M1692.5 469.7v2M1694.5 467.0v2M1697.5 467.5v2M1699.5 466.2v1M1702.5 465.7v1M1703.5 467.7v1M1704.5 467.9v1M1709.5 465.9v2M1710.5 468.8v1M1711.5 466.8v2M1712.5 466.5v3M1713.5 465.4v3M1715.5 465.5v1M1716.5 467.4v2M1718.5 466.3v1M1719.5 468.0v1M1723.5 466.3v2M1724.5 465.9v1M1725.5 466.0v3M1726.5 467.8v2M1728.5 465.7v2M1731.5 466.2v2M1732.5 465.2v2M1733.5 466.5v2M1739.5 470.9v3M1742.5 466.7v2M1743.5 466.5v1M1747.5 466.2v1M1748.5 468.4v3M1749.5 467.7v2M1752.5 468.6v3M1755.5 466.0v1M1757.5 465.3v2M1760.5 469.0v2M1761.5 466.1v3M1762.5 466.5v2M1764.5 467.5v2M1765.5 469.2v2M1766.5 470.1v2M1767.5 466.0v3M1770.5 465.9v2M1774.5 466.9v3M1775.5 467.3v1M1776.5 469.3v3M1781.5 465.2v2M1782.5 470.4v1M1783.5 467.7v3M1784.5 468.7v2M1787.5 467.2v2M1788.5 466.1v3M1789.5 470.2v2M1791.5 468.1v3M1792.5 466.5v2M1794.5 467.7v2M1795.5 467.2v1M1796.5 468.6v3M1798.5 466.8v2M1799.5 466.4v1M1800.5 468.7v3M1803.5 470.4v3M1806.5 469.3v3M1808.5 467.9v3M1810.5 469.1v1M1811.5 469.6v1M1813.5 467.8v3M1816.5 471.3v1M1820.5 468.4v3M1821.5 467.3v2M1822.5 467.6v3M1827.5 468.6v3M1828.5 466.8v1M1830.5 466.8v2M1832.5 469.5v2M1835.5 467.0v3M1837.5 465.9v1M1838.5 470.8v1M1839.5 470.3v2M1840.5 467.1v3M1841.5 471.3v3M1842.5 466.4v2M1844.5 470.1v2M1845.5 469.8v3M1851.5 470.3v3M1852.5 468.2v1M1853.5 468.8v2M1854.5 467.9v2M1855.5 469.6v2M1856.5 469.5v2M1857.5 469.5v1M1863.5 468.3v3M1864.5 468.6v2M1865.5 468.3v2M1866.5 467.7v2M1867.5 467.0v2M1868.5 468.8v3M1869.5 467.9v3M1870.5 471.4v2M1871.5 472.2v3M1872.5 469.9v3M1875.5 468.6v1M1876.5 471.1v2M1881.5 469.0v2M1882.5 468.6v1M1886.5 467.1v2M1888.5 468.2v1M1889.5 470.4v1M1890.5 470.0v2M1891.5 471.1v2M1894.5 470.5v3M1896.5 470.9v2M1897.5 472.5v2M1898.5 470.3v3M1902.5 472.1v3M1904.5 467.9v2M1905.5 469.0v2M1912.5 469.9v1M1914.5 471.6v1M1916.5 468.1v2M1917.5 469.9v2M1918.5 471.9v2M1920.5 469.1v2M1923.5 470.0v1M1925.5 471.9v2M1929.5 468.0v3M1930.5 469.9v3M1932.5 471.1v2M1933.5 471.0v2M1938.5 469.7v3M1940.5 471.0v2M1941.5 472.5v1M1943.5 468.6v1M1944.5 472.9v2M1945.5 474.6v3M1946.5 471.8v2M1947.5 472.8v3M1948.5 470.2v2M1949.5 474.1v3M1950.5 471.0v1M1951.5 471.3v2M1952.5 471.3v1M1956.5 468.7v3M1958.5 474.4v3M1959.5 474.1v2M1961.5 468.6v2M1963.5 473.1v1M1964.5 469.1v1M1965.5 473.7v2M1966.5 469.6v2M1967.5 472.5v1M1968.5 472.2v1M1969.5 469.0v1M1970.5 475.4v1M1973.5 473.0v1M1975.5 470.3v2M1977.5 474.0v1M1978.5 469.5v1M1981.5 469.9v1M1982.5 472.0v2M1983.5 475.1v1M1987.5 473.7v1M1988.5 471.4v2M1990.5 471.2v1M1998.5 474.1v2M1999.5 472.8v2M2001.5 477.2v1M2003.5 470.6v3M2006.5 473.2v2M2008.5 477.6v2M2009.5 474.7v1M2010.5 474.6v1M2011.5 472.4v3M2012.5 475.2v3M2014.5 472.7v2M2016.5 475.5v1M2017.5 474.1v2M2018.5 471.9v1M2020.5 474.8v3M2021.5 471.2v2M2022.5 475.9v2M2024.5 473.2v2M2029.5 472.1v2M2030.5 473.0v2M2032.5 471.5v1M2033.5 477.0v1M2036.5 474.7v2M2039.5 476.3v1M2043.5 471.9v1M2046.5 472.3v2M2047.5 472.4v1M2048.5 473.5v2M2051.5 474.8v2M2052.5 476.0v3M2054.5 476.8v1M2055.5 479.0v2M2057.5 475.1v3M2062.5 476.2v1M2065.5 472.1v3M2067.5 476.5v2M2070.5 476.6v2M2071.5 475.9v2M2072.5 480.5v1M2073.5 477.4v1M2074.5 478.4v2M2076.5 478.8v2M2077.5 477.8v1M2078.5 474.3v3M2079.5 474.5v1M2080.5 477.3v2M2082.5 477.3v3M2083.5 479.8v2M2084.5 475.9v2M2085.5 475.5v1M2086.5 477.5v1M2087.5 473.6v2M2092.5 474.1v2M2094.5 475.6v2M2095.5 474.6v2M2097.5 477.3v2M2100.5 476.3v3M2101.5 476.5v2M2102.5 479.7v2M2104.5 476.6v1M2106.5 480.5v2M2107.5 478.6v1M2108.5 480.6v1M2111.5 480.4v1M2112.5 482.4v2M2113.5 477.0v2M2115.5 478.9v3M2119.5 478.5v3M2122.5 478.6v3M2123.5 477.1v2M2124.5 481.3v3M2126.5 480.4v1M2133.5 482.6v1M2136.5 480.0v1M2138.5 480.8v2M2139.5 482.7v1M2143.5 484.9v2M2145.5 479.6v3M2146.5 481.4v2M2149.5 482.3v1M2150.5 481.7v3M2151.5 477.9v2M2152.5 479.7v3M2153.5 481.1v3M2155.5 482.7v2M2157.5 477.7v3M2161.5 484.1v3M2163.5 483.3v1M2165.5 478.3v3M2169.5 484.6v1M2170.5 483.0v2M2173.5 480.8v3M2175.5 484.3v2M2176.5 485.1v1M2177.5 478.9v1M2178.5 480.1v3M2186.5 481.5v3M2188.5 483.2v2M2192.5 481.7v2M2193.5 480.4v1M2196.5 486.2v1M2197.5 483.1v2M2198.5 482.0v2M2199.5 485.9v3M2200.5 480.7v2M2202.5 479.2v1M2203.5 482.2v2M2204.5 482.6v2M2205.5 482.8v3M2206.5 482.0v3M2208.5 480.9v1M2209.5 485.9v1M2210.5 483.9v1M2211.5 483.3v3" stroke="#2a0006" stroke-width="1.1"/>
<polyline points="37,459.5 116,461.8 315,464 515,460.8 717,459 918,460.8 1120,464 1324,462.3 1539,461.8 1752.5,463 1967,417.4 2179,478.5 2212,478.5" fill="none" stroke="#7a6a18" stroke-width="4" opacity="0.6"/>
<polyline points="37,459.5 116,461.8 315,464 515,460.8 717,459 918,460.8 1120,464 1324,462.3 1539,461.8 1752.5,463 1967,417.4 2179,478.5 2212,478.5" fill="none" stroke="#f4d02a" stroke-width="2.8"/>
<circle cx="116" cy="461.8" r="3" fill="#66ee22"/>
<circle cx="315" cy="464" r="3" fill="#66ee22"/>
<circle cx="515" cy="460.8" r="3" fill="#66ee22"/>
<circle cx="717" cy="459" r="3" fill="#66ee22"/>
<circle cx="918" cy="460.8" r="3" fill="#66ee22"/>
<circle cx="1120" cy="464" r="3" fill="#66ee22"/>
<circle cx="1324" cy="462.3" r="3" fill="#66ee22"/>
<circle cx="1539" cy="461.8" r="3" fill="#66ee22"/>
<circle cx="1752.5" cy="463" r="3" fill="#66ee22"/>
<circle cx="1967" cy="417.4" r="3" fill="#66ee22"/>
<circle cx="2179" cy="478.5" r="3" fill="#66ee22"/>
<polyline points="37,229.5 116,231 315,229 515,231 717,230.5 918,230 1120,229.5 1323,231.5 1538,230.5 1752,229.5 1967,229.5 2179,230.5 2212,230" fill="none" stroke="#00b4f0" stroke-width="2.4"/>
<circle cx="116" cy="231" r="2.6" fill="#66ee22"/>
<circle cx="315" cy="229" r="2.6" fill="#66ee22"/>
<circle cx="515" cy="231" r="2.6" fill="#66ee22"/>
<circle cx="717" cy="230.5" r="2.6" fill="#66ee22"/>
<circle cx="918" cy="230" r="2.6" fill="#66ee22"/>
<circle cx="1120" cy="229.5" r="2.6" fill="#66ee22"/>
<circle cx="1323" cy="231.5" r="2.6" fill="#66ee22"/>
<circle cx="1538" cy="230.5" r="2.6" fill="#66ee22"/>
<circle cx="1752" cy="229.5" r="2.6" fill="#66ee22"/>
<circle cx="1967" cy="229.5" r="2.6" fill="#66ee22"/>
<circle cx="2179" cy="230.5" r="2.6" fill="#66ee22"/>
<rect x="7" y="634" width="2225" height="17" fill="#efeff0"/>
<path d="M838 643.5 H868" stroke="#6e6e6e" stroke-width="1.5"/>
<rect x="7" y="658" width="2225" height="727" fill="#ffffff"/>
<path d="M107.5 658 V1385 M207.5 658 V1385 M307.5 658 V1385 M407.5 658 V1385 M507.5 658 V1385 M607.5 658 V1385 M707.5 658 V1385 M807.5 658 V1385 M907.5 658 V1385 M1007.5 658 V1385 M1107.5 658 V1385 M1207.5 658 V1385 M1307.5 658 V1385 M1407.5 658 V1385 M1507.5 658 V1385 M1607.5 658 V1385 M1707.5 658 V1385 M1807.5 658 V1385 M1907.5 658 V1385 M2007.5 658 V1385 M2107.5 658 V1385 M2207.5 658 V1385 M7 685.5 H2232 M7 785.5 H2232 M7 885.5 H2232 M7 985.5 H2232 M7 1085.5 H2232 M7 1185.5 H2232 M7 1285.5 H2232" stroke="#727272" stroke-width="1" stroke-dasharray="5 5"/>
<text x="9.5" y="697" font-size="12" fill="#808080" textLength="63" lengthAdjust="spacingAndGlyphs">5820277.336</text>
<text x="9.5" y="797" font-size="12" fill="#808080" textLength="63" lengthAdjust="spacingAndGlyphs">5819670.362</text>
<text x="9.5" y="897" font-size="12" fill="#808080" textLength="63" lengthAdjust="spacingAndGlyphs">5819063.388</text>
<text x="9.5" y="997" font-size="12" fill="#808080" textLength="63" lengthAdjust="spacingAndGlyphs">5818456.414</text>
<text x="9.5" y="1097" font-size="12" fill="#808080" textLength="63" lengthAdjust="spacingAndGlyphs">5817849.439</text>
<text x="9.5" y="1197" font-size="12" fill="#808080" textLength="63" lengthAdjust="spacingAndGlyphs">5817242.465</text>
<text x="9.5" y="1297" font-size="12" fill="#808080" textLength="63" lengthAdjust="spacingAndGlyphs">5816635.491</text>
<text x="109.5" y="1377" font-size="12" fill="#808080" textLength="56" lengthAdjust="spacingAndGlyphs">445840.961</text>
<text x="209.5" y="1377" font-size="12" fill="#808080" textLength="56" lengthAdjust="spacingAndGlyphs">446447.935</text>
<text x="309.5" y="1377" font-size="12" fill="#808080" textLength="56" lengthAdjust="spacingAndGlyphs">447054.909</text>
<text x="409.5" y="1377" font-size="12" fill="#808080" textLength="56" lengthAdjust="spacingAndGlyphs">447661.884</text>
<text x="509.5" y="1377" font-size="12" fill="#808080" textLength="56" lengthAdjust="spacingAndGlyphs">448268.858</text>
<text x="609.5" y="1377" font-size="12" fill="#808080" textLength="56" lengthAdjust="spacingAndGlyphs">448875.832</text>
<text x="709.5" y="1377" font-size="12" fill="#808080" textLength="56" lengthAdjust="spacingAndGlyphs">449482.806</text>
<text x="809.5" y="1377" font-size="12" fill="#808080" textLength="56" lengthAdjust="spacingAndGlyphs">450089.780</text>
<text x="909.5" y="1377" font-size="12" fill="#808080" textLength="56" lengthAdjust="spacingAndGlyphs">450696.754</text>
<text x="1009.5" y="1377" font-size="12" fill="#808080" textLength="56" lengthAdjust="spacingAndGlyphs">451303.728</text>
<text x="1109.5" y="1377" font-size="12" fill="#808080" textLength="56" lengthAdjust="spacingAndGlyphs">451910.702</text>
<text x="1209.5" y="1377" font-size="12" fill="#808080" textLength="56" lengthAdjust="spacingAndGlyphs">452517.676</text>
<text x="1309.5" y="1377" font-size="12" fill="#808080" textLength="56" lengthAdjust="spacingAndGlyphs">453124.651</text>
<text x="1409.5" y="1377" font-size="12" fill="#808080" textLength="56" lengthAdjust="spacingAndGlyphs">453731.625</text>
<text x="1509.5" y="1377" font-size="12" fill="#808080" textLength="56" lengthAdjust="spacingAndGlyphs">454338.599</text>
<text x="1609.5" y="1377" font-size="12" fill="#808080" textLength="56" lengthAdjust="spacingAndGlyphs">454945.573</text>
<text x="1709.5" y="1377" font-size="12" fill="#808080" textLength="56" lengthAdjust="spacingAndGlyphs">455552.547</text>
<text x="1809.5" y="1377" font-size="12" fill="#808080" textLength="56" lengthAdjust="spacingAndGlyphs">456159.521</text>
<text x="1909.5" y="1377" font-size="12" fill="#808080" textLength="56" lengthAdjust="spacingAndGlyphs">456766.495</text>
<text x="2009.5" y="1377" font-size="12" fill="#808080" textLength="56" lengthAdjust="spacingAndGlyphs">457373.469</text>
<text x="2109.5" y="1377" font-size="12" fill="#808080" textLength="56" lengthAdjust="spacingAndGlyphs">457980.444</text>
<svg x="2207.5" y="1360" width="24.5" height="20" overflow="hidden"><text x="2" y="17" font-size="12" fill="#808080" textLength="56" lengthAdjust="spacingAndGlyphs">458587.418</text></svg>
<path d="M17.5 1376 V1335.5 M13 1340.5 L17.5 1335.5 L22 1340.5 M17.5 1375.5 H57.5 M52.5 1371 L57.5 1375.5 L52.5 1380" stroke="#000" stroke-width="1.5" fill="none"/>
<text x="20" y="1337" font-size="11" fill="#000" textLength="7" lengthAdjust="spacingAndGlyphs">N</text>
<text x="59.5" y="1377" font-size="11" fill="#000" textLength="5" lengthAdjust="spacingAndGlyphs">E</text>
<text x="2134" y="1347" font-size="12" fill="#000" textLength="52" lengthAdjust="spacingAndGlyphs">303.487 m</text>
<path d="M2132.5 1355 V1360 H2182.5 V1355" stroke="#000" stroke-width="1.4" fill="none"/>
<path d="M2250 39.5 H2240.5 V195.5 H2546.5 V39.5 H2378" stroke="#c8cbd1" stroke-width="1.2" fill="none"/>
<text x="2251" y="46" font-size="14" fill="#eef0f2" textLength="124" lengthAdjust="spacingAndGlyphs">Настройка графика</text>
<text x="2248.5" y="76" font-size="14" fill="#eef0f2" textLength="77" lengthAdjust="spacingAndGlyphs">Н. прилива:</text>
<text x="2248.5" y="115.5" font-size="14" fill="#eef0f2" textLength="88" lengthAdjust="spacingAndGlyphs">Шаг глубины:</text>
<text x="2424" y="76" font-size="14" fill="#eef0f2" textLength="45" lengthAdjust="spacingAndGlyphs">Время:</text>
<rect x="2344" y="58" width="60" height="25" rx="2" fill="#ffffff"/>
<text x="2348" y="75.0" font-size="13" fill="#111">1.0</text>
<path d="M2391 68.5 L2395 72.5 L2399 68.5" stroke="#555" stroke-width="1" fill="none"/>
<rect x="2475" y="58" width="60" height="25" rx="2" fill="#ffffff"/>
<text x="2479" y="75.0" font-size="13" fill="#111">5c</text>
<path d="M2522 68.5 L2526 72.5 L2530 68.5" stroke="#555" stroke-width="1" fill="none"/>
<rect x="2344" y="97" width="60" height="25" rx="2" fill="#ffffff"/>
<text x="2348" y="114.0" font-size="13" fill="#111">10.0</text>
<path d="M2391 107.5 L2395 111.5 L2399 107.5" stroke="#555" stroke-width="1" fill="none"/>
<path d="M2250 209.5 H2240.5 V520.5 H2546.5 V209.5 H2355" stroke="#c8cbd1" stroke-width="1.2" fill="none"/>
<text x="2251" y="216" font-size="14" fill="#eef0f2" textLength="101" lengthAdjust="spacingAndGlyphs">Выборка глубин</text>
<text x="2252" y="244" font-size="14" fill="#eef0f2" textLength="61" lengthAdjust="spacingAndGlyphs">Выборка:</text>
<text x="2252" y="281" font-size="14" fill="#eef0f2" textLength="68" lengthAdjust="spacingAndGlyphs">Интервал:</text>
<rect x="2339" y="226" width="202" height="25" rx="2" fill="#ffffff"/>
<text x="2343" y="243" font-size="13" fill="#111" textLength="69" lengthAdjust="spacingAndGlyphs">Расстояние</text>
<path d="M2528 236 L2532 240 L2536 236" stroke="#555" stroke-width="1" fill="none"/>
<rect x="2339" y="263" width="155" height="24" rx="2" fill="#ffffff"/>
<text x="2342" y="280" font-size="13" fill="#111">0</text>
<text x="2500" y="282" font-size="14" fill="#eef0f2">m</text>
<rect x="2249" y="302" width="112" height="26" rx="3" fill="#fdfdfd"/>
<text x="2305.0" y="320.0" font-size="14" fill="#111" text-anchor="middle" textLength="87" lengthAdjust="spacingAndGlyphs">Компенсация</text>
<rect x="2249" y="336" width="112" height="26" rx="3" fill="#fdfdfd"/>
<text x="2305.0" y="354.0" font-size="14" fill="#111" text-anchor="middle">3</text>
<rect x="2393" y="316" width="73" height="26" rx="3" fill="#fdfdfd"/>
<text x="2429.5" y="334.0" font-size="14" fill="#111" text-anchor="middle" textLength="56" lengthAdjust="spacingAndGlyphs">Выборка</text>
<rect x="2496" y="316" width="43" height="26" rx="3" fill="#fdfdfd"/>
<text x="2517.5" y="334.0" font-size="14" fill="#111" text-anchor="middle" textLength="18" lengthAdjust="spacingAndGlyphs">htt</text>
<text x="2370" y="333" font-size="14" fill="#eef0f2" textLength="14" lengthAdjust="spacingAndGlyphs">-&gt;</text>
<text x="2474" y="333" font-size="14" fill="#eef0f2" textLength="14" lengthAdjust="spacingAndGlyphs">-&gt;</text>
<text x="2248" y="389" font-size="14" fill="#eef0f2" textLength="225" lengthAdjust="spacingAndGlyphs">первый шум. в указанном порядке</text>
<text x="2248" y="411" font-size="14" fill="#eef0f2" textLength="152" lengthAdjust="spacingAndGlyphs">двойной щелчок здесь.</text>
<path d="M2250 536.5 H2240.5 V1383.5 H2546.5 V536.5 H2400" stroke="#c8cbd1" stroke-width="1.2" fill="none"/>
<text x="2251" y="543" font-size="14" fill="#eef0f2" textLength="146" lengthAdjust="spacingAndGlyphs">Список файлов глубин</text>
<rect x="2243.5" y="548.5" width="300" height="810" fill="#434a58" stroke="#111" stroke-width="1.2"/>
<rect x="2244" y="549" width="299" height="27" fill="#ffffff"/>
<path d="M2274.5 549 V576 M2434.5 549 V576 M2533.5 549 V576" stroke="#e0e0e0" stroke-width="1"/>
<path d="M2256.5 564 L2261 568.5 L2268.5 560" stroke="#000" stroke-width="2.3" fill="none"/>
<text x="2283" y="569" font-size="14" fill="#111" textLength="72" lengthAdjust="spacingAndGlyphs">Имя файла</text>
<text x="2443" y="569" font-size="14" fill="#111" textLength="67" lengthAdjust="spacingAndGlyphs">Состояние</text>
<rect x="2244" y="577" width="299" height="22" fill="#434a58"/>
<path d="M2274.5 577 V599 M2434.5 577 V599 M2533.5 577 V599" stroke="#8a8076" stroke-width="1"/>
<rect x="2254" y="581.5" width="11.5" height="11.5" rx="2" fill="#eeeeee"/>
<text x="2279" y="594" font-size="14" fill="#eef0f2" textLength="146" lengthAdjust="spacingAndGlyphs">HS_L0001_2024-10-0...</text>
<text x="2438" y="594" font-size="14" fill="#eef0f2" textLength="77" lengthAdjust="spacingAndGlyphs">Обновить ×</text>
<rect x="2244" y="600" width="299" height="22" fill="#0078d7"/>
<path d="M2274.5 600 V622 M2434.5 600 V622 M2534.5 600 V622" stroke="#6aa0d0" stroke-width="1"/>
<path d="M2244 599.5 H2543 M2244 622.5 H2543" stroke="#62a4e0" stroke-width="1"/>
<rect x="2253" y="604" width="12.5" height="12.5" rx="2.5" fill="#0060c8"/>
<path d="M2256.3 609.5 L2258.8 612 L2262.8 607.5" stroke="#cfe6ff" stroke-width="1" fill="none"/>
<text x="2279" y="617" font-size="14" fill="#ffffff" textLength="143" lengthAdjust="spacingAndGlyphs">L0001_2024-10-07-1...</text>
<text x="2438" y="617" font-size="14" fill="#ffffff" textLength="20" lengthAdjust="spacingAndGlyphs">Htt</text>
<path d="M2464.5 612 L2468 615.5 L2476.5 608" stroke="#fff" stroke-width="2.4" fill="none"/>
<svg x="2534" y="577" width="9" height="45" overflow="hidden"><text x="5.5" y="17" font-size="14" fill="#9aa0a8">1</text><text x="5.5" y="40" font-size="14" fill="#8fb8e8">1</text></svg>
<rect x="2244" y="1342" width="299" height="16" fill="#efefef"/>
<path d="M2261.5 1350.5 H2401" stroke="#7a7a7a" stroke-width="2"/>
<rect x="2255" y="1366" width="11.5" height="11.5" rx="2" fill="#eeeeee"/>
<text x="2274" y="1377" font-size="14" fill="#eef0f2" textLength="22" lengthAdjust="spacingAndGlyphs">Все</text>
<rect x="2334" y="1366" width="11.5" height="11.5" rx="2" fill="#eeeeee"/>
<text x="2353" y="1377" font-size="14" fill="#eef0f2" textLength="63" lengthAdjust="spacingAndGlyphs">Инверсия</text>
<polyline points="1165.6,797.6 1161.1,803.4 1158.3,808.4 1163.6,806.4 1167.9,812.7 1171.7,820.8 1174.7,828.3 1180.3,833.9 1188.3,836.4 1196.4,838.4 1204.3,838.8 1212.2,838.3 1220.7,837.5 1228.5,836.4 1236.6,835.1 1244.5,833.2 1252.0,829.4 1259.1,825.7 1265.7,821.0 1272.8,816.7 1280.3,813.5 1287.6,809.2 1294.2,805.1 1301.9,803.6 1308.8,799.1 1316.3,796.1 1323.5,791.9 1330.4,787.6 1337.3,782.9 1344.1,778.8 1351.0,774.5 1357.0,768.5 1363.8,763.8 1370.4,759.1 1376.7,754.0 1383.3,749.7 1390.4,745.0 1397.9,741.3 1404.9,738.5 1412.0,733.8 1419.1,730.0 1426.1,725.3 1433.0,720.6 1440.1,717.5 1447.6,714.5 1455.1,711.6 1463.0,709.4 1470.5,706.0 1478.0,702.3 1486.1,700.0 1493.6,696.3 1500.5,692.1 1507.7,688.8 1515.2,686.0 1523.2,683.5 1530.4,685.5 1534.4,692.0 1537.0,699.8 1540.3,707.6 1542.9,715.4 1545.5,723.1 1547.4,730.3 1550.0,738.1 1551.9,746.5 1554.5,754.3 1557.8,762.0 1559.1,769.8 1560.4,777.6 1561.7,786.0 1561.0,794.5 1562.3,802.2 1563.6,810.0 1564.9,817.8 1567.5,826.2 1569.4,834.0 1571.4,841.8 1572.9,850.2 1573.6,858.1 1574.4,866.0 1574.4,874.7 1574.4,882.6 1574.4,891.2 1575.1,899.2 1578.0,907.8 1578.0,915.0 1575.8,923.0 1574.4,930.9 1572.9,938.8 1572.2,947.5 1572.2,955.4 1571.5,963.3 1567.9,971.2 1567.2,979.2 1565.0,987.1 1562.8,995.0 1561.4,1002.9 1559.9,1010.9 1557.1,1018.8 1555.6,1026.7 1553.4,1034.9 1552.1,1043.3 1550.2,1051.1 1548.9,1058.9 1549.5,1067.3 1548.9,1075.1 1548.2,1083.5 1545.7,1090.7 1545.0,1099.1 1546.3,1107.5 1546.3,1115.3 1539.8,1119.9 1532.0,1121.8 1524.3,1123.1 1516.5,1124.4 1508.0,1126.3 1500.3,1128.9 1492.5,1130.9 1484.7,1134.1 1477.6,1137.4 1469.8,1140.6 1462.0,1143.2 1455.5,1140.6 1452.3,1132.8 1451.6,1125.0 1453.6,1117.3 1454.9,1108.8 1455.5,1101.0 1456.8,1092.6 1458.8,1084.2 1460.7,1076.4 1462.0,1068.6 1462.0,1060.2 1462.0,1051.8 1462.0,1044.0 1462.0,1035.6 1462.7,1027.8 1462.7,1018.8 1464.1,1010.9 1464.8,1002.9 1465.6,995.0 1468.4,987.1 1468.4,979.2 1468.4,971.2 1468.4,963.3 1469.9,954.7 1469.9,946.7 1470.0,937.0 1470.0,929.0 1470.0,921.0 1470.0,913.0 1470.0,905.0 1470.0,897.0 1469.9,889.1 1470.6,881.2 1469.9,872.5 1470.6,863.9 1469.9,855.9 1469.9,848.0 1469.2,840.1 1461.2,838.6 1452.6,837.9 1444.7,839.4 1436.7,840.1 1428.8,840.8 1420.9,843.7 1413.0,845.1 1405.0,848.0 1397.1,849.0 1388.5,849.0 1380.5,849.0 1372.6,848.7 1370.4,856.7 1369.0,864.6 1371.2,873.2 1374.0,881.2 1374.8,889.1 1375.5,897.7 1375.5,905.7 1376.9,913.6 1376.2,921.5 1376.2,930.2 1374.8,938.8 1374.8,946.7 1374.8,954.7 1374.0,962.6 1374.0,971.2 1374.0,979.2 1374.0,987.1 1374.0,995.7 1374.8,1003.7 1375.5,1012.3 1375.1,1021.3 1375.1,1029.1 1375.1,1036.9 1375.1,1045.3 1376.4,1053.1 1377.7,1061.5 1379.7,1069.3 1380.3,1077.7 1381.6,1085.5 1382.2,1093.9 1384.2,1101.7 1386.1,1109.5 1387.4,1117.3 1390.0,1125.7 1393.3,1133.5 1395.2,1141.3 1397.2,1149.0 1399.8,1156.8 1392.0,1160.0 1384.2,1160.7 1375.8,1162.0 1368.0,1162.7 1359.6,1164.0 1351.8,1164.0 1343.3,1165.2 1335.6,1165.9 1327.1,1167.2 1319.6,1169.2 1311.8,1171.7 1304.0,1173.7 1296.2,1176.9 1287.1,1178.2 1287.8,1170.4 1288.4,1162.0 1289.7,1154.2 1290.4,1145.8 1290.4,1138.0 1291.0,1130.2 1291.7,1121.8 1291.7,1113.4 1292.3,1105.6 1292.3,1097.2 1291.7,1089.4 1291.7,1080.9 1290.4,1072.5 1289.7,1064.7 1289.1,1056.3 1288.4,1047.9 1287.8,1039.5 1287.1,1031.7 1285.8,1023.9 1285.3,1015.5 1284.7,1006.9 1284.7,999.0 1284.1,991.0 1283.5,983.1 1282.2,974.5 1281.0,966.5 1279.8,958.0 1279.2,950.0 1279.2,941.4 1279.2,933.5 1279.2,925.5 1278.6,917.5 1278.0,909.6 1276.7,901.6 1275.5,892.4 1271.8,886.9 1263.3,885.7 1255.3,885.7 1247.3,886.3 1238.8,886.9 1230.8,887.5 1222.2,888.2 1214.3,888.2 1205.7,889.4 1197.8,890.6 1189.8,890.0 1181.2,891.8 1176.9,897.3 1176.9,905.9 1178.2,913.9 1179.4,921.8 1180.0,929.8 1181.2,937.8 1183.1,945.7 1184.3,953.7 1185.5,961.6 1186.7,969.6 1188.0,978.2 1189.2,986.1 1189.8,994.1 1191.0,1002.0 1192.2,1010.6 1193.5,1018.6 1194.7,1026.5 1196.3,1035.6 1197.6,1044.0 1198.9,1051.1 1202.2,1058.9 1203.5,1067.3 1204.8,1075.1 1206.0,1083.5 1207.4,1091.3 1208.7,1099.7 1210.0,1107.5 1211.9,1115.3 1213.2,1123.8 1215.2,1131.5 1215.8,1140.0 1216.5,1147.8 1217.7,1156.2 1218.4,1163.9 1220.3,1171.7 1215.8,1176.3 1208.0,1177.0 1199.6,1177.6 1191.8,1177.6 1183.4,1177.6 1175.6,1178.9 1167.8,1176.3 1159.4,1175.0 1151.6,1173.7 1143.8,1171.7 1135.4,1169.8 1127.6,1167.8 1119.8,1166.5 1112.0,1163.9 1104.9,1160.7 1105.6,1152.9 1105.6,1144.5 1105.6,1136.7 1105.6,1128.0 1106.2,1119.8 1106.9,1112.0 1107.0,1104.0 1107.0,1096.0 1107.2,1088.0 1107.2,1080.0 1107.2,1071.0 1107.2,1063.0 1107.3,1055.0 1107.3,1046.0 1107.4,1038.0 1107.4,1030.0 1107.1,1021.6 1107.8,1013.0 1107.8,1005.0 1107.8,997.0 1107.8,989.0 1107.8,980.6 1107.8,972.0 1107.8,964.1 1108.4,955.5 1109.0,947.5 1110.2,940.2 1112.0,932.2 1112.7,923.7 1113.3,915.1 1113.9,906.5 1114.5,899.2 1114.5,890.6 1115.1,882.0 1115.7,874.1 1111.4,869.2 1103.6,868.6 1095.6,869.2 1087.5,869.2 1079.4,871.5 1070.8,872.1 1062.7,873.7 1054.6,872.7 1046.0,873.2 1046.0,880.1 1046.6,889.4 1047.0,897.0 1047.1,905.5 1047.0,913.0 1047.5,921.0 1047.5,929.0 1047.1,937.8 1046.0,947.0 1045.4,955.1 1044.3,963.7 1043.1,971.8 1041.4,979.9 1039.3,986.9 1038.5,994.8 1036.2,1003.5 1033.8,1011.5 1032.2,1019.4 1029.8,1026.5 1028.2,1035.2 1026.6,1043.2 1025.8,1051.1 1023.5,1059.8 1021.1,1066.9 1020.3,1075.7 1019.5,1083.6 1018.7,1092.3 1018.7,1100.2 1018.7,1108.2 1018.7,1116.1 1018.7,1124.8 1017.9,1132.7 1019.5,1140.7 1019.5,1149.4 1020.3,1157.3 1017.9,1162.9 1009.2,1165.2 1001.3,1166.8 993.4,1167.6 985.4,1167.6 976.7,1167.6 968.8,1166.0 960.8,1163.6 952.9,1165.2 945.8,1169.2 937.9,1169.2 930.0,1167.6 922.0,1165.2 913.3,1164.4 906.2,1161.3 906.2,1154.9 911.7,1148.6 914.1,1140.7 917.3,1133.5 918.8,1124.8 920.4,1116.9 922.0,1109.0 922.0,1101.0 923.6,1093.1 926.0,1084.4 927.6,1076.5 929.1,1068.5 930.7,1060.6 931.5,1052.7 933.9,1044.8 934.7,1036.0 936.3,1028.1 938.7,1020.2 939.4,1012.3 941.0,1004.3 942.6,996.4 944.2,987.7 946.9,979.9 948.6,972.4 950.9,963.7 953.2,956.2 954.9,948.2 956.1,940.7 959.0,932.6 961.8,925.1 964.7,917.6 967.6,909.5 971.1,901.5 972.2,894.0 975.7,886.5 979.1,879.0 983.7,872.1 984.3,863.4 985.5,855.5 987.2,847.9 979.1,847.3 971.1,846.1 963.0,845.6 954.9,845.6 946.3,844.4 938.2,843.3 930.1,841.8 922.1,841.0 920.3,848.4 919.8,856.0 919.2,864.0 919.2,872.7 918.6,880.7 917.5,889.4 915.7,896.9 914.0,905.5 912.9,913.0 910.0,921.1 909.4,929.1 907.7,937.2 905.9,945.3 905.4,953.3 904.2,961.4 903.6,969.5 901.9,977.6 900.6,986.1 898.2,994.0 895.9,1002.0 891.9,1009.1 890.3,1017.0 887.9,1025.7 884.8,1033.7 883.2,1040.8 880.8,1048.7 879.1,1056.6 877.5,1064.6 875.1,1072.5 873.5,1080.4 871.1,1088.3 868.8,1096.3 865.6,1104.2 864.0,1112.1 862.4,1120.0 861.6,1128.0 860.0,1136.7 852.1,1138.3 844.2,1136.7 836.3,1134.3 828.3,1132.0 820.4,1129.6 813.3,1125.6 805.4,1126.4 796.6,1126.4 789.5,1124.8 780.8,1124.0 781.6,1116.9 785.5,1111.5 789.0,1106.0 791.1,1100.5 792.7,1094.7 794.3,1086.8 795.8,1078.8 798.2,1070.9 800.6,1063.0 803.0,1055.1 803.8,1047.1 806.2,1039.2 807.7,1031.3 810.1,1022.6 811.7,1014.6 814.1,1006.7 815.7,998.8 818.0,990.9 819.8,982.6 821.8,975.0 824.2,967.5 825.9,959.3 826.6,951.1 829.4,942.9 831.4,935.3 832.8,927.1 834.1,918.9 834.1,910.7 835.5,903.2 839.6,895.6 841.7,888.1 843.0,880.6 845.1,872.4 847.2,864.1 848.5,855.9 849.9,847.7 851.3,840.2 854.0,831.3 849.2,827.2 841.0,826.5 833.5,825.8 825.9,822.1 817.7,822.1 809.5,822.1 801.3,821.7 793.1,820.3 784.9,819.6 781.4,827.9 780.8,835.4 780.1,843.6 779.4,851.1 778.0,859.3 776.6,867.6 776.0,877.1 775.3,884.7 774.6,892.9 773.2,900.4 771.9,908.6 770.5,916.9 769.1,924.4 767.7,932.6 767.5,941.5 766.1,949.0 765.0,957.2 764.3,965.5 763.6,973.7 762.6,982.1 761.8,990.1 759.4,998.0 757.8,1005.9 757.0,1013.8 754.6,1021.8 752.3,1029.7 749.9,1037.6 749.1,1045.5 747.5,1053.5 745.9,1062.2 745.1,1070.1 743.5,1078.0 741.9,1086.0 740.4,1093.9 740.4,1101.8 740.4,1110.5 741.2,1118.5 741.2,1127.2 740.4,1135.1 739.6,1143.0 732.4,1147.0 724.5,1147.0 716.6,1150.2 708.7,1151.8 700.7,1154.1 692.8,1155.7 685.5,1159.5 678.5,1163.6 670.6,1167.6 668.2,1162.1 673.0,1154.9 672.2,1146.2 673.0,1138.3 675.4,1131.1 673.0,1124.0 668.2,1116.9 665.1,1109.7 665.9,1101.8 664.3,1093.1 659.5,1084.4 660.3,1078.0 662.7,1070.1 665.9,1062.2 667.4,1054.3 667.4,1046.3 669.0,1038.4 670.6,1030.5 671.4,1021.8 672.2,1013.8 672.2,1005.1 673.8,998.0 676.2,989.3 677.7,981.3 677.4,973.0 678.1,966.1 679.4,957.9 681.8,949.0 682.9,940.8 684.9,932.6 684.9,923.7 685.9,916.2 688.3,908.6 691.0,901.0 693.5,893.6 695.9,885.4 697.9,877.8 700.0,869.6 702.3,862.0 704.8,853.9 705.4,846.3 705.4,837.4 706.8,829.9 710.2,822.4 715.7,814.9 718.5,808.7 726.7,808.7 735.0,810.0 742.4,811.2" fill="none" stroke="#1a1a1a" stroke-width="1.2"/>
<g font-size="10.5"><text x="1170.1" y="811.6" fill="#c72315">1</text><text x="1165.6" y="817.4" fill="#cf5a15">2</text><text x="1162.8" y="822.4" fill="#d38715">3</text><text x="1168.1" y="820.4" fill="#d16615">4</text><text x="1172.4" y="826.7" fill="#d37515">5</text><text x="1176.2" y="834.8" fill="#d38d15">6</text><text x="1179.2" y="842.3" fill="#d26e15">7</text><text x="1184.8" y="847.9" fill="#d39215">8</text><text x="1192.8" y="850.4" fill="#c8ba0f">9</text><text x="1200.9" y="852.4" fill="#5bc523">10</text><text x="1208.8" y="852.8" fill="#5bc523">11</text><text x="1216.7" y="852.3" fill="#5bc523">12</text><text x="1225.2" y="851.5" fill="#5bc523">13</text><text x="1233.0" y="850.4" fill="#5bc523">14</text><text x="1241.1" y="849.1" fill="#5bc523">15</text><text x="1249.0" y="847.2" fill="#5bc523">16</text><text x="1256.5" y="843.4" fill="#cf5a15">17</text><text x="1263.6" y="839.7" fill="#d37515">18</text><text x="1270.2" y="835.0" fill="#d38215">19</text><text x="1277.3" y="830.7" fill="#cf5715">20</text><text x="1284.8" y="827.5" fill="#d29c14">21</text><text x="1292.1" y="823.2" fill="#d06015">22</text><text x="1298.7" y="819.1" fill="#c6bf0f">23</text><text x="1306.4" y="817.6" fill="#c8ba0f">24</text><text x="1313.3" y="813.1" fill="#c5c50e">25</text><text x="1320.8" y="810.1" fill="#9ac515">26</text><text x="1328.0" y="805.9" fill="#99c515">27</text><text x="1334.9" y="801.6" fill="#98c515">28</text><text x="1341.8" y="796.9" fill="#98c515">29</text><text x="1348.6" y="792.8" fill="#97c515">30</text><text x="1355.5" y="788.5" fill="#96c515">31</text><text x="1361.5" y="782.5" fill="#95c516">32</text><text x="1368.3" y="777.8" fill="#94c516">33</text><text x="1374.9" y="773.1" fill="#93c516">34</text><text x="1381.2" y="768.0" fill="#92c516">35</text><text x="1387.8" y="763.7" fill="#91c516">36</text><text x="1394.9" y="759.0" fill="#90c516">37</text><text x="1402.4" y="755.3" fill="#8fc517">38</text><text x="1409.4" y="752.5" fill="#8ec517">39</text><text x="1416.5" y="747.8" fill="#8dc517">40</text><text x="1423.6" y="744.0" fill="#8cc517">41</text><text x="1430.6" y="739.3" fill="#8bc517">42</text><text x="1437.5" y="734.6" fill="#8ac517">43</text><text x="1444.6" y="731.5" fill="#89c517">44</text><text x="1452.1" y="728.5" fill="#88c518">45</text><text x="1459.6" y="725.6" fill="#87c518">46</text><text x="1467.5" y="723.4" fill="#86c518">47</text><text x="1475.0" y="720.0" fill="#85c518">48</text><text x="1482.5" y="716.3" fill="#c6bf0e">49</text><text x="1490.6" y="714.0" fill="#d38415">50</text><text x="1498.1" y="710.3" fill="#c7bd0f">51</text><text x="1505.0" y="706.1" fill="#d19f14">52</text><text x="1512.2" y="702.8" fill="#d37e15">53</text><text x="1519.7" y="700.0" fill="#d0a413">54</text><text x="1527.7" y="697.5" fill="#d38315">55</text><text x="1534.9" y="699.5" fill="#d29d14">56</text><text x="1538.9" y="706.0" fill="#70c51c">57</text><text x="1541.5" y="713.8" fill="#74c51b">58</text><text x="1544.8" y="721.6" fill="#77c51a">59</text><text x="1547.4" y="729.4" fill="#7bc51a">60</text><text x="1550.0" y="737.1" fill="#7ec519">61</text><text x="1551.9" y="744.3" fill="#82c519">62</text><text x="1554.5" y="752.1" fill="#85c518">63</text><text x="1556.4" y="760.5" fill="#9ac515">64</text><text x="1559.0" y="768.3" fill="#d39015">65</text><text x="1562.3" y="776.0" fill="#8cc517">66</text><text x="1563.6" y="783.8" fill="#85c518">67</text><text x="1564.9" y="791.6" fill="#5bc523">68</text><text x="1566.2" y="800.0" fill="#d39015">69</text><text x="1565.5" y="808.5" fill="#19c557">70</text><text x="1566.8" y="816.2" fill="#38c52e">71</text><text x="1568.1" y="824.0" fill="#69c51e">72</text><text x="1569.4" y="831.8" fill="#9ac515">73</text><text x="1572.0" y="840.2" fill="#11199d">74</text><text x="1573.9" y="848.0" fill="#11199d">75</text><text x="1575.9" y="855.8" fill="#11199d">76</text><text x="1577.4" y="864.2" fill="#11199d">77</text><text x="1578.1" y="872.1" fill="#11199d">78</text><text x="1578.9" y="880.0" fill="#15c585">79</text><text x="1578.9" y="888.7" fill="#85c518">80</text><text x="1578.9" y="896.6" fill="#c8ba0f">81</text><text x="1578.9" y="905.2" fill="#aec511">82</text><text x="1579.6" y="913.2" fill="#d37c15">83</text><text x="1582.5" y="921.8" fill="#cdaa12">84</text><text x="1582.5" y="929.0" fill="#d1a114">85</text><text x="1580.3" y="937.0" fill="#d39515">86</text><text x="1578.9" y="944.9" fill="#d37115">87</text><text x="1577.4" y="952.8" fill="#cdab12">88</text><text x="1576.7" y="961.5" fill="#d38f15">89</text><text x="1576.7" y="969.4" fill="#d38615">90</text><text x="1576.0" y="977.3" fill="#d26d15">91</text><text x="1572.4" y="985.2" fill="#d37115">92</text><text x="1571.7" y="993.2" fill="#d26d15">93</text><text x="1569.5" y="1001.1" fill="#d39715">94</text><text x="1567.3" y="1009.0" fill="#d38c15">95</text><text x="1565.9" y="1016.9" fill="#d39015">96</text><text x="1564.4" y="1024.9" fill="#d16915">97</text><text x="1561.6" y="1032.8" fill="#c72315">98</text><text x="1560.1" y="1040.7" fill="#ceaa12">99</text><text x="1557.9" y="1048.9" fill="#c5c50e">100</text><text x="1556.6" y="1057.3" fill="#c5c50e">101</text><text x="1554.7" y="1065.1" fill="#d0a413">102</text><text x="1553.4" y="1072.9" fill="#c8ba0f">103</text><text x="1554.0" y="1081.3" fill="#c5c50e">104</text><text x="1553.4" y="1089.1" fill="#31c531">105</text><text x="1552.7" y="1097.5" fill="#85c518">106</text><text x="1550.2" y="1104.7" fill="#c5c50e">107</text><text x="1549.5" y="1113.1" fill="#c8ba0f">108</text><text x="1550.8" y="1121.5" fill="#d38015">109</text><text x="1550.8" y="1129.3" fill="#cb4315">110</text><text x="1544.3" y="1133.9" fill="#ce5615">111</text><text x="1536.5" y="1135.8" fill="#d06115">112</text><text x="1528.8" y="1137.1" fill="#cf5815">113</text><text x="1521.0" y="1138.4" fill="#ce5215">114</text><text x="1512.5" y="1140.3" fill="#d37e15">115</text><text x="1504.8" y="1142.9" fill="#ca3b15">116</text><text x="1497.0" y="1144.9" fill="#cf5915">117</text><text x="1489.2" y="1148.1" fill="#cf5715">118</text><text x="1482.1" y="1151.4" fill="#ce5615">119</text><text x="1474.3" y="1154.6" fill="#ce5415">120</text><text x="1466.5" y="1157.2" fill="#ce5215">121</text><text x="1460.0" y="1154.6" fill="#cd5015">122</text><text x="1456.8" y="1146.8" fill="#ce5615">123</text><text x="1456.1" y="1139.0" fill="#d37b15">124</text><text x="1458.1" y="1131.3" fill="#d38815">125</text><text x="1459.4" y="1122.8" fill="#d38a15">126</text><text x="1460.0" y="1115.0" fill="#d39a15">127</text><text x="1461.3" y="1106.6" fill="#d39a15">128</text><text x="1463.3" y="1098.2" fill="#c8bb0f">129</text><text x="1465.2" y="1090.4" fill="#cab311">130</text><text x="1466.5" y="1082.6" fill="#b7c510">131</text><text x="1466.5" y="1074.2" fill="#85c518">132</text><text x="1466.5" y="1065.8" fill="#1cc538">133</text><text x="1466.5" y="1058.0" fill="#15c0b3">134</text><text x="1466.5" y="1049.6" fill="#d26a15">135</text><text x="1467.2" y="1041.8" fill="#d37d15">136</text><text x="1467.2" y="1032.8" fill="#d19f14">137</text><text x="1468.6" y="1024.9" fill="#d39815">138</text><text x="1469.3" y="1016.9" fill="#d39115">139</text><text x="1470.1" y="1009.0" fill="#d38f15">140</text><text x="1472.9" y="1001.1" fill="#c6c10e">141</text><text x="1472.9" y="993.2" fill="#d39215">142</text><text x="1472.9" y="985.2" fill="#cbb211">143</text><text x="1472.9" y="977.3" fill="#c9b910">144</text><text x="1474.4" y="968.7" fill="#c6bf0e">145</text><text x="1474.4" y="960.7" fill="#c2c50e">146</text><text x="1474.5" y="951.0" fill="#b5c510">147</text><text x="1474.5" y="943.0" fill="#a8c512">148</text><text x="1474.5" y="935.0" fill="#9ac515">149</text><text x="1474.5" y="927.0" fill="#31c531">150</text><text x="1474.5" y="919.0" fill="#26c534">151</text><text x="1474.5" y="911.0" fill="#1cc538">152</text><text x="1474.4" y="903.1" fill="#15bec5">153</text><text x="1475.1" y="895.2" fill="#158ccc">154</text><text x="1474.4" y="886.5" fill="#11199d">155</text><text x="1475.1" y="877.9" fill="#11199d">156</text><text x="1474.4" y="869.9" fill="#11199d">157</text><text x="1474.4" y="862.0" fill="#11199d">158</text><text x="1473.7" y="854.1" fill="#11199d">159</text><text x="1465.7" y="852.6" fill="#1125a1">160</text><text x="1457.1" y="851.9" fill="#112ca3">161</text><text x="1449.2" y="853.4" fill="#1132a5">162</text><text x="1441.2" y="854.1" fill="#1139a7">163</text><text x="1433.3" y="854.8" fill="#1569cc">164</text><text x="1425.4" y="857.7" fill="#158ccc">165</text><text x="1417.5" y="859.1" fill="#15abc7">166</text><text x="1409.5" y="862.0" fill="#19c557">167</text><text x="1401.6" y="863.0" fill="#19c553">168</text><text x="1393.0" y="863.0" fill="#1ac54f">169</text><text x="1385.0" y="863.0" fill="#1ac54b">170</text><text x="1377.1" y="862.7" fill="#1ac547">171</text><text x="1374.9" y="870.7" fill="#1bc543">172</text><text x="1373.5" y="878.6" fill="#1bc540">173</text><text x="1375.7" y="887.2" fill="#1bc53c">174</text><text x="1378.5" y="895.2" fill="#1cc538">175</text><text x="1379.3" y="903.1" fill="#15bec5">176</text><text x="1380.0" y="911.7" fill="#157ecc">177</text><text x="1380.0" y="919.7" fill="#11199d">178</text><text x="1381.4" y="927.6" fill="#11199d">179</text><text x="1380.7" y="935.5" fill="#11199d">180</text><text x="1380.7" y="944.2" fill="#15bec5">181</text><text x="1379.3" y="952.8" fill="#11199d">182</text><text x="1379.3" y="960.7" fill="#11199d">183</text><text x="1379.3" y="968.7" fill="#11199d">184</text><text x="1378.5" y="976.6" fill="#11199d">185</text><text x="1378.5" y="985.2" fill="#11199d">186</text><text x="1378.5" y="993.2" fill="#11199d">187</text><text x="1378.5" y="1001.1" fill="#11199d">188</text><text x="1378.5" y="1009.7" fill="#11199d">189</text><text x="1379.3" y="1017.7" fill="#15bec5">190</text><text x="1380.0" y="1026.3" fill="#15c585">191</text><text x="1379.6" y="1035.3" fill="#1cc538">192</text><text x="1379.6" y="1043.1" fill="#29c533">193</text><text x="1379.6" y="1050.9" fill="#36c52f">194</text><text x="1379.6" y="1059.3" fill="#43c52b">195</text><text x="1380.9" y="1067.1" fill="#50c526">196</text><text x="1382.2" y="1075.5" fill="#5ec522">197</text><text x="1384.2" y="1083.3" fill="#6bc51d">198</text><text x="1384.8" y="1091.7" fill="#78c51a">199</text><text x="1386.1" y="1099.5" fill="#85c518">200</text><text x="1386.7" y="1107.9" fill="#c5c50e">201</text><text x="1388.7" y="1115.7" fill="#c5c30e">202</text><text x="1390.6" y="1123.5" fill="#c6c10e">203</text><text x="1391.9" y="1131.3" fill="#c6bf0e">204</text><text x="1394.5" y="1139.7" fill="#c7be0f">205</text><text x="1397.8" y="1147.5" fill="#c8bc0f">206</text><text x="1399.7" y="1155.3" fill="#c8ba0f">207</text><text x="1401.7" y="1163.0" fill="#d29c14">208</text><text x="1404.3" y="1170.8" fill="#d37a15">209</text><text x="1396.5" y="1174.0" fill="#d26d15">210</text><text x="1388.7" y="1174.7" fill="#d39815">211</text><text x="1380.3" y="1176.0" fill="#d39715">212</text><text x="1372.5" y="1176.7" fill="#d26f15">213</text><text x="1364.1" y="1178.0" fill="#d37f15">214</text><text x="1356.3" y="1178.0" fill="#cea812">215</text><text x="1347.8" y="1179.2" fill="#cdab12">216</text><text x="1340.1" y="1179.9" fill="#ceaa12">217</text><text x="1331.6" y="1181.2" fill="#d37215">218</text><text x="1324.1" y="1183.2" fill="#d37915">219</text><text x="1316.3" y="1185.7" fill="#ceaa12">220</text><text x="1308.5" y="1187.7" fill="#d37815">221</text><text x="1300.7" y="1190.9" fill="#d26c15">222</text><text x="1291.6" y="1192.2" fill="#9ac515">223</text><text x="1292.3" y="1184.4" fill="#7bc51a">224</text><text x="1292.9" y="1176.0" fill="#5bc523">225</text><text x="1294.2" y="1168.2" fill="#53c526">226</text><text x="1294.9" y="1159.8" fill="#4ac528">227</text><text x="1294.9" y="1152.0" fill="#42c52b">228</text><text x="1295.5" y="1144.2" fill="#39c52e">229</text><text x="1296.2" y="1135.8" fill="#31c531">230</text><text x="1296.2" y="1127.4" fill="#1bc53e">231</text><text x="1296.8" y="1119.6" fill="#18c563">232</text><text x="1296.8" y="1111.2" fill="#15c487">233</text><text x="1296.2" y="1103.4" fill="#15c29d">234</text><text x="1296.2" y="1094.9" fill="#15c0b3">235</text><text x="1294.9" y="1086.5" fill="#158ccc">236</text><text x="1294.2" y="1078.7" fill="#158ccc">237</text><text x="1293.6" y="1070.3" fill="#158ccc">238</text><text x="1292.9" y="1061.9" fill="#158ccc">239</text><text x="1292.3" y="1053.5" fill="#158ccc">240</text><text x="1291.6" y="1045.7" fill="#158ccc">241</text><text x="1290.3" y="1037.9" fill="#158ccc">242</text><text x="1289.8" y="1029.5" fill="#158ccc">243</text><text x="1289.2" y="1020.9" fill="#158ccc">244</text><text x="1289.2" y="1013.0" fill="#1cc538">245</text><text x="1288.6" y="1005.0" fill="#1139a7">246</text><text x="1288.0" y="997.1" fill="#1134a5">247</text><text x="1286.7" y="988.5" fill="#112fa4">248</text><text x="1285.5" y="980.5" fill="#112aa2">249</text><text x="1284.3" y="972.0" fill="#1125a1">250</text><text x="1283.7" y="964.0" fill="#1cc538">251</text><text x="1283.7" y="955.4" fill="#11199d">252</text><text x="1283.7" y="947.5" fill="#11179d">253</text><text x="1283.7" y="939.5" fill="#11169d">254</text><text x="1283.1" y="931.5" fill="#11159c">255</text><text x="1282.5" y="923.6" fill="#11139c">256</text><text x="1281.2" y="915.6" fill="#11129b">257</text><text x="1280.0" y="906.4" fill="#11119b">258</text><text x="1276.3" y="900.9" fill="#1cc538">259</text><text x="1267.8" y="899.7" fill="#11119b">260</text><text x="1259.8" y="899.7" fill="#11119b">261</text><text x="1251.8" y="900.3" fill="#11129b">262</text><text x="1243.3" y="900.9" fill="#11129b">263</text><text x="1235.3" y="901.5" fill="#11139c">264</text><text x="1226.7" y="902.2" fill="#11139c">265</text><text x="1218.8" y="902.2" fill="#11149c">266</text><text x="1210.2" y="903.4" fill="#11149c">267</text><text x="1202.3" y="904.6" fill="#11159c">268</text><text x="1194.3" y="904.0" fill="#11159c">269</text><text x="1185.7" y="905.8" fill="#11169c">270</text><text x="1181.4" y="911.3" fill="#11169d">271</text><text x="1181.4" y="919.9" fill="#11169d">272</text><text x="1182.7" y="927.9" fill="#11179d">273</text><text x="1183.9" y="935.8" fill="#d06015">274</text><text x="1184.5" y="943.8" fill="#11189d">275</text><text x="1185.7" y="951.8" fill="#11189d">276</text><text x="1187.6" y="959.7" fill="#11199d">277</text><text x="1188.8" y="967.7" fill="#158ccc">278</text><text x="1190.0" y="975.6" fill="#1590cb">279</text><text x="1191.2" y="983.6" fill="#1594cb">280</text><text x="1192.5" y="992.2" fill="#1598ca">281</text><text x="1193.7" y="1000.1" fill="#159cc9">282</text><text x="1194.3" y="1008.1" fill="#15a0c9">283</text><text x="1195.5" y="1016.0" fill="#15a3c8">284</text><text x="1196.7" y="1024.6" fill="#15a7c8">285</text><text x="1198.0" y="1032.6" fill="#15abc7">286</text><text x="1199.2" y="1040.5" fill="#15b6c6">287</text><text x="1200.8" y="1049.6" fill="#15bec0">288</text><text x="1202.1" y="1058.0" fill="#15c0b0">289</text><text x="1203.4" y="1065.1" fill="#15c2a0">290</text><text x="1206.7" y="1072.9" fill="#1cc538">291</text><text x="1208.0" y="1081.3" fill="#20c536">292</text><text x="1209.3" y="1089.1" fill="#25c535">293</text><text x="1210.5" y="1097.5" fill="#2ac533">294</text><text x="1211.9" y="1105.3" fill="#2ec532">295</text><text x="1213.2" y="1113.7" fill="#33c530">296</text><text x="1214.5" y="1121.5" fill="#38c52e">297</text><text x="1216.4" y="1129.3" fill="#3dc52d">298</text><text x="1217.7" y="1137.8" fill="#41c52b">299</text><text x="1219.7" y="1145.5" fill="#46c52a">300</text><text x="1220.3" y="1154.0" fill="#70c51c">301</text><text x="1221.0" y="1161.8" fill="#85c518">302</text><text x="1222.2" y="1170.2" fill="#9ac515">303</text><text x="1222.9" y="1177.9" fill="#d05e15">304</text><text x="1224.8" y="1185.7" fill="#cf5915">305</text><text x="1220.3" y="1190.3" fill="#d39115">306</text><text x="1212.5" y="1191.0" fill="#cf5b15">307</text><text x="1204.1" y="1191.6" fill="#d38515">308</text><text x="1196.3" y="1191.6" fill="#d37f15">309</text><text x="1187.9" y="1191.6" fill="#cf5a15">310</text><text x="1180.1" y="1192.9" fill="#d16715">311</text><text x="1172.3" y="1190.3" fill="#d39915">312</text><text x="1163.9" y="1189.0" fill="#d38615">313</text><text x="1156.1" y="1187.7" fill="#d38015">314</text><text x="1148.3" y="1185.7" fill="#d38e15">315</text><text x="1139.9" y="1183.8" fill="#d39915">316</text><text x="1132.1" y="1181.8" fill="#d39115">317</text><text x="1124.3" y="1180.5" fill="#d37415">318</text><text x="1116.5" y="1177.9" fill="#cea812">319</text><text x="1109.4" y="1174.7" fill="#d38115">320</text><text x="1110.1" y="1166.9" fill="#cab410">321</text><text x="1110.1" y="1158.5" fill="#cab510">322</text><text x="1110.1" y="1150.7" fill="#c8ba0f">323</text><text x="1110.1" y="1142.0" fill="#c6bf0e">324</text><text x="1110.7" y="1133.8" fill="#c5c50e">325</text><text x="1111.4" y="1126.0" fill="#70c51c">326</text><text x="1111.5" y="1118.0" fill="#6ac51e">327</text><text x="1111.5" y="1110.0" fill="#64c520">328</text><text x="1111.7" y="1102.0" fill="#5ec522">329</text><text x="1111.7" y="1094.0" fill="#58c524">330</text><text x="1111.7" y="1085.0" fill="#52c526">331</text><text x="1111.7" y="1077.0" fill="#4cc528">332</text><text x="1111.8" y="1069.0" fill="#46c52a">333</text><text x="1111.8" y="1060.0" fill="#40c52c">334</text><text x="1111.9" y="1052.0" fill="#3ac52e">335</text><text x="1111.9" y="1044.0" fill="#34c530">336</text><text x="1111.6" y="1035.6" fill="#2ec532">337</text><text x="1112.3" y="1027.0" fill="#28c534">338</text><text x="1112.3" y="1019.0" fill="#22c536">339</text><text x="1112.3" y="1011.0" fill="#1cc538">340</text><text x="1112.3" y="1003.0" fill="#16c576">341</text><text x="1112.3" y="994.6" fill="#15c2a0">342</text><text x="1112.3" y="986.0" fill="#15bec5">343</text><text x="1112.3" y="978.1" fill="#1585cc">344</text><text x="1112.9" y="969.5" fill="#1139a7">345</text><text x="1113.5" y="961.5" fill="#1136a6">346</text><text x="1114.7" y="954.2" fill="#1132a4">347</text><text x="1116.5" y="946.2" fill="#112ea3">348</text><text x="1117.2" y="937.7" fill="#112ba2">349</text><text x="1117.8" y="929.1" fill="#1127a1">350</text><text x="1118.4" y="920.5" fill="#1124a0">351</text><text x="1119.0" y="913.2" fill="#11209f">352</text><text x="1119.0" y="904.6" fill="#111c9e">353</text><text x="1119.6" y="896.0" fill="#11199d">354</text><text x="1120.2" y="888.1" fill="#111f9f">355</text><text x="1115.9" y="883.2" fill="#1125a1">356</text><text x="1108.1" y="882.6" fill="#112ca3">357</text><text x="1100.1" y="883.2" fill="#1134a5">358</text><text x="1092.0" y="883.2" fill="#113da7">359</text><text x="1083.9" y="885.5" fill="#1557cc">360</text><text x="1075.3" y="886.1" fill="#1565cc">361</text><text x="1067.2" y="887.7" fill="#1572cc">362</text><text x="1059.1" y="886.7" fill="#157fcc">363</text><text x="1050.5" y="887.2" fill="#158ccc">364</text><text x="1050.5" y="894.1" fill="#11199d">365</text><text x="1051.1" y="903.4" fill="#111d9f">366</text><text x="1051.5" y="911.0" fill="#1122a0">367</text><text x="1051.6" y="919.5" fill="#1127a1">368</text><text x="1051.5" y="927.0" fill="#112ba3">369</text><text x="1052.0" y="935.0" fill="#1130a4">370</text><text x="1052.0" y="943.0" fill="#1134a5">371</text><text x="1051.6" y="951.8" fill="#1139a7">372</text><text x="1050.5" y="961.0" fill="#1569cc">373</text><text x="1049.9" y="969.1" fill="#158ccc">374</text><text x="1048.8" y="977.7" fill="#15abc7">375</text><text x="1047.6" y="985.8" fill="#15c0b3">376</text><text x="1045.9" y="993.9" fill="#1cc538">377</text><text x="1043.8" y="1000.9" fill="#1fc537">378</text><text x="1043.0" y="1008.8" fill="#22c536">379</text><text x="1040.7" y="1017.5" fill="#25c535">380</text><text x="1038.3" y="1025.5" fill="#29c533">381</text><text x="1036.7" y="1033.4" fill="#2cc532">382</text><text x="1034.3" y="1040.5" fill="#2fc531">383</text><text x="1032.7" y="1049.2" fill="#32c530">384</text><text x="1031.1" y="1057.2" fill="#36c52f">385</text><text x="1030.3" y="1065.1" fill="#39c52e">386</text><text x="1028.0" y="1073.8" fill="#3cc52d">387</text><text x="1025.6" y="1080.9" fill="#3fc52c">388</text><text x="1024.8" y="1089.7" fill="#43c52b">389</text><text x="1024.0" y="1097.6" fill="#46c52a">390</text><text x="1023.2" y="1106.3" fill="#c5c50e">391</text><text x="1023.2" y="1114.2" fill="#c7bd0f">392</text><text x="1023.2" y="1122.2" fill="#cab510">393</text><text x="1023.2" y="1130.1" fill="#d29e14">394</text><text x="1023.2" y="1138.8" fill="#d39b15">395</text><text x="1022.4" y="1146.7" fill="#d29c14">396</text><text x="1024.0" y="1154.7" fill="#d39115">397</text><text x="1024.0" y="1163.4" fill="#d39615">398</text><text x="1024.8" y="1171.3" fill="#d38115">399</text><text x="1022.4" y="1176.9" fill="#d39a15">400</text><text x="1013.7" y="1179.2" fill="#d26c15">401</text><text x="1005.8" y="1180.8" fill="#d39215">402</text><text x="997.9" y="1181.6" fill="#d29c14">403</text><text x="989.9" y="1181.6" fill="#d0a413">404</text><text x="981.2" y="1181.6" fill="#d26f15">405</text><text x="973.3" y="1180.0" fill="#d36f15">406</text><text x="965.3" y="1177.6" fill="#d38115">407</text><text x="957.4" y="1179.2" fill="#d1a014">408</text><text x="950.3" y="1183.2" fill="#cfa613">409</text><text x="942.4" y="1183.2" fill="#cfa413">410</text><text x="934.5" y="1181.6" fill="#d39b15">411</text><text x="926.5" y="1179.2" fill="#cab410">412</text><text x="917.8" y="1178.4" fill="#d0a114">413</text><text x="910.7" y="1175.3" fill="#cbb111">414</text><text x="910.7" y="1168.9" fill="#d38015">415</text><text x="916.2" y="1162.6" fill="#d38215">416</text><text x="918.6" y="1154.7" fill="#b0c511">417</text><text x="921.8" y="1147.5" fill="#a5c513">418</text><text x="923.3" y="1138.8" fill="#9ac515">419</text><text x="924.9" y="1130.9" fill="#90c516">420</text><text x="926.5" y="1123.0" fill="#85c518">421</text><text x="926.5" y="1115.0" fill="#7bc51a">422</text><text x="928.1" y="1107.1" fill="#70c51c">423</text><text x="930.5" y="1098.4" fill="#66c51f">424</text><text x="932.1" y="1090.5" fill="#5bc523">425</text><text x="933.6" y="1082.5" fill="#57c524">426</text><text x="935.2" y="1074.6" fill="#53c526">427</text><text x="936.0" y="1066.7" fill="#4ec527">428</text><text x="938.4" y="1058.8" fill="#4ac528">429</text><text x="939.2" y="1050.0" fill="#46c52a">430</text><text x="940.8" y="1042.1" fill="#42c52b">431</text><text x="943.2" y="1034.2" fill="#3dc52d">432</text><text x="943.9" y="1026.3" fill="#39c52e">433</text><text x="945.5" y="1018.3" fill="#35c52f">434</text><text x="947.1" y="1010.4" fill="#31c531">435</text><text x="948.7" y="1001.7" fill="#2dc532">436</text><text x="951.4" y="993.9" fill="#28c534">437</text><text x="953.1" y="986.4" fill="#24c535">438</text><text x="955.4" y="977.7" fill="#20c536">439</text><text x="957.7" y="970.2" fill="#1cc538">440</text><text x="959.4" y="962.2" fill="#16c576">441</text><text x="960.6" y="954.7" fill="#15c2a0">442</text><text x="963.5" y="946.6" fill="#15bec5">443</text><text x="966.3" y="939.1" fill="#1569cc">444</text><text x="969.2" y="931.6" fill="#155fcc">445</text><text x="972.1" y="923.5" fill="#1555cc">446</text><text x="975.6" y="915.5" fill="#113da7">447</text><text x="976.7" y="908.0" fill="#1136a6">448</text><text x="980.2" y="900.5" fill="#1130a4">449</text><text x="983.6" y="893.0" fill="#112aa2">450</text><text x="988.2" y="886.1" fill="#1124a1">451</text><text x="988.8" y="877.4" fill="#111f9f">452</text><text x="990.0" y="869.5" fill="#11199d">453</text><text x="991.7" y="861.9" fill="#1592cb">454</text><text x="983.6" y="861.3" fill="#1cc538">455</text><text x="975.6" y="860.1" fill="#1125a1">456</text><text x="967.5" y="859.6" fill="#1128a2">457</text><text x="959.4" y="859.6" fill="#112ca3">458</text><text x="950.8" y="858.4" fill="#112fa4">459</text><text x="942.7" y="857.3" fill="#1132a5">460</text><text x="934.6" y="855.8" fill="#1136a6">461</text><text x="926.6" y="855.0" fill="#1139a7">462</text><text x="924.8" y="862.4" fill="#ce5215">463</text><text x="924.3" y="870.0" fill="#11119b">464</text><text x="923.7" y="878.0" fill="#11119b">465</text><text x="923.7" y="886.7" fill="#11119b">466</text><text x="923.1" y="894.7" fill="#11119b">467</text><text x="922.0" y="903.4" fill="#d37e15">468</text><text x="920.2" y="910.9" fill="#19c557">469</text><text x="918.5" y="919.5" fill="#11199d">470</text><text x="917.4" y="927.0" fill="#1569cc">471</text><text x="914.5" y="935.1" fill="#157bcc">472</text><text x="913.9" y="943.1" fill="#158ecb">473</text><text x="912.2" y="951.2" fill="#159ec9">474</text><text x="910.4" y="959.3" fill="#15aec7">475</text><text x="909.9" y="967.3" fill="#15bec5">476</text><text x="908.7" y="975.4" fill="#1125a1">477</text><text x="908.1" y="983.5" fill="#1139a7">478</text><text x="906.4" y="991.6" fill="#1569cc">479</text><text x="905.1" y="1000.1" fill="#158ccc">480</text><text x="902.7" y="1008.0" fill="#31c531">481</text><text x="900.4" y="1016.0" fill="#38c52e">482</text><text x="896.4" y="1023.1" fill="#3fc52c">483</text><text x="894.8" y="1031.0" fill="#46c52a">484</text><text x="892.4" y="1039.7" fill="#4dc527">485</text><text x="889.3" y="1047.7" fill="#54c525">486</text><text x="887.7" y="1054.8" fill="#5bc523">487</text><text x="885.3" y="1062.7" fill="#62c520">488</text><text x="883.6" y="1070.6" fill="#69c51e">489</text><text x="882.0" y="1078.6" fill="#70c51c">490</text><text x="879.6" y="1086.5" fill="#89c517">491</text><text x="878.0" y="1094.4" fill="#a3c513">492</text><text x="875.6" y="1102.3" fill="#bcc50f">493</text><text x="873.3" y="1110.3" fill="#c7bc0f">494</text><text x="870.1" y="1118.2" fill="#cfa713">495</text><text x="868.5" y="1126.1" fill="#d39215">496</text><text x="866.9" y="1134.0" fill="#ceaa12">497</text><text x="866.1" y="1142.0" fill="#d39215">498</text><text x="864.5" y="1150.7" fill="#d37815">499</text><text x="856.6" y="1152.3" fill="#cf5c15">500</text><text x="848.7" y="1150.7" fill="#d38615">501</text><text x="840.8" y="1148.3" fill="#d37b15">502</text><text x="832.8" y="1146.0" fill="#cdad12">503</text><text x="824.9" y="1143.6" fill="#cbb211">504</text><text x="817.8" y="1139.6" fill="#cdab12">505</text><text x="809.9" y="1140.4" fill="#c8ba0f">506</text><text x="801.1" y="1140.4" fill="#9ac515">507</text><text x="794.0" y="1138.8" fill="#5bc523">508</text><text x="785.3" y="1138.0" fill="#1cc538">509</text><text x="786.1" y="1130.9" fill="#1ec537">510</text><text x="790.0" y="1125.5" fill="#21c536">511</text><text x="793.5" y="1120.0" fill="#24c535">512</text><text x="795.6" y="1114.5" fill="#26c534">513</text><text x="797.2" y="1108.7" fill="#29c533">514</text><text x="798.8" y="1100.8" fill="#2cc533">515</text><text x="800.3" y="1092.8" fill="#2ec532">516</text><text x="802.7" y="1084.9" fill="#31c531">517</text><text x="805.1" y="1077.0" fill="#33c530">518</text><text x="807.5" y="1069.1" fill="#36c52f">519</text><text x="808.3" y="1061.1" fill="#39c52e">520</text><text x="810.7" y="1053.2" fill="#3bc52d">521</text><text x="812.2" y="1045.3" fill="#3ec52c">522</text><text x="814.6" y="1036.6" fill="#41c52b">523</text><text x="816.2" y="1028.6" fill="#43c52b">524</text><text x="818.6" y="1020.7" fill="#46c52a">525</text><text x="820.2" y="1012.8" fill="#158ccc">526</text><text x="822.5" y="1004.9" fill="#1569cc">527</text><text x="824.3" y="996.6" fill="#1139a7">528</text><text x="826.3" y="989.0" fill="#1125a1">529</text><text x="828.7" y="981.5" fill="#d06015">530</text><text x="830.4" y="973.3" fill="#1122a0">531</text><text x="831.1" y="965.1" fill="#15b1c6">532</text><text x="833.9" y="956.9" fill="#111f9f">533</text><text x="835.9" y="949.3" fill="#111d9f">534</text><text x="837.3" y="941.1" fill="#111c9e">535</text><text x="838.6" y="932.9" fill="#111a9e">536</text><text x="838.6" y="924.7" fill="#11199d">537</text><text x="840.0" y="917.2" fill="#d06015">538</text><text x="844.1" y="909.6" fill="#15b1c6">539</text><text x="846.2" y="902.1" fill="#15b3c6">540</text><text x="847.5" y="894.6" fill="#15b4c6">541</text><text x="849.6" y="886.4" fill="#15b5c6">542</text><text x="851.7" y="878.1" fill="#15b7c6">543</text><text x="853.0" y="869.9" fill="#15b8c5">544</text><text x="854.4" y="861.7" fill="#15b9c5">545</text><text x="855.8" y="854.2" fill="#15bbc5">546</text><text x="858.5" y="845.3" fill="#15bcc5">547</text><text x="853.7" y="841.2" fill="#15bec5">548</text><text x="845.5" y="840.5" fill="#15bfbc">549</text><text x="838.0" y="839.8" fill="#15c0b3">550</text><text x="830.4" y="836.1" fill="#15c1a9">551</text><text x="822.2" y="836.1" fill="#15c2a0">552</text><text x="814.0" y="836.1" fill="#15c397">553</text><text x="805.8" y="835.7" fill="#15c48e">554</text><text x="797.6" y="834.3" fill="#15c585">555</text><text x="789.4" y="833.6" fill="#16c576">556</text><text x="785.9" y="841.9" fill="#1cc538">557</text><text x="785.3" y="849.4" fill="#1ac546">558</text><text x="784.6" y="857.6" fill="#19c553">559</text><text x="783.9" y="865.1" fill="#18c561">560</text><text x="782.5" y="873.3" fill="#17c56f">561</text><text x="781.1" y="881.6" fill="#15c57d">562</text><text x="780.5" y="891.1" fill="#15c488">563</text><text x="779.8" y="898.7" fill="#15c390">564</text><text x="779.1" y="906.9" fill="#15c298">565</text><text x="777.7" y="914.4" fill="#15c2a0">566</text><text x="776.4" y="922.6" fill="#15c0ae">567</text><text x="775.0" y="930.9" fill="#15bfbc">568</text><text x="773.6" y="938.4" fill="#15bbc5">569</text><text x="772.2" y="946.6" fill="#15b1c6">570</text><text x="772.0" y="955.5" fill="#158ccc">571</text><text x="770.6" y="963.0" fill="#1587cc">572</text><text x="769.5" y="971.2" fill="#1582cc">573</text><text x="768.8" y="979.5" fill="#157dcc">574</text><text x="768.1" y="987.7" fill="#1578cc">575</text><text x="767.1" y="996.1" fill="#1573cc">576</text><text x="766.3" y="1004.1" fill="#156ecc">577</text><text x="763.9" y="1012.0" fill="#1569cc">578</text><text x="762.3" y="1019.9" fill="#1143a7">579</text><text x="761.5" y="1027.8" fill="#1133a5">580</text><text x="759.1" y="1035.8" fill="#1126a1">581</text><text x="756.8" y="1043.7" fill="#11199d">582</text><text x="754.4" y="1051.6" fill="#15bec5">583</text><text x="753.6" y="1059.5" fill="#111b9e">584</text><text x="752.0" y="1067.5" fill="#d06015">585</text><text x="750.4" y="1076.2" fill="#111c9e">586</text><text x="749.6" y="1084.1" fill="#111d9f">587</text><text x="748.0" y="1092.0" fill="#111e9f">588</text><text x="746.4" y="1100.0" fill="#111f9f">589</text><text x="744.9" y="1107.9" fill="#11209f">590</text><text x="744.9" y="1115.8" fill="#1121a0">591</text><text x="744.9" y="1124.5" fill="#1121a0">592</text><text x="745.7" y="1132.5" fill="#1122a0">593</text><text x="745.7" y="1141.2" fill="#1123a0">594</text><text x="744.9" y="1149.1" fill="#1cc538">595</text><text x="744.1" y="1157.0" fill="#1cc538">596</text><text x="736.9" y="1161.0" fill="#5bc523">597</text><text x="729.0" y="1161.0" fill="#64c520">598</text><text x="721.1" y="1164.2" fill="#6dc51d">599</text><text x="713.2" y="1165.8" fill="#76c51b">600</text><text x="705.2" y="1168.1" fill="#7fc519">601</text><text x="697.3" y="1169.7" fill="#88c518">602</text><text x="690.0" y="1173.5" fill="#91c516">603</text><text x="683.0" y="1177.6" fill="#9ac515">604</text><text x="675.1" y="1181.6" fill="#60c521">605</text><text x="672.7" y="1176.1" fill="#26c534">606</text><text x="677.5" y="1168.9" fill="#15c57e">607</text><text x="676.7" y="1160.2" fill="#15c0b3">608</text><text x="677.5" y="1152.3" fill="#159fc9">609</text><text x="679.9" y="1145.1" fill="#1570cc">610</text><text x="677.5" y="1138.0" fill="#1135a5">611</text><text x="672.7" y="1130.9" fill="#11199d">612</text><text x="669.6" y="1123.7" fill="#111c9e">613</text><text x="670.4" y="1115.8" fill="#d06015">614</text><text x="668.8" y="1107.1" fill="#1122a0">615</text><text x="664.0" y="1098.4" fill="#1125a1">616</text><text x="664.8" y="1092.0" fill="#15c585">617</text><text x="667.2" y="1084.1" fill="#15c57f">618</text><text x="670.4" y="1076.2" fill="#16c579">619</text><text x="671.9" y="1068.3" fill="#16c573">620</text><text x="671.9" y="1060.3" fill="#17c56c">621</text><text x="673.5" y="1052.4" fill="#17c566">622</text><text x="675.1" y="1044.5" fill="#18c55d">623</text><text x="675.9" y="1035.8" fill="#19c553">624</text><text x="676.7" y="1027.8" fill="#1ac549">625</text><text x="676.7" y="1019.1" fill="#1bc540">626</text><text x="678.3" y="1012.0" fill="#1dc537">627</text><text x="680.7" y="1003.3" fill="#24c535">628</text><text x="682.2" y="995.3" fill="#2ac533">629</text><text x="681.9" y="987.0" fill="#31c531">630</text><text x="682.6" y="980.1" fill="#36c52f">631</text><text x="683.9" y="971.9" fill="#3bc52d">632</text><text x="686.3" y="963.0" fill="#41c52b">633</text><text x="687.4" y="954.8" fill="#46c52a">634</text><text x="689.4" y="946.6" fill="#4bc528">635</text><text x="689.4" y="937.7" fill="#50c526">636</text><text x="690.4" y="930.2" fill="#56c524">637</text><text x="692.8" y="922.6" fill="#5bc523">638</text><text x="695.5" y="915.0" fill="#60c521">639</text><text x="698.0" y="907.6" fill="#66c51f">640</text><text x="700.4" y="899.4" fill="#6bc51d">641</text><text x="702.4" y="891.8" fill="#70c51c">642</text><text x="704.5" y="883.6" fill="#75c51b">643</text><text x="706.8" y="876.0" fill="#7bc51a">644</text><text x="709.3" y="867.9" fill="#80c519">645</text><text x="709.9" y="860.3" fill="#85c518">646</text><text x="709.9" y="851.4" fill="#8bc517">647</text><text x="711.3" y="843.9" fill="#90c516">648</text><text x="714.7" y="836.4" fill="#95c516">649</text><text x="720.2" y="828.9" fill="#9ac515">650</text><text x="723.0" y="822.7" fill="#a5c513">651</text><text x="731.2" y="822.7" fill="#b0c511">652</text><text x="739.5" y="824.0" fill="#bac50f">653</text><text x="746.9" y="825.2" fill="#c5c50e">654</text></g>
<rect x="1163.0" y="795.0" width="5.2" height="5.2" fill="#e22818"/><rect x="1158.5" y="800.8" width="5.2" height="5.2" fill="#eb6718"/><rect x="1155.7" y="805.8" width="5.2" height="5.2" fill="#f09918"/><rect x="1161.0" y="803.8" width="5.2" height="5.2" fill="#ee7418"/><rect x="1165.3" y="810.1" width="5.2" height="5.2" fill="#f08518"/><rect x="1169.1" y="818.2" width="5.2" height="5.2" fill="#f0a118"/><rect x="1172.1" y="825.7" width="5.2" height="5.2" fill="#ef7d18"/><rect x="1177.7" y="831.3" width="5.2" height="5.2" fill="#f0a618"/><rect x="1185.7" y="833.8" width="5.2" height="5.2" fill="#e4d312"/><rect x="1193.8" y="835.8" width="5.2" height="5.2" fill="#68e027"/><rect x="1201.7" y="836.2" width="5.2" height="5.2" fill="#68e027"/><rect x="1209.6" y="835.7" width="5.2" height="5.2" fill="#68e027"/><rect x="1218.1" y="834.9" width="5.2" height="5.2" fill="#68e027"/><rect x="1225.9" y="833.8" width="5.2" height="5.2" fill="#68e027"/><rect x="1234.0" y="832.5" width="5.2" height="5.2" fill="#68e027"/><rect x="1241.9" y="830.6" width="5.2" height="5.2" fill="#68e027"/><rect x="1249.4" y="826.8" width="5.2" height="5.2" fill="#eb6618"/><rect x="1256.5" y="823.1" width="5.2" height="5.2" fill="#f08518"/><rect x="1263.1" y="818.4" width="5.2" height="5.2" fill="#f09418"/><rect x="1270.2" y="814.1" width="5.2" height="5.2" fill="#eb6318"/><rect x="1277.7" y="810.9" width="5.2" height="5.2" fill="#efb217"/><rect x="1285.0" y="806.6" width="5.2" height="5.2" fill="#ec6d18"/><rect x="1291.6" y="802.5" width="5.2" height="5.2" fill="#e2d911"/><rect x="1299.3" y="801.0" width="5.2" height="5.2" fill="#e3d411"/><rect x="1306.2" y="796.5" width="5.2" height="5.2" fill="#e0e010"/><rect x="1313.7" y="793.5" width="5.2" height="5.2" fill="#b0e018"/><rect x="1320.9" y="789.3" width="5.2" height="5.2" fill="#aee018"/><rect x="1327.8" y="785.0" width="5.2" height="5.2" fill="#ade018"/><rect x="1334.7" y="780.3" width="5.2" height="5.2" fill="#ace018"/><rect x="1341.5" y="776.2" width="5.2" height="5.2" fill="#abe018"/><rect x="1348.4" y="771.9" width="5.2" height="5.2" fill="#aae018"/><rect x="1354.4" y="765.9" width="5.2" height="5.2" fill="#a9e019"/><rect x="1361.2" y="761.2" width="5.2" height="5.2" fill="#a8e019"/><rect x="1367.8" y="756.5" width="5.2" height="5.2" fill="#a7e019"/><rect x="1374.1" y="751.4" width="5.2" height="5.2" fill="#a6e019"/><rect x="1380.7" y="747.1" width="5.2" height="5.2" fill="#a5e019"/><rect x="1387.8" y="742.4" width="5.2" height="5.2" fill="#a4e01a"/><rect x="1395.3" y="738.7" width="5.2" height="5.2" fill="#a2e01a"/><rect x="1402.3" y="735.9" width="5.2" height="5.2" fill="#a1e01a"/><rect x="1409.4" y="731.2" width="5.2" height="5.2" fill="#a0e01a"/><rect x="1416.5" y="727.4" width="5.2" height="5.2" fill="#9fe01a"/><rect x="1423.5" y="722.7" width="5.2" height="5.2" fill="#9ee01a"/><rect x="1430.4" y="718.0" width="5.2" height="5.2" fill="#9de01b"/><rect x="1437.5" y="714.9" width="5.2" height="5.2" fill="#9ce01b"/><rect x="1445.0" y="711.9" width="5.2" height="5.2" fill="#9be01b"/><rect x="1452.5" y="709.0" width="5.2" height="5.2" fill="#9ae01b"/><rect x="1460.4" y="706.8" width="5.2" height="5.2" fill="#99e01b"/><rect x="1467.9" y="703.4" width="5.2" height="5.2" fill="#98e01c"/><rect x="1475.4" y="699.7" width="5.2" height="5.2" fill="#e2d911"/><rect x="1483.5" y="697.4" width="5.2" height="5.2" fill="#f09718"/><rect x="1491.0" y="693.7" width="5.2" height="5.2" fill="#e3d611"/><rect x="1497.9" y="689.5" width="5.2" height="5.2" fill="#eeb517"/><rect x="1505.1" y="686.2" width="5.2" height="5.2" fill="#f09018"/><rect x="1512.6" y="683.4" width="5.2" height="5.2" fill="#ecba16"/><rect x="1520.6" y="680.9" width="5.2" height="5.2" fill="#f09518"/><rect x="1527.8" y="682.9" width="5.2" height="5.2" fill="#efb217"/><rect x="1531.8" y="689.4" width="5.2" height="5.2" fill="#80e020"/><rect x="1534.4" y="697.2" width="5.2" height="5.2" fill="#83e01f"/><rect x="1537.7" y="705.0" width="5.2" height="5.2" fill="#88e01e"/><rect x="1540.3" y="712.8" width="5.2" height="5.2" fill="#8ce01e"/><rect x="1542.9" y="720.5" width="5.2" height="5.2" fill="#8fe01d"/><rect x="1544.8" y="727.7" width="5.2" height="5.2" fill="#94e01c"/><rect x="1547.4" y="735.5" width="5.2" height="5.2" fill="#98e01c"/><rect x="1549.3" y="743.9" width="5.2" height="5.2" fill="#b0e018"/><rect x="1551.9" y="751.7" width="5.2" height="5.2" fill="#f0a318"/><rect x="1555.2" y="759.4" width="5.2" height="5.2" fill="#a0e01a"/><rect x="1556.5" y="767.2" width="5.2" height="5.2" fill="#98e01c"/><rect x="1557.8" y="775.0" width="5.2" height="5.2" fill="#67e028"/><rect x="1559.1" y="783.4" width="5.2" height="5.2" fill="#f0a318"/><rect x="1558.4" y="791.9" width="5.2" height="5.2" fill="#1ce063"/><rect x="1559.7" y="799.6" width="5.2" height="5.2" fill="#3fe035"/><rect x="1561.0" y="807.4" width="5.2" height="5.2" fill="#78e022"/><rect x="1562.3" y="815.2" width="5.2" height="5.2" fill="#b0e018"/><rect x="1564.9" y="823.6" width="5.2" height="5.2" fill="#1823db"/><rect x="1566.8" y="831.4" width="5.2" height="5.2" fill="#1823db"/><rect x="1568.8" y="839.2" width="5.2" height="5.2" fill="#1823db"/><rect x="1570.3" y="847.6" width="5.2" height="5.2" fill="#1823db"/><rect x="1571.0" y="855.5" width="5.2" height="5.2" fill="#1823db"/><rect x="1571.8" y="863.4" width="5.2" height="5.2" fill="#18e098"/><rect x="1571.8" y="872.1" width="5.2" height="5.2" fill="#98e01c"/><rect x="1571.8" y="880.0" width="5.2" height="5.2" fill="#e4d312"/><rect x="1571.8" y="888.6" width="5.2" height="5.2" fill="#c5e014"/><rect x="1572.5" y="896.6" width="5.2" height="5.2" fill="#f08d18"/><rect x="1575.4" y="905.2" width="5.2" height="5.2" fill="#e9c214"/><rect x="1575.4" y="912.4" width="5.2" height="5.2" fill="#edb716"/><rect x="1573.2" y="920.4" width="5.2" height="5.2" fill="#f0aa18"/><rect x="1571.8" y="928.3" width="5.2" height="5.2" fill="#f08118"/><rect x="1570.3" y="936.2" width="5.2" height="5.2" fill="#e9c214"/><rect x="1569.6" y="944.9" width="5.2" height="5.2" fill="#f0a218"/><rect x="1569.6" y="952.8" width="5.2" height="5.2" fill="#f09918"/><rect x="1568.9" y="960.7" width="5.2" height="5.2" fill="#ef7c18"/><rect x="1565.3" y="968.6" width="5.2" height="5.2" fill="#f08018"/><rect x="1564.6" y="976.6" width="5.2" height="5.2" fill="#ef7c18"/><rect x="1562.4" y="984.5" width="5.2" height="5.2" fill="#f0ac18"/><rect x="1560.2" y="992.4" width="5.2" height="5.2" fill="#f0a018"/><rect x="1558.8" y="1000.3" width="5.2" height="5.2" fill="#f0a318"/><rect x="1557.3" y="1008.3" width="5.2" height="5.2" fill="#ee7718"/><rect x="1554.5" y="1016.2" width="5.2" height="5.2" fill="#e22818"/><rect x="1553.0" y="1024.1" width="5.2" height="5.2" fill="#eac115"/><rect x="1550.8" y="1032.3" width="5.2" height="5.2" fill="#e0e010"/><rect x="1549.5" y="1040.7" width="5.2" height="5.2" fill="#e0e010"/><rect x="1547.6" y="1048.5" width="5.2" height="5.2" fill="#ecba16"/><rect x="1546.3" y="1056.3" width="5.2" height="5.2" fill="#e4d312"/><rect x="1546.9" y="1064.7" width="5.2" height="5.2" fill="#e0e010"/><rect x="1546.3" y="1072.5" width="5.2" height="5.2" fill="#38e037"/><rect x="1545.6" y="1080.9" width="5.2" height="5.2" fill="#98e01c"/><rect x="1543.1" y="1088.1" width="5.2" height="5.2" fill="#e0e010"/><rect x="1542.4" y="1096.5" width="5.2" height="5.2" fill="#e4d312"/><rect x="1543.7" y="1104.9" width="5.2" height="5.2" fill="#f09218"/><rect x="1543.7" y="1112.7" width="5.2" height="5.2" fill="#e74d18"/><rect x="1537.2" y="1117.3" width="5.2" height="5.2" fill="#ea6118"/><rect x="1529.4" y="1119.2" width="5.2" height="5.2" fill="#ed6e18"/><rect x="1521.7" y="1120.5" width="5.2" height="5.2" fill="#eb6418"/><rect x="1513.9" y="1121.8" width="5.2" height="5.2" fill="#ea5d18"/><rect x="1505.4" y="1123.7" width="5.2" height="5.2" fill="#f08f18"/><rect x="1497.7" y="1126.3" width="5.2" height="5.2" fill="#e64318"/><rect x="1489.9" y="1128.3" width="5.2" height="5.2" fill="#eb6618"/><rect x="1482.1" y="1131.5" width="5.2" height="5.2" fill="#eb6318"/><rect x="1475.0" y="1134.8" width="5.2" height="5.2" fill="#eb6218"/><rect x="1467.2" y="1138.0" width="5.2" height="5.2" fill="#ea6018"/><rect x="1459.4" y="1140.6" width="5.2" height="5.2" fill="#ea5d18"/><rect x="1452.9" y="1138.0" width="5.2" height="5.2" fill="#ea5c18"/><rect x="1449.7" y="1130.2" width="5.2" height="5.2" fill="#eb6218"/><rect x="1449.0" y="1122.4" width="5.2" height="5.2" fill="#f08c18"/><rect x="1451.0" y="1114.7" width="5.2" height="5.2" fill="#f09a18"/><rect x="1452.3" y="1106.2" width="5.2" height="5.2" fill="#f09d18"/><rect x="1452.9" y="1098.4" width="5.2" height="5.2" fill="#f0af18"/><rect x="1454.2" y="1090.0" width="5.2" height="5.2" fill="#f0af18"/><rect x="1456.2" y="1081.6" width="5.2" height="5.2" fill="#e3d511"/><rect x="1458.1" y="1073.8" width="5.2" height="5.2" fill="#e6cc13"/><rect x="1459.4" y="1066.0" width="5.2" height="5.2" fill="#cfe012"/><rect x="1459.4" y="1057.6" width="5.2" height="5.2" fill="#98e01c"/><rect x="1459.4" y="1049.2" width="5.2" height="5.2" fill="#20e040"/><rect x="1459.4" y="1041.4" width="5.2" height="5.2" fill="#18dacb"/><rect x="1459.4" y="1033.0" width="5.2" height="5.2" fill="#ee7818"/><rect x="1460.1" y="1025.2" width="5.2" height="5.2" fill="#f08e18"/><rect x="1460.1" y="1016.2" width="5.2" height="5.2" fill="#eeb517"/><rect x="1461.5" y="1008.3" width="5.2" height="5.2" fill="#f0ac18"/><rect x="1462.2" y="1000.3" width="5.2" height="5.2" fill="#f0a418"/><rect x="1463.0" y="992.4" width="5.2" height="5.2" fill="#f0a318"/><rect x="1465.8" y="984.5" width="5.2" height="5.2" fill="#e1db10"/><rect x="1465.8" y="976.6" width="5.2" height="5.2" fill="#f0a618"/><rect x="1465.8" y="968.6" width="5.2" height="5.2" fill="#e7cb13"/><rect x="1465.8" y="960.7" width="5.2" height="5.2" fill="#e4d212"/><rect x="1467.3" y="952.1" width="5.2" height="5.2" fill="#e1da10"/><rect x="1467.3" y="944.1" width="5.2" height="5.2" fill="#dce010"/><rect x="1467.4" y="934.4" width="5.2" height="5.2" fill="#cee013"/><rect x="1467.4" y="926.4" width="5.2" height="5.2" fill="#bee015"/><rect x="1467.4" y="918.4" width="5.2" height="5.2" fill="#b0e018"/><rect x="1467.4" y="910.4" width="5.2" height="5.2" fill="#38e037"/><rect x="1467.4" y="902.4" width="5.2" height="5.2" fill="#2ce03b"/><rect x="1467.4" y="894.4" width="5.2" height="5.2" fill="#20e040"/><rect x="1467.3" y="886.5" width="5.2" height="5.2" fill="#18d8e0"/><rect x="1468.0" y="878.6" width="5.2" height="5.2" fill="#18a0e8"/><rect x="1467.3" y="869.9" width="5.2" height="5.2" fill="#1823db"/><rect x="1468.0" y="861.3" width="5.2" height="5.2" fill="#1823db"/><rect x="1467.3" y="853.3" width="5.2" height="5.2" fill="#1823db"/><rect x="1467.3" y="845.4" width="5.2" height="5.2" fill="#1823db"/><rect x="1466.6" y="837.5" width="5.2" height="5.2" fill="#1823db"/><rect x="1458.6" y="836.0" width="5.2" height="5.2" fill="#1833e0"/><rect x="1450.0" y="835.3" width="5.2" height="5.2" fill="#183de2"/><rect x="1442.1" y="836.8" width="5.2" height="5.2" fill="#1846e5"/><rect x="1434.1" y="837.5" width="5.2" height="5.2" fill="#1850e8"/><rect x="1426.2" y="838.2" width="5.2" height="5.2" fill="#1878e8"/><rect x="1418.3" y="841.1" width="5.2" height="5.2" fill="#18a0e8"/><rect x="1410.4" y="842.5" width="5.2" height="5.2" fill="#18c3e3"/><rect x="1402.4" y="845.4" width="5.2" height="5.2" fill="#1ce063"/><rect x="1394.5" y="846.4" width="5.2" height="5.2" fill="#1de05e"/><rect x="1385.9" y="846.4" width="5.2" height="5.2" fill="#1de05a"/><rect x="1377.9" y="846.4" width="5.2" height="5.2" fill="#1de056"/><rect x="1370.0" y="846.1" width="5.2" height="5.2" fill="#1ee051"/><rect x="1367.8" y="854.1" width="5.2" height="5.2" fill="#1ee04d"/><rect x="1366.4" y="862.0" width="5.2" height="5.2" fill="#1fe048"/><rect x="1368.6" y="870.6" width="5.2" height="5.2" fill="#1fe044"/><rect x="1371.4" y="878.6" width="5.2" height="5.2" fill="#20e040"/><rect x="1372.2" y="886.5" width="5.2" height="5.2" fill="#18d8e0"/><rect x="1372.9" y="895.1" width="5.2" height="5.2" fill="#1890e8"/><rect x="1372.9" y="903.1" width="5.2" height="5.2" fill="#1823db"/><rect x="1374.3" y="911.0" width="5.2" height="5.2" fill="#1823db"/><rect x="1373.6" y="918.9" width="5.2" height="5.2" fill="#1823db"/><rect x="1373.6" y="927.6" width="5.2" height="5.2" fill="#18d8e0"/><rect x="1372.2" y="936.2" width="5.2" height="5.2" fill="#1823db"/><rect x="1372.2" y="944.1" width="5.2" height="5.2" fill="#1823db"/><rect x="1372.2" y="952.1" width="5.2" height="5.2" fill="#1823db"/><rect x="1371.4" y="960.0" width="5.2" height="5.2" fill="#1823db"/><rect x="1371.4" y="968.6" width="5.2" height="5.2" fill="#1823db"/><rect x="1371.4" y="976.6" width="5.2" height="5.2" fill="#1823db"/><rect x="1371.4" y="984.5" width="5.2" height="5.2" fill="#1823db"/><rect x="1371.4" y="993.1" width="5.2" height="5.2" fill="#1823db"/><rect x="1372.2" y="1001.1" width="5.2" height="5.2" fill="#18d8e0"/><rect x="1372.9" y="1009.7" width="5.2" height="5.2" fill="#18e098"/><rect x="1372.5" y="1018.7" width="5.2" height="5.2" fill="#20e040"/><rect x="1372.5" y="1026.5" width="5.2" height="5.2" fill="#2ee03b"/><rect x="1372.5" y="1034.3" width="5.2" height="5.2" fill="#3ee035"/><rect x="1372.5" y="1042.7" width="5.2" height="5.2" fill="#4de031"/><rect x="1373.8" y="1050.5" width="5.2" height="5.2" fill="#5ce02b"/><rect x="1375.1" y="1058.9" width="5.2" height="5.2" fill="#6be026"/><rect x="1377.1" y="1066.7" width="5.2" height="5.2" fill="#79e022"/><rect x="1377.7" y="1075.1" width="5.2" height="5.2" fill="#89e01e"/><rect x="1379.0" y="1082.9" width="5.2" height="5.2" fill="#98e01c"/><rect x="1379.6" y="1091.3" width="5.2" height="5.2" fill="#e0e010"/><rect x="1381.6" y="1099.1" width="5.2" height="5.2" fill="#e0de10"/><rect x="1383.5" y="1106.9" width="5.2" height="5.2" fill="#e1db10"/><rect x="1384.8" y="1114.7" width="5.2" height="5.2" fill="#e2da11"/><rect x="1387.4" y="1123.1" width="5.2" height="5.2" fill="#e2d811"/><rect x="1390.7" y="1130.9" width="5.2" height="5.2" fill="#e3d511"/><rect x="1392.6" y="1138.7" width="5.2" height="5.2" fill="#e4d312"/><rect x="1394.6" y="1146.4" width="5.2" height="5.2" fill="#efb217"/><rect x="1397.2" y="1154.2" width="5.2" height="5.2" fill="#f08a18"/><rect x="1389.4" y="1157.4" width="5.2" height="5.2" fill="#ef7c18"/><rect x="1381.6" y="1158.1" width="5.2" height="5.2" fill="#f0ac18"/><rect x="1373.2" y="1159.4" width="5.2" height="5.2" fill="#f0ac18"/><rect x="1365.4" y="1160.1" width="5.2" height="5.2" fill="#ef7e18"/><rect x="1357.0" y="1161.4" width="5.2" height="5.2" fill="#f09118"/><rect x="1349.2" y="1161.4" width="5.2" height="5.2" fill="#eabf15"/><rect x="1340.7" y="1162.6" width="5.2" height="5.2" fill="#e9c314"/><rect x="1333.0" y="1163.3" width="5.2" height="5.2" fill="#eac115"/><rect x="1324.5" y="1164.6" width="5.2" height="5.2" fill="#f08118"/><rect x="1317.0" y="1166.6" width="5.2" height="5.2" fill="#f08a18"/><rect x="1309.2" y="1169.1" width="5.2" height="5.2" fill="#eac115"/><rect x="1301.4" y="1171.1" width="5.2" height="5.2" fill="#f08818"/><rect x="1293.6" y="1174.3" width="5.2" height="5.2" fill="#ef7b18"/><rect x="1284.5" y="1175.6" width="5.2" height="5.2" fill="#b0e018"/><rect x="1285.2" y="1167.8" width="5.2" height="5.2" fill="#8ce01d"/><rect x="1285.8" y="1159.4" width="5.2" height="5.2" fill="#68e027"/><rect x="1287.1" y="1151.6" width="5.2" height="5.2" fill="#5ee02b"/><rect x="1287.8" y="1143.2" width="5.2" height="5.2" fill="#54e02e"/><rect x="1287.8" y="1135.4" width="5.2" height="5.2" fill="#4be031"/><rect x="1288.4" y="1127.6" width="5.2" height="5.2" fill="#41e034"/><rect x="1289.1" y="1119.2" width="5.2" height="5.2" fill="#38e037"/><rect x="1289.1" y="1110.8" width="5.2" height="5.2" fill="#1fe047"/><rect x="1289.7" y="1103.0" width="5.2" height="5.2" fill="#1be071"/><rect x="1289.7" y="1094.6" width="5.2" height="5.2" fill="#18df9a"/><rect x="1289.1" y="1086.8" width="5.2" height="5.2" fill="#18ddb2"/><rect x="1289.1" y="1078.3" width="5.2" height="5.2" fill="#18dacb"/><rect x="1287.8" y="1069.9" width="5.2" height="5.2" fill="#18a0e8"/><rect x="1287.1" y="1062.1" width="5.2" height="5.2" fill="#18a0e8"/><rect x="1286.5" y="1053.7" width="5.2" height="5.2" fill="#18a0e8"/><rect x="1285.8" y="1045.3" width="5.2" height="5.2" fill="#18a0e8"/><rect x="1285.2" y="1036.9" width="5.2" height="5.2" fill="#18a0e8"/><rect x="1284.5" y="1029.1" width="5.2" height="5.2" fill="#18a0e8"/><rect x="1283.2" y="1021.3" width="5.2" height="5.2" fill="#18a0e8"/><rect x="1282.7" y="1012.9" width="5.2" height="5.2" fill="#18a0e8"/><rect x="1282.1" y="1004.3" width="5.2" height="5.2" fill="#18a0e8"/><rect x="1282.1" y="996.4" width="5.2" height="5.2" fill="#20e040"/><rect x="1281.5" y="988.4" width="5.2" height="5.2" fill="#1850e8"/><rect x="1280.9" y="980.5" width="5.2" height="5.2" fill="#1849e6"/><rect x="1279.6" y="971.9" width="5.2" height="5.2" fill="#1841e4"/><rect x="1278.4" y="963.9" width="5.2" height="5.2" fill="#183be2"/><rect x="1277.2" y="955.4" width="5.2" height="5.2" fill="#1833e0"/><rect x="1276.6" y="947.4" width="5.2" height="5.2" fill="#20e040"/><rect x="1276.6" y="938.8" width="5.2" height="5.2" fill="#1823db"/><rect x="1276.6" y="930.9" width="5.2" height="5.2" fill="#1821da"/><rect x="1276.6" y="922.9" width="5.2" height="5.2" fill="#181fda"/><rect x="1276.0" y="914.9" width="5.2" height="5.2" fill="#181dd9"/><rect x="1275.4" y="907.0" width="5.2" height="5.2" fill="#181bd9"/><rect x="1274.1" y="899.0" width="5.2" height="5.2" fill="#1819d8"/><rect x="1272.9" y="889.8" width="5.2" height="5.2" fill="#1818d8"/><rect x="1269.2" y="884.3" width="5.2" height="5.2" fill="#20e040"/><rect x="1260.7" y="883.1" width="5.2" height="5.2" fill="#1818d8"/><rect x="1252.7" y="883.1" width="5.2" height="5.2" fill="#1818d8"/><rect x="1244.7" y="883.7" width="5.2" height="5.2" fill="#1819d8"/><rect x="1236.2" y="884.3" width="5.2" height="5.2" fill="#1819d8"/><rect x="1228.2" y="884.9" width="5.2" height="5.2" fill="#181ad8"/><rect x="1219.6" y="885.6" width="5.2" height="5.2" fill="#181bd8"/><rect x="1211.7" y="885.6" width="5.2" height="5.2" fill="#181bd9"/><rect x="1203.1" y="886.8" width="5.2" height="5.2" fill="#181cd9"/><rect x="1195.2" y="888.0" width="5.2" height="5.2" fill="#181dd9"/><rect x="1187.2" y="887.4" width="5.2" height="5.2" fill="#181dd9"/><rect x="1178.6" y="889.2" width="5.2" height="5.2" fill="#181ed9"/><rect x="1174.3" y="894.7" width="5.2" height="5.2" fill="#181fda"/><rect x="1174.3" y="903.3" width="5.2" height="5.2" fill="#181fda"/><rect x="1175.6" y="911.3" width="5.2" height="5.2" fill="#1820da"/><rect x="1176.8" y="919.2" width="5.2" height="5.2" fill="#ed6e18"/><rect x="1177.4" y="927.2" width="5.2" height="5.2" fill="#1821da"/><rect x="1178.6" y="935.2" width="5.2" height="5.2" fill="#1822db"/><rect x="1180.5" y="943.1" width="5.2" height="5.2" fill="#1823db"/><rect x="1181.7" y="951.1" width="5.2" height="5.2" fill="#18a0e8"/><rect x="1182.9" y="959.0" width="5.2" height="5.2" fill="#18a4e7"/><rect x="1184.1" y="967.0" width="5.2" height="5.2" fill="#18a8e6"/><rect x="1185.4" y="975.6" width="5.2" height="5.2" fill="#18ade6"/><rect x="1186.6" y="983.5" width="5.2" height="5.2" fill="#18b1e5"/><rect x="1187.2" y="991.5" width="5.2" height="5.2" fill="#18b5e4"/><rect x="1188.4" y="999.4" width="5.2" height="5.2" fill="#18bae4"/><rect x="1189.6" y="1008.0" width="5.2" height="5.2" fill="#18bee3"/><rect x="1190.9" y="1016.0" width="5.2" height="5.2" fill="#18c3e3"/><rect x="1192.1" y="1023.9" width="5.2" height="5.2" fill="#18cfe1"/><rect x="1193.7" y="1033.0" width="5.2" height="5.2" fill="#18d8da"/><rect x="1195.0" y="1041.4" width="5.2" height="5.2" fill="#18dac8"/><rect x="1196.3" y="1048.5" width="5.2" height="5.2" fill="#18dcb6"/><rect x="1199.6" y="1056.3" width="5.2" height="5.2" fill="#20e040"/><rect x="1200.9" y="1064.7" width="5.2" height="5.2" fill="#25e03e"/><rect x="1202.2" y="1072.5" width="5.2" height="5.2" fill="#2ae03c"/><rect x="1203.4" y="1080.9" width="5.2" height="5.2" fill="#2fe03a"/><rect x="1204.8" y="1088.7" width="5.2" height="5.2" fill="#35e038"/><rect x="1206.1" y="1097.1" width="5.2" height="5.2" fill="#3ae037"/><rect x="1207.4" y="1104.9" width="5.2" height="5.2" fill="#40e035"/><rect x="1209.3" y="1112.7" width="5.2" height="5.2" fill="#45e033"/><rect x="1210.6" y="1121.2" width="5.2" height="5.2" fill="#4ae031"/><rect x="1212.6" y="1128.9" width="5.2" height="5.2" fill="#50e02f"/><rect x="1213.2" y="1137.4" width="5.2" height="5.2" fill="#80e020"/><rect x="1213.9" y="1145.2" width="5.2" height="5.2" fill="#98e01c"/><rect x="1215.1" y="1153.6" width="5.2" height="5.2" fill="#b0e018"/><rect x="1215.8" y="1161.3" width="5.2" height="5.2" fill="#ec6b18"/><rect x="1217.7" y="1169.1" width="5.2" height="5.2" fill="#eb6518"/><rect x="1213.2" y="1173.7" width="5.2" height="5.2" fill="#f0a518"/><rect x="1205.4" y="1174.4" width="5.2" height="5.2" fill="#ec6818"/><rect x="1197.0" y="1175.0" width="5.2" height="5.2" fill="#f09718"/><rect x="1189.2" y="1175.0" width="5.2" height="5.2" fill="#f09018"/><rect x="1180.8" y="1175.0" width="5.2" height="5.2" fill="#eb6718"/><rect x="1173.0" y="1176.3" width="5.2" height="5.2" fill="#ee7518"/><rect x="1165.2" y="1173.7" width="5.2" height="5.2" fill="#f0ae18"/><rect x="1156.8" y="1172.4" width="5.2" height="5.2" fill="#f09818"/><rect x="1149.0" y="1171.1" width="5.2" height="5.2" fill="#f09218"/><rect x="1141.2" y="1169.1" width="5.2" height="5.2" fill="#f0a118"/><rect x="1132.8" y="1167.2" width="5.2" height="5.2" fill="#f0ae18"/><rect x="1125.0" y="1165.2" width="5.2" height="5.2" fill="#f0a418"/><rect x="1117.2" y="1163.9" width="5.2" height="5.2" fill="#f08318"/><rect x="1109.4" y="1161.3" width="5.2" height="5.2" fill="#eabf15"/><rect x="1102.3" y="1158.1" width="5.2" height="5.2" fill="#f09318"/><rect x="1103.0" y="1150.3" width="5.2" height="5.2" fill="#e6cd13"/><rect x="1103.0" y="1141.9" width="5.2" height="5.2" fill="#e6ce12"/><rect x="1103.0" y="1134.1" width="5.2" height="5.2" fill="#e3d411"/><rect x="1103.0" y="1125.4" width="5.2" height="5.2" fill="#e2da11"/><rect x="1103.6" y="1117.2" width="5.2" height="5.2" fill="#e0e010"/><rect x="1104.3" y="1109.4" width="5.2" height="5.2" fill="#80e020"/><rect x="1104.4" y="1101.4" width="5.2" height="5.2" fill="#79e022"/><rect x="1104.4" y="1093.4" width="5.2" height="5.2" fill="#72e024"/><rect x="1104.6" y="1085.4" width="5.2" height="5.2" fill="#6be026"/><rect x="1104.6" y="1077.4" width="5.2" height="5.2" fill="#64e029"/><rect x="1104.6" y="1068.4" width="5.2" height="5.2" fill="#5de02b"/><rect x="1104.6" y="1060.4" width="5.2" height="5.2" fill="#56e02d"/><rect x="1104.7" y="1052.4" width="5.2" height="5.2" fill="#50e02f"/><rect x="1104.7" y="1043.4" width="5.2" height="5.2" fill="#49e032"/><rect x="1104.8" y="1035.4" width="5.2" height="5.2" fill="#42e034"/><rect x="1104.8" y="1027.4" width="5.2" height="5.2" fill="#3be036"/><rect x="1104.5" y="1019.0" width="5.2" height="5.2" fill="#34e039"/><rect x="1105.2" y="1010.4" width="5.2" height="5.2" fill="#2de03b"/><rect x="1105.2" y="1002.4" width="5.2" height="5.2" fill="#26e03d"/><rect x="1105.2" y="994.4" width="5.2" height="5.2" fill="#20e040"/><rect x="1105.2" y="986.4" width="5.2" height="5.2" fill="#19e086"/><rect x="1105.2" y="978.0" width="5.2" height="5.2" fill="#18dcb6"/><rect x="1105.2" y="969.4" width="5.2" height="5.2" fill="#18d8e0"/><rect x="1105.2" y="961.5" width="5.2" height="5.2" fill="#1898e8"/><rect x="1105.8" y="952.9" width="5.2" height="5.2" fill="#1850e8"/><rect x="1106.4" y="944.9" width="5.2" height="5.2" fill="#184be6"/><rect x="1107.6" y="937.6" width="5.2" height="5.2" fill="#1846e5"/><rect x="1109.4" y="929.6" width="5.2" height="5.2" fill="#1841e3"/><rect x="1110.1" y="921.1" width="5.2" height="5.2" fill="#183ce2"/><rect x="1110.7" y="912.5" width="5.2" height="5.2" fill="#1837e0"/><rect x="1111.3" y="903.9" width="5.2" height="5.2" fill="#1832df"/><rect x="1111.9" y="896.6" width="5.2" height="5.2" fill="#182dde"/><rect x="1111.9" y="888.0" width="5.2" height="5.2" fill="#1828dc"/><rect x="1112.5" y="879.4" width="5.2" height="5.2" fill="#1823db"/><rect x="1113.1" y="871.5" width="5.2" height="5.2" fill="#182bdd"/><rect x="1108.8" y="866.6" width="5.2" height="5.2" fill="#1833e0"/><rect x="1101.0" y="866.0" width="5.2" height="5.2" fill="#183ee3"/><rect x="1093.0" y="866.6" width="5.2" height="5.2" fill="#1849e6"/><rect x="1084.9" y="866.6" width="5.2" height="5.2" fill="#1854e8"/><rect x="1076.8" y="868.9" width="5.2" height="5.2" fill="#1863e8"/><rect x="1068.2" y="869.5" width="5.2" height="5.2" fill="#1873e8"/><rect x="1060.1" y="871.1" width="5.2" height="5.2" fill="#1881e8"/><rect x="1052.0" y="870.1" width="5.2" height="5.2" fill="#1891e8"/><rect x="1043.4" y="870.6" width="5.2" height="5.2" fill="#18a0e8"/><rect x="1043.4" y="877.5" width="5.2" height="5.2" fill="#1823db"/><rect x="1044.0" y="886.8" width="5.2" height="5.2" fill="#1829dd"/><rect x="1044.4" y="894.4" width="5.2" height="5.2" fill="#182fde"/><rect x="1044.5" y="902.9" width="5.2" height="5.2" fill="#1836e0"/><rect x="1044.4" y="910.4" width="5.2" height="5.2" fill="#183ce2"/><rect x="1044.9" y="918.4" width="5.2" height="5.2" fill="#1843e4"/><rect x="1044.9" y="926.4" width="5.2" height="5.2" fill="#1849e6"/><rect x="1044.5" y="935.2" width="5.2" height="5.2" fill="#1850e8"/><rect x="1043.4" y="944.4" width="5.2" height="5.2" fill="#1878e8"/><rect x="1042.8" y="952.5" width="5.2" height="5.2" fill="#18a0e8"/><rect x="1041.7" y="961.1" width="5.2" height="5.2" fill="#18c3e3"/><rect x="1040.5" y="969.2" width="5.2" height="5.2" fill="#18dacb"/><rect x="1038.8" y="977.3" width="5.2" height="5.2" fill="#20e040"/><rect x="1036.7" y="984.3" width="5.2" height="5.2" fill="#23e03e"/><rect x="1035.9" y="992.2" width="5.2" height="5.2" fill="#27e03d"/><rect x="1033.6" y="1000.9" width="5.2" height="5.2" fill="#2be03c"/><rect x="1031.2" y="1008.9" width="5.2" height="5.2" fill="#2ee03b"/><rect x="1029.6" y="1016.8" width="5.2" height="5.2" fill="#32e039"/><rect x="1027.2" y="1023.9" width="5.2" height="5.2" fill="#36e038"/><rect x="1025.6" y="1032.6" width="5.2" height="5.2" fill="#39e037"/><rect x="1024.0" y="1040.6" width="5.2" height="5.2" fill="#3de036"/><rect x="1023.2" y="1048.5" width="5.2" height="5.2" fill="#41e034"/><rect x="1020.9" y="1057.2" width="5.2" height="5.2" fill="#44e033"/><rect x="1018.5" y="1064.3" width="5.2" height="5.2" fill="#48e032"/><rect x="1017.7" y="1073.1" width="5.2" height="5.2" fill="#4ce031"/><rect x="1016.9" y="1081.0" width="5.2" height="5.2" fill="#50e02f"/><rect x="1016.1" y="1089.7" width="5.2" height="5.2" fill="#e0e010"/><rect x="1016.1" y="1097.6" width="5.2" height="5.2" fill="#e3d711"/><rect x="1016.1" y="1105.6" width="5.2" height="5.2" fill="#e6ce12"/><rect x="1016.1" y="1113.5" width="5.2" height="5.2" fill="#eeb317"/><rect x="1016.1" y="1122.2" width="5.2" height="5.2" fill="#efb017"/><rect x="1015.3" y="1130.1" width="5.2" height="5.2" fill="#efb217"/><rect x="1016.9" y="1138.1" width="5.2" height="5.2" fill="#f0a418"/><rect x="1016.9" y="1146.8" width="5.2" height="5.2" fill="#f0ab18"/><rect x="1017.7" y="1154.7" width="5.2" height="5.2" fill="#f09318"/><rect x="1015.3" y="1160.3" width="5.2" height="5.2" fill="#efb017"/><rect x="1006.6" y="1162.6" width="5.2" height="5.2" fill="#ef7a18"/><rect x="998.7" y="1164.2" width="5.2" height="5.2" fill="#f0a618"/><rect x="990.8" y="1165.0" width="5.2" height="5.2" fill="#efb117"/><rect x="982.8" y="1165.0" width="5.2" height="5.2" fill="#ecba16"/><rect x="974.1" y="1165.0" width="5.2" height="5.2" fill="#ef7e18"/><rect x="966.2" y="1163.4" width="5.2" height="5.2" fill="#ef7e18"/><rect x="958.2" y="1161.0" width="5.2" height="5.2" fill="#f09218"/><rect x="950.3" y="1162.6" width="5.2" height="5.2" fill="#edb616"/><rect x="943.2" y="1166.6" width="5.2" height="5.2" fill="#ebbc15"/><rect x="935.3" y="1166.6" width="5.2" height="5.2" fill="#ecbb16"/><rect x="927.4" y="1165.0" width="5.2" height="5.2" fill="#efb017"/><rect x="919.4" y="1162.6" width="5.2" height="5.2" fill="#e6cc13"/><rect x="910.7" y="1161.8" width="5.2" height="5.2" fill="#edb716"/><rect x="903.6" y="1158.7" width="5.2" height="5.2" fill="#e7c913"/><rect x="903.6" y="1152.3" width="5.2" height="5.2" fill="#f09218"/><rect x="909.1" y="1146.0" width="5.2" height="5.2" fill="#f09418"/><rect x="911.5" y="1138.1" width="5.2" height="5.2" fill="#c8e014"/><rect x="914.7" y="1130.9" width="5.2" height="5.2" fill="#bce016"/><rect x="916.2" y="1122.2" width="5.2" height="5.2" fill="#b0e018"/><rect x="917.8" y="1114.3" width="5.2" height="5.2" fill="#a4e01a"/><rect x="919.4" y="1106.4" width="5.2" height="5.2" fill="#98e01b"/><rect x="919.4" y="1098.4" width="5.2" height="5.2" fill="#8ce01d"/><rect x="921.0" y="1090.5" width="5.2" height="5.2" fill="#80e01f"/><rect x="923.4" y="1081.8" width="5.2" height="5.2" fill="#74e023"/><rect x="925.0" y="1073.9" width="5.2" height="5.2" fill="#68e027"/><rect x="926.5" y="1065.9" width="5.2" height="5.2" fill="#63e029"/><rect x="928.1" y="1058.0" width="5.2" height="5.2" fill="#5ee02b"/><rect x="928.9" y="1050.1" width="5.2" height="5.2" fill="#59e02c"/><rect x="931.3" y="1042.2" width="5.2" height="5.2" fill="#54e02e"/><rect x="932.1" y="1033.4" width="5.2" height="5.2" fill="#50e02f"/><rect x="933.7" y="1025.5" width="5.2" height="5.2" fill="#4be031"/><rect x="936.1" y="1017.6" width="5.2" height="5.2" fill="#46e033"/><rect x="936.8" y="1009.7" width="5.2" height="5.2" fill="#41e034"/><rect x="938.4" y="1001.7" width="5.2" height="5.2" fill="#3ce036"/><rect x="940.0" y="993.8" width="5.2" height="5.2" fill="#38e037"/><rect x="941.6" y="985.1" width="5.2" height="5.2" fill="#33e039"/><rect x="944.3" y="977.3" width="5.2" height="5.2" fill="#2ee03b"/><rect x="946.0" y="969.8" width="5.2" height="5.2" fill="#29e03c"/><rect x="948.3" y="961.1" width="5.2" height="5.2" fill="#24e03e"/><rect x="950.6" y="953.6" width="5.2" height="5.2" fill="#20e040"/><rect x="952.3" y="945.6" width="5.2" height="5.2" fill="#19e086"/><rect x="953.5" y="938.1" width="5.2" height="5.2" fill="#18dcb6"/><rect x="956.4" y="930.0" width="5.2" height="5.2" fill="#18d8e0"/><rect x="959.2" y="922.5" width="5.2" height="5.2" fill="#1878e8"/><rect x="962.1" y="915.0" width="5.2" height="5.2" fill="#186ce8"/><rect x="965.0" y="906.9" width="5.2" height="5.2" fill="#1860e8"/><rect x="968.5" y="898.9" width="5.2" height="5.2" fill="#1855e8"/><rect x="969.6" y="891.4" width="5.2" height="5.2" fill="#184be6"/><rect x="973.1" y="883.9" width="5.2" height="5.2" fill="#1843e4"/><rect x="976.5" y="876.4" width="5.2" height="5.2" fill="#183be2"/><rect x="981.1" y="869.5" width="5.2" height="5.2" fill="#1833df"/><rect x="981.7" y="860.8" width="5.2" height="5.2" fill="#182bdd"/><rect x="982.9" y="852.9" width="5.2" height="5.2" fill="#1823db"/><rect x="984.6" y="845.3" width="5.2" height="5.2" fill="#18a7e7"/><rect x="976.5" y="844.7" width="5.2" height="5.2" fill="#20e040"/><rect x="968.5" y="843.5" width="5.2" height="5.2" fill="#1834e0"/><rect x="960.4" y="843.0" width="5.2" height="5.2" fill="#1838e1"/><rect x="952.3" y="843.0" width="5.2" height="5.2" fill="#183de2"/><rect x="943.7" y="841.8" width="5.2" height="5.2" fill="#1841e4"/><rect x="935.6" y="840.7" width="5.2" height="5.2" fill="#1846e5"/><rect x="927.5" y="839.2" width="5.2" height="5.2" fill="#184be6"/><rect x="919.5" y="838.4" width="5.2" height="5.2" fill="#1850e8"/><rect x="917.7" y="845.8" width="5.2" height="5.2" fill="#ea5d18"/><rect x="917.2" y="853.4" width="5.2" height="5.2" fill="#1818d8"/><rect x="916.6" y="861.4" width="5.2" height="5.2" fill="#1818d8"/><rect x="916.6" y="870.1" width="5.2" height="5.2" fill="#1818d8"/><rect x="916.0" y="878.1" width="5.2" height="5.2" fill="#1818d8"/><rect x="914.9" y="886.8" width="5.2" height="5.2" fill="#f08f18"/><rect x="913.1" y="894.3" width="5.2" height="5.2" fill="#1ce063"/><rect x="911.4" y="902.9" width="5.2" height="5.2" fill="#1823db"/><rect x="910.3" y="910.4" width="5.2" height="5.2" fill="#1878e8"/><rect x="907.4" y="918.5" width="5.2" height="5.2" fill="#188ce8"/><rect x="906.8" y="926.5" width="5.2" height="5.2" fill="#18a1e7"/><rect x="905.1" y="934.6" width="5.2" height="5.2" fill="#18b3e5"/><rect x="903.3" y="942.7" width="5.2" height="5.2" fill="#18c5e2"/><rect x="902.8" y="950.7" width="5.2" height="5.2" fill="#18d8e0"/><rect x="901.6" y="958.8" width="5.2" height="5.2" fill="#1833e0"/><rect x="901.0" y="966.9" width="5.2" height="5.2" fill="#184fe8"/><rect x="899.3" y="975.0" width="5.2" height="5.2" fill="#1878e8"/><rect x="898.0" y="983.5" width="5.2" height="5.2" fill="#18a0e8"/><rect x="895.6" y="991.4" width="5.2" height="5.2" fill="#38e037"/><rect x="893.3" y="999.4" width="5.2" height="5.2" fill="#40e035"/><rect x="889.3" y="1006.5" width="5.2" height="5.2" fill="#48e032"/><rect x="887.7" y="1014.4" width="5.2" height="5.2" fill="#50e02f"/><rect x="885.3" y="1023.1" width="5.2" height="5.2" fill="#58e02d"/><rect x="882.2" y="1031.1" width="5.2" height="5.2" fill="#60e02a"/><rect x="880.6" y="1038.2" width="5.2" height="5.2" fill="#67e028"/><rect x="878.2" y="1046.1" width="5.2" height="5.2" fill="#70e025"/><rect x="876.5" y="1054.0" width="5.2" height="5.2" fill="#77e022"/><rect x="874.9" y="1062.0" width="5.2" height="5.2" fill="#80e020"/><rect x="872.5" y="1069.9" width="5.2" height="5.2" fill="#9ce01b"/><rect x="870.9" y="1077.8" width="5.2" height="5.2" fill="#b9e016"/><rect x="868.5" y="1085.7" width="5.2" height="5.2" fill="#d6e011"/><rect x="866.2" y="1093.7" width="5.2" height="5.2" fill="#e3d611"/><rect x="863.0" y="1101.6" width="5.2" height="5.2" fill="#ebbe15"/><rect x="861.4" y="1109.5" width="5.2" height="5.2" fill="#f0a718"/><rect x="859.8" y="1117.4" width="5.2" height="5.2" fill="#eac115"/><rect x="859.0" y="1125.4" width="5.2" height="5.2" fill="#f0a618"/><rect x="857.4" y="1134.1" width="5.2" height="5.2" fill="#f08818"/><rect x="849.5" y="1135.7" width="5.2" height="5.2" fill="#ec6918"/><rect x="841.6" y="1134.1" width="5.2" height="5.2" fill="#f09818"/><rect x="833.7" y="1131.7" width="5.2" height="5.2" fill="#f08c18"/><rect x="825.7" y="1129.4" width="5.2" height="5.2" fill="#e9c414"/><rect x="817.8" y="1127.0" width="5.2" height="5.2" fill="#e7ca13"/><rect x="810.7" y="1123.0" width="5.2" height="5.2" fill="#e9c314"/><rect x="802.8" y="1123.8" width="5.2" height="5.2" fill="#e3d411"/><rect x="794.0" y="1123.8" width="5.2" height="5.2" fill="#b0e018"/><rect x="786.9" y="1122.2" width="5.2" height="5.2" fill="#68e027"/><rect x="778.2" y="1121.4" width="5.2" height="5.2" fill="#20e040"/><rect x="779.0" y="1114.3" width="5.2" height="5.2" fill="#22e03f"/><rect x="782.9" y="1108.9" width="5.2" height="5.2" fill="#26e03e"/><rect x="786.4" y="1103.4" width="5.2" height="5.2" fill="#29e03c"/><rect x="788.5" y="1097.9" width="5.2" height="5.2" fill="#2ce03b"/><rect x="790.1" y="1092.1" width="5.2" height="5.2" fill="#2ee03b"/><rect x="791.7" y="1084.2" width="5.2" height="5.2" fill="#32e039"/><rect x="793.2" y="1076.2" width="5.2" height="5.2" fill="#35e038"/><rect x="795.6" y="1068.3" width="5.2" height="5.2" fill="#38e037"/><rect x="798.0" y="1060.4" width="5.2" height="5.2" fill="#3ae037"/><rect x="800.4" y="1052.5" width="5.2" height="5.2" fill="#3ee035"/><rect x="801.2" y="1044.5" width="5.2" height="5.2" fill="#41e034"/><rect x="803.6" y="1036.6" width="5.2" height="5.2" fill="#44e033"/><rect x="805.1" y="1028.7" width="5.2" height="5.2" fill="#46e033"/><rect x="807.5" y="1020.0" width="5.2" height="5.2" fill="#4ae031"/><rect x="809.1" y="1012.0" width="5.2" height="5.2" fill="#4de030"/><rect x="811.5" y="1004.1" width="5.2" height="5.2" fill="#50e02f"/><rect x="813.1" y="996.2" width="5.2" height="5.2" fill="#18a0e8"/><rect x="815.4" y="988.3" width="5.2" height="5.2" fill="#1878e8"/><rect x="817.2" y="980.0" width="5.2" height="5.2" fill="#1850e8"/><rect x="819.2" y="972.4" width="5.2" height="5.2" fill="#1833e0"/><rect x="821.6" y="964.9" width="5.2" height="5.2" fill="#ed6e18"/><rect x="823.3" y="956.7" width="5.2" height="5.2" fill="#182fde"/><rect x="824.0" y="948.5" width="5.2" height="5.2" fill="#18cae2"/><rect x="826.8" y="940.3" width="5.2" height="5.2" fill="#182bdd"/><rect x="828.8" y="932.7" width="5.2" height="5.2" fill="#1829dd"/><rect x="830.2" y="924.5" width="5.2" height="5.2" fill="#1827dc"/><rect x="831.5" y="916.3" width="5.2" height="5.2" fill="#1825db"/><rect x="831.5" y="908.1" width="5.2" height="5.2" fill="#1823db"/><rect x="832.9" y="900.6" width="5.2" height="5.2" fill="#ed6e18"/><rect x="837.0" y="893.0" width="5.2" height="5.2" fill="#18cae2"/><rect x="839.1" y="885.5" width="5.2" height="5.2" fill="#18cbe1"/><rect x="840.4" y="878.0" width="5.2" height="5.2" fill="#18cde1"/><rect x="842.5" y="869.8" width="5.2" height="5.2" fill="#18cee1"/><rect x="844.6" y="861.5" width="5.2" height="5.2" fill="#18d0e1"/><rect x="845.9" y="853.3" width="5.2" height="5.2" fill="#18d1e0"/><rect x="847.3" y="845.1" width="5.2" height="5.2" fill="#18d3e0"/><rect x="848.7" y="837.6" width="5.2" height="5.2" fill="#18d4e0"/><rect x="851.4" y="828.7" width="5.2" height="5.2" fill="#18d6e0"/><rect x="846.6" y="824.6" width="5.2" height="5.2" fill="#18d8e0"/><rect x="838.4" y="823.9" width="5.2" height="5.2" fill="#18d9d5"/><rect x="830.9" y="823.2" width="5.2" height="5.2" fill="#18dacb"/><rect x="823.3" y="819.5" width="5.2" height="5.2" fill="#18dbc1"/><rect x="815.1" y="819.5" width="5.2" height="5.2" fill="#18dcb6"/><rect x="806.9" y="819.5" width="5.2" height="5.2" fill="#18ddac"/><rect x="798.7" y="819.1" width="5.2" height="5.2" fill="#18dea2"/><rect x="790.5" y="817.7" width="5.2" height="5.2" fill="#18e098"/><rect x="782.3" y="817.0" width="5.2" height="5.2" fill="#19e086"/><rect x="778.8" y="825.3" width="5.2" height="5.2" fill="#20e040"/><rect x="778.2" y="832.8" width="5.2" height="5.2" fill="#1ee04f"/><rect x="777.5" y="841.0" width="5.2" height="5.2" fill="#1de05f"/><rect x="776.8" y="848.5" width="5.2" height="5.2" fill="#1be06e"/><rect x="775.4" y="856.7" width="5.2" height="5.2" fill="#1ae07e"/><rect x="774.0" y="865.0" width="5.2" height="5.2" fill="#18e08e"/><rect x="773.4" y="874.5" width="5.2" height="5.2" fill="#18df9b"/><rect x="772.7" y="882.1" width="5.2" height="5.2" fill="#18dea4"/><rect x="772.0" y="890.3" width="5.2" height="5.2" fill="#18ddad"/><rect x="770.6" y="897.8" width="5.2" height="5.2" fill="#18dcb6"/><rect x="769.3" y="906.0" width="5.2" height="5.2" fill="#18dac6"/><rect x="767.9" y="914.3" width="5.2" height="5.2" fill="#18d9d5"/><rect x="766.5" y="921.8" width="5.2" height="5.2" fill="#18d4e0"/><rect x="765.1" y="930.0" width="5.2" height="5.2" fill="#18cae2"/><rect x="764.9" y="938.9" width="5.2" height="5.2" fill="#18a0e8"/><rect x="763.5" y="946.4" width="5.2" height="5.2" fill="#189ae8"/><rect x="762.4" y="954.6" width="5.2" height="5.2" fill="#1894e8"/><rect x="761.7" y="962.9" width="5.2" height="5.2" fill="#188ee8"/><rect x="761.0" y="971.1" width="5.2" height="5.2" fill="#1889e8"/><rect x="760.0" y="979.5" width="5.2" height="5.2" fill="#1883e8"/><rect x="759.2" y="987.5" width="5.2" height="5.2" fill="#187de8"/><rect x="756.8" y="995.4" width="5.2" height="5.2" fill="#1878e8"/><rect x="755.2" y="1003.3" width="5.2" height="5.2" fill="#185ee8"/><rect x="754.4" y="1011.2" width="5.2" height="5.2" fill="#1847e5"/><rect x="752.0" y="1019.2" width="5.2" height="5.2" fill="#1835e0"/><rect x="749.7" y="1027.1" width="5.2" height="5.2" fill="#1823db"/><rect x="747.3" y="1035.0" width="5.2" height="5.2" fill="#18d8e0"/><rect x="746.5" y="1042.9" width="5.2" height="5.2" fill="#1825db"/><rect x="744.9" y="1050.9" width="5.2" height="5.2" fill="#ed6e18"/><rect x="743.3" y="1059.6" width="5.2" height="5.2" fill="#1827dc"/><rect x="742.5" y="1067.5" width="5.2" height="5.2" fill="#1829dc"/><rect x="740.9" y="1075.4" width="5.2" height="5.2" fill="#182add"/><rect x="739.3" y="1083.4" width="5.2" height="5.2" fill="#182bdd"/><rect x="737.8" y="1091.3" width="5.2" height="5.2" fill="#182cdd"/><rect x="737.8" y="1099.2" width="5.2" height="5.2" fill="#182ede"/><rect x="737.8" y="1107.9" width="5.2" height="5.2" fill="#182fde"/><rect x="738.6" y="1115.9" width="5.2" height="5.2" fill="#1830de"/><rect x="738.6" y="1124.6" width="5.2" height="5.2" fill="#1831df"/><rect x="737.8" y="1132.5" width="5.2" height="5.2" fill="#20e040"/><rect x="737.0" y="1140.4" width="5.2" height="5.2" fill="#20e040"/><rect x="729.8" y="1144.4" width="5.2" height="5.2" fill="#68e027"/><rect x="721.9" y="1144.4" width="5.2" height="5.2" fill="#72e024"/><rect x="714.0" y="1147.6" width="5.2" height="5.2" fill="#7ce021"/><rect x="706.1" y="1149.2" width="5.2" height="5.2" fill="#86e01e"/><rect x="698.1" y="1151.5" width="5.2" height="5.2" fill="#91e01d"/><rect x="690.2" y="1153.1" width="5.2" height="5.2" fill="#9be01b"/><rect x="682.9" y="1156.9" width="5.2" height="5.2" fill="#a5e019"/><rect x="675.9" y="1161.0" width="5.2" height="5.2" fill="#b0e018"/><rect x="668.0" y="1165.0" width="5.2" height="5.2" fill="#6de026"/><rect x="665.6" y="1159.5" width="5.2" height="5.2" fill="#2ce03b"/><rect x="670.4" y="1152.3" width="5.2" height="5.2" fill="#18e08f"/><rect x="669.6" y="1143.6" width="5.2" height="5.2" fill="#18dacb"/><rect x="670.4" y="1135.7" width="5.2" height="5.2" fill="#18b5e5"/><rect x="672.8" y="1128.5" width="5.2" height="5.2" fill="#1880e8"/><rect x="670.4" y="1121.4" width="5.2" height="5.2" fill="#184ae6"/><rect x="665.6" y="1114.3" width="5.2" height="5.2" fill="#1823db"/><rect x="662.5" y="1107.1" width="5.2" height="5.2" fill="#1827dc"/><rect x="663.3" y="1099.2" width="5.2" height="5.2" fill="#ed6e18"/><rect x="661.7" y="1090.5" width="5.2" height="5.2" fill="#182fde"/><rect x="656.9" y="1081.8" width="5.2" height="5.2" fill="#1833e0"/><rect x="657.7" y="1075.4" width="5.2" height="5.2" fill="#18e097"/><rect x="660.1" y="1067.5" width="5.2" height="5.2" fill="#18e090"/><rect x="663.3" y="1059.6" width="5.2" height="5.2" fill="#19e089"/><rect x="664.8" y="1051.7" width="5.2" height="5.2" fill="#19e082"/><rect x="664.8" y="1043.7" width="5.2" height="5.2" fill="#1ae07b"/><rect x="666.4" y="1035.8" width="5.2" height="5.2" fill="#1be074"/><rect x="668.0" y="1027.9" width="5.2" height="5.2" fill="#1ce069"/><rect x="668.8" y="1019.2" width="5.2" height="5.2" fill="#1de05e"/><rect x="669.6" y="1011.2" width="5.2" height="5.2" fill="#1ee053"/><rect x="669.6" y="1002.5" width="5.2" height="5.2" fill="#1fe048"/><rect x="671.2" y="995.4" width="5.2" height="5.2" fill="#21e03f"/><rect x="673.6" y="986.7" width="5.2" height="5.2" fill="#29e03c"/><rect x="675.1" y="978.7" width="5.2" height="5.2" fill="#30e03a"/><rect x="674.8" y="970.4" width="5.2" height="5.2" fill="#38e037"/><rect x="675.5" y="963.5" width="5.2" height="5.2" fill="#3ee035"/><rect x="676.8" y="955.3" width="5.2" height="5.2" fill="#44e033"/><rect x="679.2" y="946.4" width="5.2" height="5.2" fill="#4ae031"/><rect x="680.3" y="938.2" width="5.2" height="5.2" fill="#50e02f"/><rect x="682.3" y="930.0" width="5.2" height="5.2" fill="#56e02d"/><rect x="682.3" y="921.1" width="5.2" height="5.2" fill="#5ce02b"/><rect x="683.3" y="913.6" width="5.2" height="5.2" fill="#62e029"/><rect x="685.7" y="906.0" width="5.2" height="5.2" fill="#68e027"/><rect x="688.4" y="898.4" width="5.2" height="5.2" fill="#6ee025"/><rect x="690.9" y="891.0" width="5.2" height="5.2" fill="#74e023"/><rect x="693.3" y="882.8" width="5.2" height="5.2" fill="#79e022"/><rect x="695.3" y="875.2" width="5.2" height="5.2" fill="#80e020"/><rect x="697.4" y="867.0" width="5.2" height="5.2" fill="#86e01f"/><rect x="699.7" y="859.4" width="5.2" height="5.2" fill="#8ce01e"/><rect x="702.2" y="851.3" width="5.2" height="5.2" fill="#92e01d"/><rect x="702.8" y="843.7" width="5.2" height="5.2" fill="#98e01c"/><rect x="702.8" y="834.8" width="5.2" height="5.2" fill="#9ee01b"/><rect x="704.2" y="827.3" width="5.2" height="5.2" fill="#a4e01a"/><rect x="707.6" y="819.8" width="5.2" height="5.2" fill="#aae019"/><rect x="713.1" y="812.3" width="5.2" height="5.2" fill="#b0e018"/><rect x="715.9" y="806.1" width="5.2" height="5.2" fill="#bce016"/><rect x="724.1" y="806.1" width="5.2" height="5.2" fill="#c8e014"/><rect x="732.4" y="807.4" width="5.2" height="5.2" fill="#d4e012"/><rect x="739.8" y="808.6" width="5.2" height="5.2" fill="#e0e010"/>
</svg>
</body></html>
